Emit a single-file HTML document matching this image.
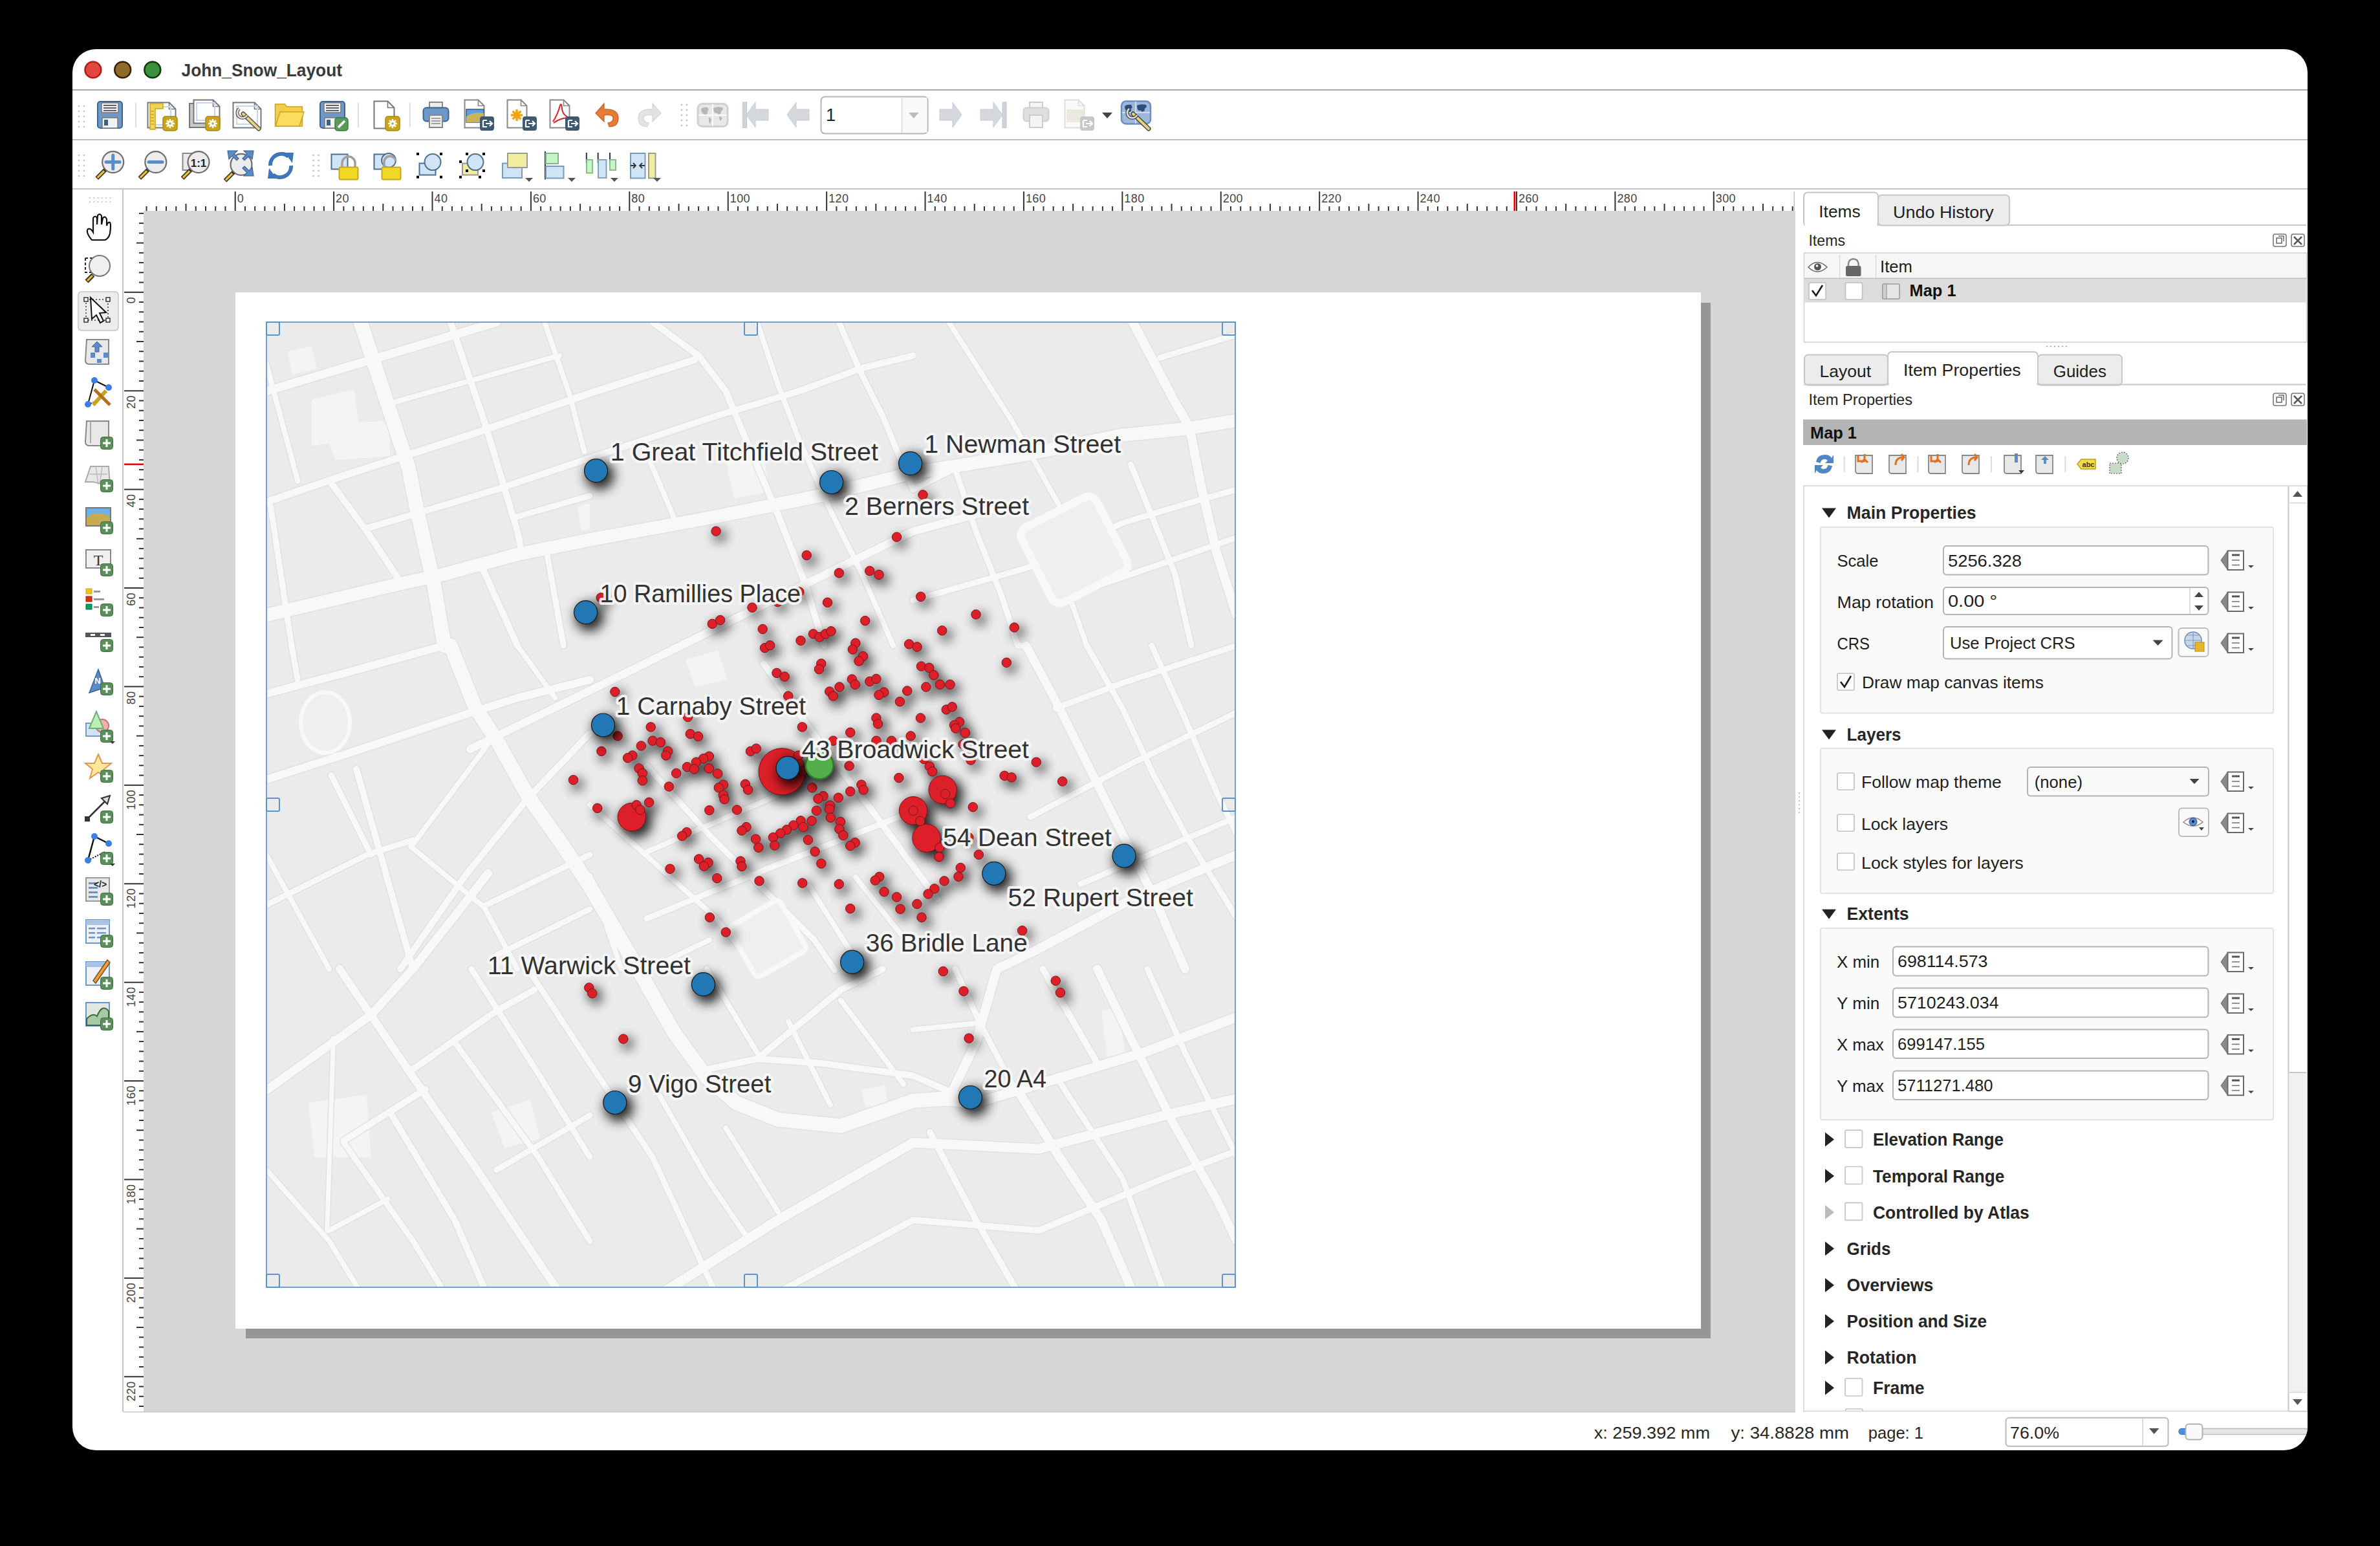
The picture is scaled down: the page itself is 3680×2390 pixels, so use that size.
<!DOCTYPE html>
<html><head><meta charset="utf-8"><style>
html,body{margin:0;padding:0;background:#000;width:3680px;height:2390px;overflow:hidden}
svg{position:absolute;left:0;top:0;font-family:"Liberation Sans", sans-serif}
</style></head><body>
<svg width="3680" height="2390" viewBox="0 0 3680 2390">
<defs><clipPath id="wclip"><rect x="112" y="76" width="3456" height="2166" rx="36"/></clipPath>
<clipPath id="mclip"><rect x="412" y="498" width="1498" height="1492"/></clipPath>
<filter id="blur4" x="-50%" y="-50%" width="200%" height="200%"><feGaussianBlur stdDeviation="9"/></filter>
</defs>
<g clip-path="url(#wclip)">
<rect x="112" y="76" width="3456" height="2166" fill="#fff"/>
<circle cx="143.90" cy="107.90" r="12.40" fill="#e2463f" stroke="#b11d17" stroke-width="2.6" />
<circle cx="189.70" cy="107.90" r="12.40" fill="#8f6a28" stroke="#3b1f06" stroke-width="2.6" />
<circle cx="235.80" cy="107.90" r="12.40" fill="#3c8f3c" stroke="#0b3b0b" stroke-width="2.6" />
<text x="280.50" y="118.17" font-size="27" fill="#3a3a3a" font-weight="bold" text-anchor="start" textLength="248.5" lengthAdjust="spacingAndGlyphs" >John_Snow_Layout</text>
<rect x="112.00" y="138.00" width="3456.00" height="2.00" rx="0" fill="#a6a6a6" stroke="none" stroke-width="1" />
<rect x="112.00" y="215.00" width="3456.00" height="2.00" rx="0" fill="#c4c4c4" stroke="none" stroke-width="1" />
<rect x="112.00" y="291.00" width="3456.00" height="2.00" rx="0" fill="#c4c4c4" stroke="none" stroke-width="1" />
<rect x="189.00" y="293.00" width="2.00" height="1889.00" rx="0" fill="#c4c4c4" stroke="none" stroke-width="1" />
<rect x="222.00" y="326.00" width="2554.00" height="1856.00" rx="0" fill="#d6d6d6" stroke="none" stroke-width="1" />
<rect x="190.00" y="2182.00" width="2586.00" height="1.50" rx="0" fill="#c8c8c8" stroke="none" stroke-width="1" />
<rect x="380.00" y="468.00" width="2265.00" height="1601.00" rx="0" fill="#969696" stroke="none" stroke-width="1" />
<rect x="364.00" y="452.00" width="2266.00" height="1602.00" rx="0" fill="#fff" stroke="none" stroke-width="1" />
<rect x="225.53" y="319.00" width="2.00" height="7.00" rx="0" fill="#333" stroke="none" stroke-width="1" />
<rect x="240.78" y="319.00" width="2.00" height="7.00" rx="0" fill="#333" stroke="none" stroke-width="1" />
<rect x="256.02" y="319.00" width="2.00" height="7.00" rx="0" fill="#333" stroke="none" stroke-width="1" />
<rect x="271.26" y="319.00" width="2.00" height="7.00" rx="0" fill="#333" stroke="none" stroke-width="1" />
<rect x="286.50" y="315.00" width="2.00" height="11.00" rx="0" fill="#333" stroke="none" stroke-width="1" />
<rect x="301.74" y="319.00" width="2.00" height="7.00" rx="0" fill="#333" stroke="none" stroke-width="1" />
<rect x="316.98" y="319.00" width="2.00" height="7.00" rx="0" fill="#333" stroke="none" stroke-width="1" />
<rect x="332.22" y="319.00" width="2.00" height="7.00" rx="0" fill="#333" stroke="none" stroke-width="1" />
<rect x="347.46" y="319.00" width="2.00" height="7.00" rx="0" fill="#333" stroke="none" stroke-width="1" />
<rect x="362.70" y="296.00" width="2.00" height="30.00" rx="0" fill="#333" stroke="none" stroke-width="1" />
<text x="366.70" y="312.50" font-size="18" fill="#444" font-weight="normal" text-anchor="start" letter-spacing="0.4">0</text>
<rect x="377.94" y="319.00" width="2.00" height="7.00" rx="0" fill="#333" stroke="none" stroke-width="1" />
<rect x="393.18" y="319.00" width="2.00" height="7.00" rx="0" fill="#333" stroke="none" stroke-width="1" />
<rect x="408.42" y="319.00" width="2.00" height="7.00" rx="0" fill="#333" stroke="none" stroke-width="1" />
<rect x="423.66" y="319.00" width="2.00" height="7.00" rx="0" fill="#333" stroke="none" stroke-width="1" />
<rect x="438.90" y="315.00" width="2.00" height="11.00" rx="0" fill="#333" stroke="none" stroke-width="1" />
<rect x="454.14" y="319.00" width="2.00" height="7.00" rx="0" fill="#333" stroke="none" stroke-width="1" />
<rect x="469.38" y="319.00" width="2.00" height="7.00" rx="0" fill="#333" stroke="none" stroke-width="1" />
<rect x="484.62" y="319.00" width="2.00" height="7.00" rx="0" fill="#333" stroke="none" stroke-width="1" />
<rect x="499.87" y="319.00" width="2.00" height="7.00" rx="0" fill="#333" stroke="none" stroke-width="1" />
<rect x="515.11" y="296.00" width="2.00" height="30.00" rx="0" fill="#333" stroke="none" stroke-width="1" />
<text x="519.11" y="312.50" font-size="18" fill="#444" font-weight="normal" text-anchor="start" letter-spacing="0.4">20</text>
<rect x="530.35" y="319.00" width="2.00" height="7.00" rx="0" fill="#333" stroke="none" stroke-width="1" />
<rect x="545.59" y="319.00" width="2.00" height="7.00" rx="0" fill="#333" stroke="none" stroke-width="1" />
<rect x="560.83" y="319.00" width="2.00" height="7.00" rx="0" fill="#333" stroke="none" stroke-width="1" />
<rect x="576.07" y="319.00" width="2.00" height="7.00" rx="0" fill="#333" stroke="none" stroke-width="1" />
<rect x="591.31" y="315.00" width="2.00" height="11.00" rx="0" fill="#333" stroke="none" stroke-width="1" />
<rect x="606.55" y="319.00" width="2.00" height="7.00" rx="0" fill="#333" stroke="none" stroke-width="1" />
<rect x="621.79" y="319.00" width="2.00" height="7.00" rx="0" fill="#333" stroke="none" stroke-width="1" />
<rect x="637.03" y="319.00" width="2.00" height="7.00" rx="0" fill="#333" stroke="none" stroke-width="1" />
<rect x="652.27" y="319.00" width="2.00" height="7.00" rx="0" fill="#333" stroke="none" stroke-width="1" />
<rect x="667.51" y="296.00" width="2.00" height="30.00" rx="0" fill="#333" stroke="none" stroke-width="1" />
<text x="671.51" y="312.50" font-size="18" fill="#444" font-weight="normal" text-anchor="start" letter-spacing="0.4">40</text>
<rect x="682.75" y="319.00" width="2.00" height="7.00" rx="0" fill="#333" stroke="none" stroke-width="1" />
<rect x="697.99" y="319.00" width="2.00" height="7.00" rx="0" fill="#333" stroke="none" stroke-width="1" />
<rect x="713.23" y="319.00" width="2.00" height="7.00" rx="0" fill="#333" stroke="none" stroke-width="1" />
<rect x="728.47" y="319.00" width="2.00" height="7.00" rx="0" fill="#333" stroke="none" stroke-width="1" />
<rect x="743.71" y="315.00" width="2.00" height="11.00" rx="0" fill="#333" stroke="none" stroke-width="1" />
<rect x="758.96" y="319.00" width="2.00" height="7.00" rx="0" fill="#333" stroke="none" stroke-width="1" />
<rect x="774.20" y="319.00" width="2.00" height="7.00" rx="0" fill="#333" stroke="none" stroke-width="1" />
<rect x="789.44" y="319.00" width="2.00" height="7.00" rx="0" fill="#333" stroke="none" stroke-width="1" />
<rect x="804.68" y="319.00" width="2.00" height="7.00" rx="0" fill="#333" stroke="none" stroke-width="1" />
<rect x="819.92" y="296.00" width="2.00" height="30.00" rx="0" fill="#333" stroke="none" stroke-width="1" />
<text x="823.92" y="312.50" font-size="18" fill="#444" font-weight="normal" text-anchor="start" letter-spacing="0.4">60</text>
<rect x="835.16" y="319.00" width="2.00" height="7.00" rx="0" fill="#333" stroke="none" stroke-width="1" />
<rect x="850.40" y="319.00" width="2.00" height="7.00" rx="0" fill="#333" stroke="none" stroke-width="1" />
<rect x="865.64" y="319.00" width="2.00" height="7.00" rx="0" fill="#333" stroke="none" stroke-width="1" />
<rect x="880.88" y="319.00" width="2.00" height="7.00" rx="0" fill="#333" stroke="none" stroke-width="1" />
<rect x="896.12" y="315.00" width="2.00" height="11.00" rx="0" fill="#333" stroke="none" stroke-width="1" />
<rect x="911.36" y="319.00" width="2.00" height="7.00" rx="0" fill="#333" stroke="none" stroke-width="1" />
<rect x="926.60" y="319.00" width="2.00" height="7.00" rx="0" fill="#333" stroke="none" stroke-width="1" />
<rect x="941.84" y="319.00" width="2.00" height="7.00" rx="0" fill="#333" stroke="none" stroke-width="1" />
<rect x="957.08" y="319.00" width="2.00" height="7.00" rx="0" fill="#333" stroke="none" stroke-width="1" />
<rect x="972.32" y="296.00" width="2.00" height="30.00" rx="0" fill="#333" stroke="none" stroke-width="1" />
<text x="976.32" y="312.50" font-size="18" fill="#444" font-weight="normal" text-anchor="start" letter-spacing="0.4">80</text>
<rect x="987.56" y="319.00" width="2.00" height="7.00" rx="0" fill="#333" stroke="none" stroke-width="1" />
<rect x="1002.81" y="319.00" width="2.00" height="7.00" rx="0" fill="#333" stroke="none" stroke-width="1" />
<rect x="1018.05" y="319.00" width="2.00" height="7.00" rx="0" fill="#333" stroke="none" stroke-width="1" />
<rect x="1033.29" y="319.00" width="2.00" height="7.00" rx="0" fill="#333" stroke="none" stroke-width="1" />
<rect x="1048.53" y="315.00" width="2.00" height="11.00" rx="0" fill="#333" stroke="none" stroke-width="1" />
<rect x="1063.77" y="319.00" width="2.00" height="7.00" rx="0" fill="#333" stroke="none" stroke-width="1" />
<rect x="1079.01" y="319.00" width="2.00" height="7.00" rx="0" fill="#333" stroke="none" stroke-width="1" />
<rect x="1094.25" y="319.00" width="2.00" height="7.00" rx="0" fill="#333" stroke="none" stroke-width="1" />
<rect x="1109.49" y="319.00" width="2.00" height="7.00" rx="0" fill="#333" stroke="none" stroke-width="1" />
<rect x="1124.73" y="296.00" width="2.00" height="30.00" rx="0" fill="#333" stroke="none" stroke-width="1" />
<text x="1128.73" y="312.50" font-size="18" fill="#444" font-weight="normal" text-anchor="start" letter-spacing="0.4">100</text>
<rect x="1139.97" y="319.00" width="2.00" height="7.00" rx="0" fill="#333" stroke="none" stroke-width="1" />
<rect x="1155.21" y="319.00" width="2.00" height="7.00" rx="0" fill="#333" stroke="none" stroke-width="1" />
<rect x="1170.45" y="319.00" width="2.00" height="7.00" rx="0" fill="#333" stroke="none" stroke-width="1" />
<rect x="1185.69" y="319.00" width="2.00" height="7.00" rx="0" fill="#333" stroke="none" stroke-width="1" />
<rect x="1200.93" y="315.00" width="2.00" height="11.00" rx="0" fill="#333" stroke="none" stroke-width="1" />
<rect x="1216.17" y="319.00" width="2.00" height="7.00" rx="0" fill="#333" stroke="none" stroke-width="1" />
<rect x="1231.41" y="319.00" width="2.00" height="7.00" rx="0" fill="#333" stroke="none" stroke-width="1" />
<rect x="1246.65" y="319.00" width="2.00" height="7.00" rx="0" fill="#333" stroke="none" stroke-width="1" />
<rect x="1261.90" y="319.00" width="2.00" height="7.00" rx="0" fill="#333" stroke="none" stroke-width="1" />
<rect x="1277.14" y="296.00" width="2.00" height="30.00" rx="0" fill="#333" stroke="none" stroke-width="1" />
<text x="1281.14" y="312.50" font-size="18" fill="#444" font-weight="normal" text-anchor="start" letter-spacing="0.4">120</text>
<rect x="1292.38" y="319.00" width="2.00" height="7.00" rx="0" fill="#333" stroke="none" stroke-width="1" />
<rect x="1307.62" y="319.00" width="2.00" height="7.00" rx="0" fill="#333" stroke="none" stroke-width="1" />
<rect x="1322.86" y="319.00" width="2.00" height="7.00" rx="0" fill="#333" stroke="none" stroke-width="1" />
<rect x="1338.10" y="319.00" width="2.00" height="7.00" rx="0" fill="#333" stroke="none" stroke-width="1" />
<rect x="1353.34" y="315.00" width="2.00" height="11.00" rx="0" fill="#333" stroke="none" stroke-width="1" />
<rect x="1368.58" y="319.00" width="2.00" height="7.00" rx="0" fill="#333" stroke="none" stroke-width="1" />
<rect x="1383.82" y="319.00" width="2.00" height="7.00" rx="0" fill="#333" stroke="none" stroke-width="1" />
<rect x="1399.06" y="319.00" width="2.00" height="7.00" rx="0" fill="#333" stroke="none" stroke-width="1" />
<rect x="1414.30" y="319.00" width="2.00" height="7.00" rx="0" fill="#333" stroke="none" stroke-width="1" />
<rect x="1429.54" y="296.00" width="2.00" height="30.00" rx="0" fill="#333" stroke="none" stroke-width="1" />
<text x="1433.54" y="312.50" font-size="18" fill="#444" font-weight="normal" text-anchor="start" letter-spacing="0.4">140</text>
<rect x="1444.78" y="319.00" width="2.00" height="7.00" rx="0" fill="#333" stroke="none" stroke-width="1" />
<rect x="1460.02" y="319.00" width="2.00" height="7.00" rx="0" fill="#333" stroke="none" stroke-width="1" />
<rect x="1475.26" y="319.00" width="2.00" height="7.00" rx="0" fill="#333" stroke="none" stroke-width="1" />
<rect x="1490.50" y="319.00" width="2.00" height="7.00" rx="0" fill="#333" stroke="none" stroke-width="1" />
<rect x="1505.75" y="315.00" width="2.00" height="11.00" rx="0" fill="#333" stroke="none" stroke-width="1" />
<rect x="1520.99" y="319.00" width="2.00" height="7.00" rx="0" fill="#333" stroke="none" stroke-width="1" />
<rect x="1536.23" y="319.00" width="2.00" height="7.00" rx="0" fill="#333" stroke="none" stroke-width="1" />
<rect x="1551.47" y="319.00" width="2.00" height="7.00" rx="0" fill="#333" stroke="none" stroke-width="1" />
<rect x="1566.71" y="319.00" width="2.00" height="7.00" rx="0" fill="#333" stroke="none" stroke-width="1" />
<rect x="1581.95" y="296.00" width="2.00" height="30.00" rx="0" fill="#333" stroke="none" stroke-width="1" />
<text x="1585.95" y="312.50" font-size="18" fill="#444" font-weight="normal" text-anchor="start" letter-spacing="0.4">160</text>
<rect x="1597.19" y="319.00" width="2.00" height="7.00" rx="0" fill="#333" stroke="none" stroke-width="1" />
<rect x="1612.43" y="319.00" width="2.00" height="7.00" rx="0" fill="#333" stroke="none" stroke-width="1" />
<rect x="1627.67" y="319.00" width="2.00" height="7.00" rx="0" fill="#333" stroke="none" stroke-width="1" />
<rect x="1642.91" y="319.00" width="2.00" height="7.00" rx="0" fill="#333" stroke="none" stroke-width="1" />
<rect x="1658.15" y="315.00" width="2.00" height="11.00" rx="0" fill="#333" stroke="none" stroke-width="1" />
<rect x="1673.39" y="319.00" width="2.00" height="7.00" rx="0" fill="#333" stroke="none" stroke-width="1" />
<rect x="1688.63" y="319.00" width="2.00" height="7.00" rx="0" fill="#333" stroke="none" stroke-width="1" />
<rect x="1703.87" y="319.00" width="2.00" height="7.00" rx="0" fill="#333" stroke="none" stroke-width="1" />
<rect x="1719.11" y="319.00" width="2.00" height="7.00" rx="0" fill="#333" stroke="none" stroke-width="1" />
<rect x="1734.35" y="296.00" width="2.00" height="30.00" rx="0" fill="#333" stroke="none" stroke-width="1" />
<text x="1738.35" y="312.50" font-size="18" fill="#444" font-weight="normal" text-anchor="start" letter-spacing="0.4">180</text>
<rect x="1749.59" y="319.00" width="2.00" height="7.00" rx="0" fill="#333" stroke="none" stroke-width="1" />
<rect x="1764.84" y="319.00" width="2.00" height="7.00" rx="0" fill="#333" stroke="none" stroke-width="1" />
<rect x="1780.08" y="319.00" width="2.00" height="7.00" rx="0" fill="#333" stroke="none" stroke-width="1" />
<rect x="1795.32" y="319.00" width="2.00" height="7.00" rx="0" fill="#333" stroke="none" stroke-width="1" />
<rect x="1810.56" y="315.00" width="2.00" height="11.00" rx="0" fill="#333" stroke="none" stroke-width="1" />
<rect x="1825.80" y="319.00" width="2.00" height="7.00" rx="0" fill="#333" stroke="none" stroke-width="1" />
<rect x="1841.04" y="319.00" width="2.00" height="7.00" rx="0" fill="#333" stroke="none" stroke-width="1" />
<rect x="1856.28" y="319.00" width="2.00" height="7.00" rx="0" fill="#333" stroke="none" stroke-width="1" />
<rect x="1871.52" y="319.00" width="2.00" height="7.00" rx="0" fill="#333" stroke="none" stroke-width="1" />
<rect x="1886.76" y="296.00" width="2.00" height="30.00" rx="0" fill="#333" stroke="none" stroke-width="1" />
<text x="1890.76" y="312.50" font-size="18" fill="#444" font-weight="normal" text-anchor="start" letter-spacing="0.4">200</text>
<rect x="1902.00" y="319.00" width="2.00" height="7.00" rx="0" fill="#333" stroke="none" stroke-width="1" />
<rect x="1917.24" y="319.00" width="2.00" height="7.00" rx="0" fill="#333" stroke="none" stroke-width="1" />
<rect x="1932.48" y="319.00" width="2.00" height="7.00" rx="0" fill="#333" stroke="none" stroke-width="1" />
<rect x="1947.72" y="319.00" width="2.00" height="7.00" rx="0" fill="#333" stroke="none" stroke-width="1" />
<rect x="1962.96" y="315.00" width="2.00" height="11.00" rx="0" fill="#333" stroke="none" stroke-width="1" />
<rect x="1978.20" y="319.00" width="2.00" height="7.00" rx="0" fill="#333" stroke="none" stroke-width="1" />
<rect x="1993.44" y="319.00" width="2.00" height="7.00" rx="0" fill="#333" stroke="none" stroke-width="1" />
<rect x="2008.68" y="319.00" width="2.00" height="7.00" rx="0" fill="#333" stroke="none" stroke-width="1" />
<rect x="2023.93" y="319.00" width="2.00" height="7.00" rx="0" fill="#333" stroke="none" stroke-width="1" />
<rect x="2039.17" y="296.00" width="2.00" height="30.00" rx="0" fill="#333" stroke="none" stroke-width="1" />
<text x="2043.17" y="312.50" font-size="18" fill="#444" font-weight="normal" text-anchor="start" letter-spacing="0.4">220</text>
<rect x="2054.41" y="319.00" width="2.00" height="7.00" rx="0" fill="#333" stroke="none" stroke-width="1" />
<rect x="2069.65" y="319.00" width="2.00" height="7.00" rx="0" fill="#333" stroke="none" stroke-width="1" />
<rect x="2084.89" y="319.00" width="2.00" height="7.00" rx="0" fill="#333" stroke="none" stroke-width="1" />
<rect x="2100.13" y="319.00" width="2.00" height="7.00" rx="0" fill="#333" stroke="none" stroke-width="1" />
<rect x="2115.37" y="315.00" width="2.00" height="11.00" rx="0" fill="#333" stroke="none" stroke-width="1" />
<rect x="2130.61" y="319.00" width="2.00" height="7.00" rx="0" fill="#333" stroke="none" stroke-width="1" />
<rect x="2145.85" y="319.00" width="2.00" height="7.00" rx="0" fill="#333" stroke="none" stroke-width="1" />
<rect x="2161.09" y="319.00" width="2.00" height="7.00" rx="0" fill="#333" stroke="none" stroke-width="1" />
<rect x="2176.33" y="319.00" width="2.00" height="7.00" rx="0" fill="#333" stroke="none" stroke-width="1" />
<rect x="2191.57" y="296.00" width="2.00" height="30.00" rx="0" fill="#333" stroke="none" stroke-width="1" />
<text x="2195.57" y="312.50" font-size="18" fill="#444" font-weight="normal" text-anchor="start" letter-spacing="0.4">240</text>
<rect x="2206.81" y="319.00" width="2.00" height="7.00" rx="0" fill="#333" stroke="none" stroke-width="1" />
<rect x="2222.05" y="319.00" width="2.00" height="7.00" rx="0" fill="#333" stroke="none" stroke-width="1" />
<rect x="2237.29" y="319.00" width="2.00" height="7.00" rx="0" fill="#333" stroke="none" stroke-width="1" />
<rect x="2252.53" y="319.00" width="2.00" height="7.00" rx="0" fill="#333" stroke="none" stroke-width="1" />
<rect x="2267.78" y="315.00" width="2.00" height="11.00" rx="0" fill="#333" stroke="none" stroke-width="1" />
<rect x="2283.02" y="319.00" width="2.00" height="7.00" rx="0" fill="#333" stroke="none" stroke-width="1" />
<rect x="2298.26" y="319.00" width="2.00" height="7.00" rx="0" fill="#333" stroke="none" stroke-width="1" />
<rect x="2313.50" y="319.00" width="2.00" height="7.00" rx="0" fill="#333" stroke="none" stroke-width="1" />
<rect x="2328.74" y="319.00" width="2.00" height="7.00" rx="0" fill="#333" stroke="none" stroke-width="1" />
<rect x="2343.98" y="296.00" width="2.00" height="30.00" rx="0" fill="#333" stroke="none" stroke-width="1" />
<text x="2347.98" y="312.50" font-size="18" fill="#444" font-weight="normal" text-anchor="start" letter-spacing="0.4">260</text>
<rect x="2359.22" y="319.00" width="2.00" height="7.00" rx="0" fill="#333" stroke="none" stroke-width="1" />
<rect x="2374.46" y="319.00" width="2.00" height="7.00" rx="0" fill="#333" stroke="none" stroke-width="1" />
<rect x="2389.70" y="319.00" width="2.00" height="7.00" rx="0" fill="#333" stroke="none" stroke-width="1" />
<rect x="2404.94" y="319.00" width="2.00" height="7.00" rx="0" fill="#333" stroke="none" stroke-width="1" />
<rect x="2420.18" y="315.00" width="2.00" height="11.00" rx="0" fill="#333" stroke="none" stroke-width="1" />
<rect x="2435.42" y="319.00" width="2.00" height="7.00" rx="0" fill="#333" stroke="none" stroke-width="1" />
<rect x="2450.66" y="319.00" width="2.00" height="7.00" rx="0" fill="#333" stroke="none" stroke-width="1" />
<rect x="2465.90" y="319.00" width="2.00" height="7.00" rx="0" fill="#333" stroke="none" stroke-width="1" />
<rect x="2481.14" y="319.00" width="2.00" height="7.00" rx="0" fill="#333" stroke="none" stroke-width="1" />
<rect x="2496.38" y="296.00" width="2.00" height="30.00" rx="0" fill="#333" stroke="none" stroke-width="1" />
<text x="2500.38" y="312.50" font-size="18" fill="#444" font-weight="normal" text-anchor="start" letter-spacing="0.4">280</text>
<rect x="2511.62" y="319.00" width="2.00" height="7.00" rx="0" fill="#333" stroke="none" stroke-width="1" />
<rect x="2526.87" y="319.00" width="2.00" height="7.00" rx="0" fill="#333" stroke="none" stroke-width="1" />
<rect x="2542.11" y="319.00" width="2.00" height="7.00" rx="0" fill="#333" stroke="none" stroke-width="1" />
<rect x="2557.35" y="319.00" width="2.00" height="7.00" rx="0" fill="#333" stroke="none" stroke-width="1" />
<rect x="2572.59" y="315.00" width="2.00" height="11.00" rx="0" fill="#333" stroke="none" stroke-width="1" />
<rect x="2587.83" y="319.00" width="2.00" height="7.00" rx="0" fill="#333" stroke="none" stroke-width="1" />
<rect x="2603.07" y="319.00" width="2.00" height="7.00" rx="0" fill="#333" stroke="none" stroke-width="1" />
<rect x="2618.31" y="319.00" width="2.00" height="7.00" rx="0" fill="#333" stroke="none" stroke-width="1" />
<rect x="2633.55" y="319.00" width="2.00" height="7.00" rx="0" fill="#333" stroke="none" stroke-width="1" />
<rect x="2648.79" y="296.00" width="2.00" height="30.00" rx="0" fill="#333" stroke="none" stroke-width="1" />
<text x="2652.79" y="312.50" font-size="18" fill="#444" font-weight="normal" text-anchor="start" letter-spacing="0.4">300</text>
<rect x="2664.03" y="319.00" width="2.00" height="7.00" rx="0" fill="#333" stroke="none" stroke-width="1" />
<rect x="2679.27" y="319.00" width="2.00" height="7.00" rx="0" fill="#333" stroke="none" stroke-width="1" />
<rect x="2694.51" y="319.00" width="2.00" height="7.00" rx="0" fill="#333" stroke="none" stroke-width="1" />
<rect x="2709.75" y="319.00" width="2.00" height="7.00" rx="0" fill="#333" stroke="none" stroke-width="1" />
<rect x="2724.99" y="315.00" width="2.00" height="11.00" rx="0" fill="#333" stroke="none" stroke-width="1" />
<rect x="2740.23" y="319.00" width="2.00" height="7.00" rx="0" fill="#333" stroke="none" stroke-width="1" />
<rect x="2755.47" y="319.00" width="2.00" height="7.00" rx="0" fill="#333" stroke="none" stroke-width="1" />
<rect x="2770.71" y="319.00" width="2.00" height="7.00" rx="0" fill="#333" stroke="none" stroke-width="1" />
<rect x="215.00" y="328.88" width="7.00" height="2.00" rx="0" fill="#333" stroke="none" stroke-width="1" />
<rect x="215.00" y="344.12" width="7.00" height="2.00" rx="0" fill="#333" stroke="none" stroke-width="1" />
<rect x="215.00" y="359.36" width="7.00" height="2.00" rx="0" fill="#333" stroke="none" stroke-width="1" />
<rect x="211.00" y="374.60" width="11.00" height="2.00" rx="0" fill="#333" stroke="none" stroke-width="1" />
<rect x="215.00" y="389.84" width="7.00" height="2.00" rx="0" fill="#333" stroke="none" stroke-width="1" />
<rect x="215.00" y="405.08" width="7.00" height="2.00" rx="0" fill="#333" stroke="none" stroke-width="1" />
<rect x="215.00" y="420.32" width="7.00" height="2.00" rx="0" fill="#333" stroke="none" stroke-width="1" />
<rect x="215.00" y="435.56" width="7.00" height="2.00" rx="0" fill="#333" stroke="none" stroke-width="1" />
<rect x="192.00" y="450.80" width="30.00" height="2.00" rx="0" fill="#333" stroke="none" stroke-width="1" />
<text transform="translate(209,458.8) rotate(-90)" font-size="18" fill="#444" text-anchor="end" letter-spacing="0.4">0</text>
<rect x="215.00" y="466.04" width="7.00" height="2.00" rx="0" fill="#333" stroke="none" stroke-width="1" />
<rect x="215.00" y="481.28" width="7.00" height="2.00" rx="0" fill="#333" stroke="none" stroke-width="1" />
<rect x="215.00" y="496.52" width="7.00" height="2.00" rx="0" fill="#333" stroke="none" stroke-width="1" />
<rect x="215.00" y="511.76" width="7.00" height="2.00" rx="0" fill="#333" stroke="none" stroke-width="1" />
<rect x="211.00" y="527.00" width="11.00" height="2.00" rx="0" fill="#333" stroke="none" stroke-width="1" />
<rect x="215.00" y="542.24" width="7.00" height="2.00" rx="0" fill="#333" stroke="none" stroke-width="1" />
<rect x="215.00" y="557.48" width="7.00" height="2.00" rx="0" fill="#333" stroke="none" stroke-width="1" />
<rect x="215.00" y="572.72" width="7.00" height="2.00" rx="0" fill="#333" stroke="none" stroke-width="1" />
<rect x="215.00" y="587.97" width="7.00" height="2.00" rx="0" fill="#333" stroke="none" stroke-width="1" />
<rect x="192.00" y="603.21" width="30.00" height="2.00" rx="0" fill="#333" stroke="none" stroke-width="1" />
<text transform="translate(209,611.2) rotate(-90)" font-size="18" fill="#444" text-anchor="end" letter-spacing="0.4">20</text>
<rect x="215.00" y="618.45" width="7.00" height="2.00" rx="0" fill="#333" stroke="none" stroke-width="1" />
<rect x="215.00" y="633.69" width="7.00" height="2.00" rx="0" fill="#333" stroke="none" stroke-width="1" />
<rect x="215.00" y="648.93" width="7.00" height="2.00" rx="0" fill="#333" stroke="none" stroke-width="1" />
<rect x="215.00" y="664.17" width="7.00" height="2.00" rx="0" fill="#333" stroke="none" stroke-width="1" />
<rect x="211.00" y="679.41" width="11.00" height="2.00" rx="0" fill="#333" stroke="none" stroke-width="1" />
<rect x="215.00" y="694.65" width="7.00" height="2.00" rx="0" fill="#333" stroke="none" stroke-width="1" />
<rect x="215.00" y="709.89" width="7.00" height="2.00" rx="0" fill="#333" stroke="none" stroke-width="1" />
<rect x="215.00" y="725.13" width="7.00" height="2.00" rx="0" fill="#333" stroke="none" stroke-width="1" />
<rect x="215.00" y="740.37" width="7.00" height="2.00" rx="0" fill="#333" stroke="none" stroke-width="1" />
<rect x="192.00" y="755.61" width="30.00" height="2.00" rx="0" fill="#333" stroke="none" stroke-width="1" />
<text transform="translate(209,763.6) rotate(-90)" font-size="18" fill="#444" text-anchor="end" letter-spacing="0.4">40</text>
<rect x="215.00" y="770.85" width="7.00" height="2.00" rx="0" fill="#333" stroke="none" stroke-width="1" />
<rect x="215.00" y="786.09" width="7.00" height="2.00" rx="0" fill="#333" stroke="none" stroke-width="1" />
<rect x="215.00" y="801.33" width="7.00" height="2.00" rx="0" fill="#333" stroke="none" stroke-width="1" />
<rect x="215.00" y="816.57" width="7.00" height="2.00" rx="0" fill="#333" stroke="none" stroke-width="1" />
<rect x="211.00" y="831.82" width="11.00" height="2.00" rx="0" fill="#333" stroke="none" stroke-width="1" />
<rect x="215.00" y="847.06" width="7.00" height="2.00" rx="0" fill="#333" stroke="none" stroke-width="1" />
<rect x="215.00" y="862.30" width="7.00" height="2.00" rx="0" fill="#333" stroke="none" stroke-width="1" />
<rect x="215.00" y="877.54" width="7.00" height="2.00" rx="0" fill="#333" stroke="none" stroke-width="1" />
<rect x="215.00" y="892.78" width="7.00" height="2.00" rx="0" fill="#333" stroke="none" stroke-width="1" />
<rect x="192.00" y="908.02" width="30.00" height="2.00" rx="0" fill="#333" stroke="none" stroke-width="1" />
<text transform="translate(209,916.0) rotate(-90)" font-size="18" fill="#444" text-anchor="end" letter-spacing="0.4">60</text>
<rect x="215.00" y="923.26" width="7.00" height="2.00" rx="0" fill="#333" stroke="none" stroke-width="1" />
<rect x="215.00" y="938.50" width="7.00" height="2.00" rx="0" fill="#333" stroke="none" stroke-width="1" />
<rect x="215.00" y="953.74" width="7.00" height="2.00" rx="0" fill="#333" stroke="none" stroke-width="1" />
<rect x="215.00" y="968.98" width="7.00" height="2.00" rx="0" fill="#333" stroke="none" stroke-width="1" />
<rect x="211.00" y="984.22" width="11.00" height="2.00" rx="0" fill="#333" stroke="none" stroke-width="1" />
<rect x="215.00" y="999.46" width="7.00" height="2.00" rx="0" fill="#333" stroke="none" stroke-width="1" />
<rect x="215.00" y="1014.70" width="7.00" height="2.00" rx="0" fill="#333" stroke="none" stroke-width="1" />
<rect x="215.00" y="1029.94" width="7.00" height="2.00" rx="0" fill="#333" stroke="none" stroke-width="1" />
<rect x="215.00" y="1045.18" width="7.00" height="2.00" rx="0" fill="#333" stroke="none" stroke-width="1" />
<rect x="192.00" y="1060.42" width="30.00" height="2.00" rx="0" fill="#333" stroke="none" stroke-width="1" />
<text transform="translate(209,1068.4) rotate(-90)" font-size="18" fill="#444" text-anchor="end" letter-spacing="0.4">80</text>
<rect x="215.00" y="1075.66" width="7.00" height="2.00" rx="0" fill="#333" stroke="none" stroke-width="1" />
<rect x="215.00" y="1090.91" width="7.00" height="2.00" rx="0" fill="#333" stroke="none" stroke-width="1" />
<rect x="215.00" y="1106.15" width="7.00" height="2.00" rx="0" fill="#333" stroke="none" stroke-width="1" />
<rect x="215.00" y="1121.39" width="7.00" height="2.00" rx="0" fill="#333" stroke="none" stroke-width="1" />
<rect x="211.00" y="1136.63" width="11.00" height="2.00" rx="0" fill="#333" stroke="none" stroke-width="1" />
<rect x="215.00" y="1151.87" width="7.00" height="2.00" rx="0" fill="#333" stroke="none" stroke-width="1" />
<rect x="215.00" y="1167.11" width="7.00" height="2.00" rx="0" fill="#333" stroke="none" stroke-width="1" />
<rect x="215.00" y="1182.35" width="7.00" height="2.00" rx="0" fill="#333" stroke="none" stroke-width="1" />
<rect x="215.00" y="1197.59" width="7.00" height="2.00" rx="0" fill="#333" stroke="none" stroke-width="1" />
<rect x="192.00" y="1212.83" width="30.00" height="2.00" rx="0" fill="#333" stroke="none" stroke-width="1" />
<text transform="translate(209,1220.8) rotate(-90)" font-size="18" fill="#444" text-anchor="end" letter-spacing="0.4">100</text>
<rect x="215.00" y="1228.07" width="7.00" height="2.00" rx="0" fill="#333" stroke="none" stroke-width="1" />
<rect x="215.00" y="1243.31" width="7.00" height="2.00" rx="0" fill="#333" stroke="none" stroke-width="1" />
<rect x="215.00" y="1258.55" width="7.00" height="2.00" rx="0" fill="#333" stroke="none" stroke-width="1" />
<rect x="215.00" y="1273.79" width="7.00" height="2.00" rx="0" fill="#333" stroke="none" stroke-width="1" />
<rect x="211.00" y="1289.03" width="11.00" height="2.00" rx="0" fill="#333" stroke="none" stroke-width="1" />
<rect x="215.00" y="1304.27" width="7.00" height="2.00" rx="0" fill="#333" stroke="none" stroke-width="1" />
<rect x="215.00" y="1319.51" width="7.00" height="2.00" rx="0" fill="#333" stroke="none" stroke-width="1" />
<rect x="215.00" y="1334.75" width="7.00" height="2.00" rx="0" fill="#333" stroke="none" stroke-width="1" />
<rect x="215.00" y="1350.00" width="7.00" height="2.00" rx="0" fill="#333" stroke="none" stroke-width="1" />
<rect x="192.00" y="1365.24" width="30.00" height="2.00" rx="0" fill="#333" stroke="none" stroke-width="1" />
<text transform="translate(209,1373.2) rotate(-90)" font-size="18" fill="#444" text-anchor="end" letter-spacing="0.4">120</text>
<rect x="215.00" y="1380.48" width="7.00" height="2.00" rx="0" fill="#333" stroke="none" stroke-width="1" />
<rect x="215.00" y="1395.72" width="7.00" height="2.00" rx="0" fill="#333" stroke="none" stroke-width="1" />
<rect x="215.00" y="1410.96" width="7.00" height="2.00" rx="0" fill="#333" stroke="none" stroke-width="1" />
<rect x="215.00" y="1426.20" width="7.00" height="2.00" rx="0" fill="#333" stroke="none" stroke-width="1" />
<rect x="211.00" y="1441.44" width="11.00" height="2.00" rx="0" fill="#333" stroke="none" stroke-width="1" />
<rect x="215.00" y="1456.68" width="7.00" height="2.00" rx="0" fill="#333" stroke="none" stroke-width="1" />
<rect x="215.00" y="1471.92" width="7.00" height="2.00" rx="0" fill="#333" stroke="none" stroke-width="1" />
<rect x="215.00" y="1487.16" width="7.00" height="2.00" rx="0" fill="#333" stroke="none" stroke-width="1" />
<rect x="215.00" y="1502.40" width="7.00" height="2.00" rx="0" fill="#333" stroke="none" stroke-width="1" />
<rect x="192.00" y="1517.64" width="30.00" height="2.00" rx="0" fill="#333" stroke="none" stroke-width="1" />
<text transform="translate(209,1525.6) rotate(-90)" font-size="18" fill="#444" text-anchor="end" letter-spacing="0.4">140</text>
<rect x="215.00" y="1532.88" width="7.00" height="2.00" rx="0" fill="#333" stroke="none" stroke-width="1" />
<rect x="215.00" y="1548.12" width="7.00" height="2.00" rx="0" fill="#333" stroke="none" stroke-width="1" />
<rect x="215.00" y="1563.36" width="7.00" height="2.00" rx="0" fill="#333" stroke="none" stroke-width="1" />
<rect x="215.00" y="1578.60" width="7.00" height="2.00" rx="0" fill="#333" stroke="none" stroke-width="1" />
<rect x="211.00" y="1593.85" width="11.00" height="2.00" rx="0" fill="#333" stroke="none" stroke-width="1" />
<rect x="215.00" y="1609.09" width="7.00" height="2.00" rx="0" fill="#333" stroke="none" stroke-width="1" />
<rect x="215.00" y="1624.33" width="7.00" height="2.00" rx="0" fill="#333" stroke="none" stroke-width="1" />
<rect x="215.00" y="1639.57" width="7.00" height="2.00" rx="0" fill="#333" stroke="none" stroke-width="1" />
<rect x="215.00" y="1654.81" width="7.00" height="2.00" rx="0" fill="#333" stroke="none" stroke-width="1" />
<rect x="192.00" y="1670.05" width="30.00" height="2.00" rx="0" fill="#333" stroke="none" stroke-width="1" />
<text transform="translate(209,1678.0) rotate(-90)" font-size="18" fill="#444" text-anchor="end" letter-spacing="0.4">160</text>
<rect x="215.00" y="1685.29" width="7.00" height="2.00" rx="0" fill="#333" stroke="none" stroke-width="1" />
<rect x="215.00" y="1700.53" width="7.00" height="2.00" rx="0" fill="#333" stroke="none" stroke-width="1" />
<rect x="215.00" y="1715.77" width="7.00" height="2.00" rx="0" fill="#333" stroke="none" stroke-width="1" />
<rect x="215.00" y="1731.01" width="7.00" height="2.00" rx="0" fill="#333" stroke="none" stroke-width="1" />
<rect x="211.00" y="1746.25" width="11.00" height="2.00" rx="0" fill="#333" stroke="none" stroke-width="1" />
<rect x="215.00" y="1761.49" width="7.00" height="2.00" rx="0" fill="#333" stroke="none" stroke-width="1" />
<rect x="215.00" y="1776.73" width="7.00" height="2.00" rx="0" fill="#333" stroke="none" stroke-width="1" />
<rect x="215.00" y="1791.97" width="7.00" height="2.00" rx="0" fill="#333" stroke="none" stroke-width="1" />
<rect x="215.00" y="1807.21" width="7.00" height="2.00" rx="0" fill="#333" stroke="none" stroke-width="1" />
<rect x="192.00" y="1822.45" width="30.00" height="2.00" rx="0" fill="#333" stroke="none" stroke-width="1" />
<text transform="translate(209,1830.5) rotate(-90)" font-size="18" fill="#444" text-anchor="end" letter-spacing="0.4">180</text>
<rect x="215.00" y="1837.69" width="7.00" height="2.00" rx="0" fill="#333" stroke="none" stroke-width="1" />
<rect x="215.00" y="1852.94" width="7.00" height="2.00" rx="0" fill="#333" stroke="none" stroke-width="1" />
<rect x="215.00" y="1868.18" width="7.00" height="2.00" rx="0" fill="#333" stroke="none" stroke-width="1" />
<rect x="215.00" y="1883.42" width="7.00" height="2.00" rx="0" fill="#333" stroke="none" stroke-width="1" />
<rect x="211.00" y="1898.66" width="11.00" height="2.00" rx="0" fill="#333" stroke="none" stroke-width="1" />
<rect x="215.00" y="1913.90" width="7.00" height="2.00" rx="0" fill="#333" stroke="none" stroke-width="1" />
<rect x="215.00" y="1929.14" width="7.00" height="2.00" rx="0" fill="#333" stroke="none" stroke-width="1" />
<rect x="215.00" y="1944.38" width="7.00" height="2.00" rx="0" fill="#333" stroke="none" stroke-width="1" />
<rect x="215.00" y="1959.62" width="7.00" height="2.00" rx="0" fill="#333" stroke="none" stroke-width="1" />
<rect x="192.00" y="1974.86" width="30.00" height="2.00" rx="0" fill="#333" stroke="none" stroke-width="1" />
<text transform="translate(209,1982.9) rotate(-90)" font-size="18" fill="#444" text-anchor="end" letter-spacing="0.4">200</text>
<rect x="215.00" y="1990.10" width="7.00" height="2.00" rx="0" fill="#333" stroke="none" stroke-width="1" />
<rect x="215.00" y="2005.34" width="7.00" height="2.00" rx="0" fill="#333" stroke="none" stroke-width="1" />
<rect x="215.00" y="2020.58" width="7.00" height="2.00" rx="0" fill="#333" stroke="none" stroke-width="1" />
<rect x="215.00" y="2035.82" width="7.00" height="2.00" rx="0" fill="#333" stroke="none" stroke-width="1" />
<rect x="211.00" y="2051.06" width="11.00" height="2.00" rx="0" fill="#333" stroke="none" stroke-width="1" />
<rect x="215.00" y="2066.30" width="7.00" height="2.00" rx="0" fill="#333" stroke="none" stroke-width="1" />
<rect x="215.00" y="2081.54" width="7.00" height="2.00" rx="0" fill="#333" stroke="none" stroke-width="1" />
<rect x="215.00" y="2096.78" width="7.00" height="2.00" rx="0" fill="#333" stroke="none" stroke-width="1" />
<rect x="215.00" y="2112.03" width="7.00" height="2.00" rx="0" fill="#333" stroke="none" stroke-width="1" />
<rect x="192.00" y="2127.27" width="30.00" height="2.00" rx="0" fill="#333" stroke="none" stroke-width="1" />
<text transform="translate(209,2135.3) rotate(-90)" font-size="18" fill="#444" text-anchor="end" letter-spacing="0.4">220</text>
<rect x="215.00" y="2142.51" width="7.00" height="2.00" rx="0" fill="#333" stroke="none" stroke-width="1" />
<rect x="215.00" y="2157.75" width="7.00" height="2.00" rx="0" fill="#333" stroke="none" stroke-width="1" />
<rect x="215.00" y="2172.99" width="7.00" height="2.00" rx="0" fill="#333" stroke="none" stroke-width="1" />
<rect x="2773.50" y="296.00" width="1.50" height="30.00" rx="0" fill="#c4c4c4" stroke="none" stroke-width="1" />
<rect x="2340.50" y="296.00" width="2.50" height="30.00" rx="0" fill="#e00" stroke="none" stroke-width="1" />
<rect x="192.00" y="716.50" width="30.00" height="2.50" rx="0" fill="#e00" stroke="none" stroke-width="1" />
<text x="2464.70" y="2224.01" font-size="26" fill="#262626" font-weight="normal" text-anchor="start" textLength="179.3" lengthAdjust="spacingAndGlyphs" >x: 259.392 mm</text>
<text x="2676.50" y="2224.01" font-size="26" fill="#262626" font-weight="normal" text-anchor="start" textLength="182.5" lengthAdjust="spacingAndGlyphs" >y: 34.8828 mm</text>
<text x="2888.80" y="2224.01" font-size="26" fill="#262626" font-weight="normal" text-anchor="start" textLength="85.2" lengthAdjust="spacingAndGlyphs" >page: 1</text>
<rect x="3101.50" y="2191.80" width="251.00" height="44.00" rx="5" fill="#fff" stroke="#b9b9b9" stroke-width="2" />
<rect x="3312.40" y="2193.00" width="1.50" height="42.00" rx="0" fill="#d0d0d0" stroke="none" stroke-width="1" />
<text x="3108.00" y="2224.01" font-size="26" fill="#262626" font-weight="normal" text-anchor="start" textLength="76.0" lengthAdjust="spacingAndGlyphs" >76.0%</text>
<path d="M3323 2208 L3338.5 2208 L3330.7 2217 Z" fill="#555" stroke="none" stroke-width="1" />
<rect x="3369.00" y="2208.50" width="200.00" height="9.00" rx="4.5" fill="#e6e6e6" stroke="#bdbdbd" stroke-width="1.5" />
<rect x="3369.00" y="2208.50" width="15.00" height="9.00" rx="4.5" fill="#4a90e2" stroke="#3a70c0" stroke-width="1" />
<rect x="3379.50" y="2201.50" width="26.00" height="24.00" rx="5" fill="#fafafa" stroke="#b0b0b0" stroke-width="2" />
<g clip-path="url(#mclip)">
<rect x="412.00" y="498.00" width="1498.00" height="1492.00" rx="0" fill="#ebebeb" stroke="none" stroke-width="1" />
<g fill="#f4f4f4">
<polygon points="481.5,617.7 547.8,601.5 554.3,653.2 602.8,650 602.8,705 518.7,711.5 509,685.6 481.5,688.8"/>
<polygon points="444.3,543.3 481.5,535 490,570 452,578.9"/>
<polygon points="1122,712 1180,700 1190,760 1135,770"/>
<polygon points="476.7,1705 567,1692 573.7,1789 486.4,1789"/>
<polygon points="1332,1685 1368,1678 1373,1706 1338,1712"/>
<polygon points="1703,1563 1728,1556 1740,1630 1712,1636"/>
<polygon points="893.9,782.6 912,778 912,818 898,820"/>
<polygon points="1060,1020 1110,1005 1125,1050 1075,1062"/>
<polygon points="760,1720 820,1700 835,1760 780,1775"/>
</g>
<path d="M412.0 951.0 L619.0 902.3 L680.4 889.3 L800.0 857.0 L912.0 834.4 L1106.0 798.8 L1267.8 766.4 L1412.0 730.9 L1573.7 705.0 L1735.4 672.6 L1832.4 663.0 L1912.0 650.0" fill="none" stroke="#e1e1e1" stroke-width="23" stroke-linejoin="round" stroke-linecap="round"/>
<path d="M557.5 498.0 L632.0 724.0 L645.0 790.0 L670.7 902.0 L687.0 998.0 L696.6 998.0 L735.4 1095.0 L767.8 1143.5 L816.3 1230.9 L864.8 1298.8 L912.0 1369.9 L986.4 1498.0 L1041.4 1595.0 L1093.1 1666.2 L1138.4 1705.0 L1203.0 1730.9 L1300.1 1740.6 L1412.0 1701.7 L1470.0 1698.0 L1509.0 1705.0" fill="none" stroke="#e1e1e1" stroke-width="25" stroke-linejoin="round" stroke-linecap="round"/>
<path d="M412.0 604.7 L573.7 556.2 L735.4 507.7 L767.8 498.0" fill="none" stroke="#e1e1e1" stroke-width="16" stroke-linejoin="round" stroke-linecap="round"/>
<path d="M412.0 776.0 L525.2 737.3 L735.4 669.4 L912.0 608.0 L1073.7 556.2" fill="none" stroke="#e1e1e1" stroke-width="14" stroke-linejoin="round" stroke-linecap="round"/>
<path d="M567.2 816.6 L638.4 795.5 L767.8 756.7 L912.0 708.2 L1106.0 643.5 L1235.4 604.7 L1332.4 569.1 L1412.0 549.7" fill="none" stroke="#e1e1e1" stroke-width="13" stroke-linejoin="round" stroke-linecap="round"/>
<path d="M800.0 798.8 L912.0 766.4" fill="none" stroke="#e1e1e1" stroke-width="12" stroke-linejoin="round" stroke-linecap="round"/>
<path d="M612.5 620.9 L864.8 549.7" fill="none" stroke="#e1e1e1" stroke-width="11" stroke-linejoin="round" stroke-linecap="round"/>
<path d="M696.6 498.0 L751.6 659.7 L800.0 821.4 L806.6 853.8" fill="none" stroke="#e1e1e1" stroke-width="13" stroke-linejoin="round" stroke-linecap="round"/>
<path d="M842.1 498.0 L881.0 611.2 L903.6 698.5" fill="none" stroke="#e1e1e1" stroke-width="11" stroke-linejoin="round" stroke-linecap="round"/>
<path d="M512.3 747.0 L567.2 821.4 L619.0 899.0" fill="none" stroke="#e1e1e1" stroke-width="13" stroke-linejoin="round" stroke-linecap="round"/>
<path d="M418.5 782.6 L450.8 998.0 L460.0 1050.0" fill="none" stroke="#e1e1e1" stroke-width="12" stroke-linejoin="round" stroke-linecap="round"/>
<path d="M745.1 876.4 L800.0 998.0" fill="none" stroke="#e1e1e1" stroke-width="13" stroke-linejoin="round" stroke-linecap="round"/>
<path d="M845.4 853.8 L871.3 998.0" fill="none" stroke="#e1e1e1" stroke-width="12" stroke-linejoin="round" stroke-linecap="round"/>
<path d="M412.0 562.7 L460.5 744.0" fill="none" stroke="#e1e1e1" stroke-width="11" stroke-linejoin="round" stroke-linecap="round"/>
<path d="M1009.0 498.0 L1080.2 549.7 L1122.2 604.7 L1145.0 659.7 L1203.0 795.5 L1245.0 902.3 L1274.2 998.0" fill="none" stroke="#e1e1e1" stroke-width="13" stroke-linejoin="round" stroke-linecap="round"/>
<path d="M1170.7 498.0 L1203.0 595.0 L1235.4 679.0 L1284.0 789.0 L1332.4 886.0 L1381.0 998.0" fill="none" stroke="#e1e1e1" stroke-width="11" stroke-linejoin="round" stroke-linecap="round"/>
<path d="M1296.9 498.0 L1332.4 578.9 L1364.8 643.5 L1412.0 756.7 L1476.7 724.4" fill="none" stroke="#e1e1e1" stroke-width="12" stroke-linejoin="round" stroke-linecap="round"/>
<path d="M996.0 692.0 L1041.4 798.8" fill="none" stroke="#e1e1e1" stroke-width="11" stroke-linejoin="round" stroke-linecap="round"/>
<path d="M1467.0 498.0 L1564.0 650.0 L1606.0 724.4 L1638.4 782.6 L1654.6 924.9 L1680.4 998.0" fill="none" stroke="#e1e1e1" stroke-width="11" stroke-linejoin="round" stroke-linecap="round"/>
<path d="M1751.6 498.0 L1816.3 620.9 L1839.0 659.7 L1858.3 756.7 L1881.0 853.8 L1912.0 950.8" fill="none" stroke="#e1e1e1" stroke-width="17" stroke-linejoin="round" stroke-linecap="round"/>
<path d="M1412.0 928.0 L1593.0 876.4 L1735.4 808.5 L1832.4 779.4 L1912.0 756.7" fill="none" stroke="#e1e1e1" stroke-width="12" stroke-linejoin="round" stroke-linecap="round"/>
<path d="M1638.4 925.0 L1735.4 892.6 L1912.0 831.0" fill="none" stroke="#e1e1e1" stroke-width="12" stroke-linejoin="round" stroke-linecap="round"/>
<path d="M1793.6 553.0 L1912.0 517.4" fill="none" stroke="#e1e1e1" stroke-width="12" stroke-linejoin="round" stroke-linecap="round"/>
<path d="M1748.4 718.0 L1784.0 805.0 L1816.3 886.0 L1842.0 998.0" fill="none" stroke="#e1e1e1" stroke-width="12" stroke-linejoin="round" stroke-linecap="round"/>
<path d="M1476.7 724.4 L1509.0 821.4 L1547.8 918.4 L1573.7 998.0 L1586.6 998.0" fill="none" stroke="#e1e1e1" stroke-width="12" stroke-linejoin="round" stroke-linecap="round"/>
<path d="M412.0 1072.4 L534.9 1040.0 L686.9 998.0" fill="none" stroke="#e1e1e1" stroke-width="15" stroke-linejoin="round" stroke-linecap="round"/>
<path d="M727.0 1158.0 L946.0 1051.0 L1162.0 944.0 L1251.6 900.0 L1412.0 821.4 L1567.2 779.4" fill="none" stroke="#e1e1e1" stroke-width="15" stroke-linejoin="round" stroke-linecap="round"/>
<path d="M412.0 1205.0 L573.7 1153.0 L728.9 1101.5 L800.0 1078.9 L912.0 1051.0" fill="none" stroke="#e1e1e1" stroke-width="15" stroke-linejoin="round" stroke-linecap="round"/>
<path d="M412.0 1399.0 L567.2 1321.4 L638.4 1298.8" fill="none" stroke="#e1e1e1" stroke-width="12" stroke-linejoin="round" stroke-linecap="round"/>
<path d="M551.0 1189.0 L638.4 1498.0" fill="none" stroke="#e1e1e1" stroke-width="13" stroke-linejoin="round" stroke-linecap="round"/>
<path d="M512.3 1198.5 L573.7 1321.4" fill="none" stroke="#e1e1e1" stroke-width="12" stroke-linejoin="round" stroke-linecap="round"/>
<path d="M638.4 1305.2 L754.8 1150.0" fill="none" stroke="#e1e1e1" stroke-width="11" stroke-linejoin="round" stroke-linecap="round"/>
<path d="M619.0 1498.0 L719.2 1353.8 L816.3 1234.0 L912.0 1133.8" fill="none" stroke="#e1e1e1" stroke-width="13" stroke-linejoin="round" stroke-linecap="round"/>
<path d="M412.0 1321.4 L509.0 1498.0" fill="none" stroke="#e1e1e1" stroke-width="11" stroke-linejoin="round" stroke-linecap="round"/>
<path d="M635.0 1308.5 L748.4 1402.3 L800.0 1498.0" fill="none" stroke="#e1e1e1" stroke-width="11" stroke-linejoin="round" stroke-linecap="round"/>
<path d="M800.0 998.0 L858.3 1079.0" fill="none" stroke="#e1e1e1" stroke-width="11" stroke-linejoin="round" stroke-linecap="round"/>
<path d="M751.6 1399.0 L912.0 1321.4" fill="none" stroke="#e1e1e1" stroke-width="12" stroke-linejoin="round" stroke-linecap="round"/>
<path d="M767.8 1476.7 L912.0 1405.5" fill="none" stroke="#e1e1e1" stroke-width="12" stroke-linejoin="round" stroke-linecap="round"/>
<path d="M1181.0 1026.0 L1259.0 1136.0 L1343.0 1246.0 L1400.0 1323.0 L1450.0 1390.0" fill="none" stroke="#e1e1e1" stroke-width="13" stroke-linejoin="round" stroke-linecap="round"/>
<path d="M1000.0 1184.0 L1097.0 1291.0 L1162.0 1356.0 L1259.0 1453.0 L1291.0 1500.0" fill="none" stroke="#e1e1e1" stroke-width="12" stroke-linejoin="round" stroke-linecap="round"/>
<path d="M1000.0 1420.0 L1194.0 1340.0 L1400.0 1259.0" fill="none" stroke="#e1e1e1" stroke-width="12" stroke-linejoin="round" stroke-linecap="round"/>
<path d="M1323.0 1356.0 L1400.0 1453.0" fill="none" stroke="#e1e1e1" stroke-width="11" stroke-linejoin="round" stroke-linecap="round"/>
<path d="M1000.0 1317.0 L1210.0 1226.0" fill="none" stroke="#e1e1e1" stroke-width="11" stroke-linejoin="round" stroke-linecap="round"/>
<path d="M1000.0 1500.0 L1097.0 1453.0" fill="none" stroke="#e1e1e1" stroke-width="11" stroke-linejoin="round" stroke-linecap="round"/>
<path d="M912.0 1244.0 L1106.0 1418.4 L1170.7 1498.0" fill="none" stroke="#e1e1e1" stroke-width="11" stroke-linejoin="round" stroke-linecap="round"/>
<path d="M912.0 1353.8 L960.5 1498.0" fill="none" stroke="#e1e1e1" stroke-width="11" stroke-linejoin="round" stroke-linecap="round"/>
<path d="M1251.6 1370.0 L1332.4 1498.0" fill="none" stroke="#e1e1e1" stroke-width="11" stroke-linejoin="round" stroke-linecap="round"/>
<path d="M1586.6 998.0 L1638.4 1095.0 L1703.0 1224.4 L1735.4 1289.0 L1784.0 1386.0 L1832.4 1498.0" fill="none" stroke="#e1e1e1" stroke-width="16" stroke-linejoin="round" stroke-linecap="round"/>
<path d="M1680.4 998.0 L1735.4 1095.0 L1784.0 1198.5 L1832.4 1289.0 L1912.0 1418.4" fill="none" stroke="#e1e1e1" stroke-width="12" stroke-linejoin="round" stroke-linecap="round"/>
<path d="M1780.7 998.0 L1832.4 1111.2 L1881.0 1224.4 L1912.0 1289.0" fill="none" stroke="#e1e1e1" stroke-width="12" stroke-linejoin="round" stroke-linecap="round"/>
<path d="M1632.0 1095.0 L1735.4 1056.0 L1912.0 998.0" fill="none" stroke="#e1e1e1" stroke-width="12" stroke-linejoin="round" stroke-linecap="round"/>
<path d="M1593.0 1263.0 L1750.0 1180.0 L1912.0 1101.5" fill="none" stroke="#e1e1e1" stroke-width="12" stroke-linejoin="round" stroke-linecap="round"/>
<path d="M1470.2 1692.0 L1509.0 1611.2 L1541.4 1498.0 L1600.0 1470.0 L1750.0 1390.0 L1912.0 1321.4" fill="none" stroke="#e1e1e1" stroke-width="17" stroke-linejoin="round" stroke-linecap="round"/>
<path d="M1670.7 1366.7 L1912.0 1263.2" fill="none" stroke="#e1e1e1" stroke-width="12" stroke-linejoin="round" stroke-linecap="round"/>
<path d="M412.0 1685.6 L573.7 1569.0 L638.4 1498.0 L700.0 1420.0 L754.8 1350.0" fill="none" stroke="#e1e1e1" stroke-width="16" stroke-linejoin="round" stroke-linecap="round"/>
<path d="M525.2 1498.0 L648.1 1679.0 L735.4 1805.2 L800.0 1902.3 L864.8 1998.0" fill="none" stroke="#e1e1e1" stroke-width="15" stroke-linejoin="round" stroke-linecap="round"/>
<path d="M728.9 1498.0 L832.4 1659.7 L912.0 1789.0" fill="none" stroke="#e1e1e1" stroke-width="12" stroke-linejoin="round" stroke-linecap="round"/>
<path d="M816.3 1498.0 L912.0 1643.5" fill="none" stroke="#e1e1e1" stroke-width="12" stroke-linejoin="round" stroke-linecap="round"/>
<path d="M703.0 1611.2 L832.4 1789.0 L912.0 1918.4" fill="none" stroke="#e1e1e1" stroke-width="12" stroke-linejoin="round" stroke-linecap="round"/>
<path d="M606.0 1724.4 L703.0 1886.0 L751.6 1998.0" fill="none" stroke="#e1e1e1" stroke-width="13" stroke-linejoin="round" stroke-linecap="round"/>
<path d="M531.7 1766.4 L638.4 1918.4 L687.0 1998.0" fill="none" stroke="#e1e1e1" stroke-width="12" stroke-linejoin="round" stroke-linecap="round"/>
<path d="M531.7 1763.2 L657.8 1684.0" fill="none" stroke="#e1e1e1" stroke-width="13" stroke-linejoin="round" stroke-linecap="round"/>
<path d="M638.4 1653.0 L767.8 1562.7 L826.0 1530.3" fill="none" stroke="#e1e1e1" stroke-width="13" stroke-linejoin="round" stroke-linecap="round"/>
<path d="M767.8 1808.5 L912.0 1724.4" fill="none" stroke="#e1e1e1" stroke-width="12" stroke-linejoin="round" stroke-linecap="round"/>
<path d="M509.0 1902.3 L599.6 1853.8" fill="none" stroke="#e1e1e1" stroke-width="11" stroke-linejoin="round" stroke-linecap="round"/>
<path d="M515.5 1604.7 L505.8 1902.3" fill="none" stroke="#e1e1e1" stroke-width="10" stroke-linejoin="round" stroke-linecap="round"/>
<path d="M412.0 1808.5 L509.0 1918.4 L557.5 1998.0" fill="none" stroke="#e1e1e1" stroke-width="11" stroke-linejoin="round" stroke-linecap="round"/>
<path d="M1093.1 1653.2 L1170.7 1637.0 L1267.8 1643.5 L1412.0 1663.0 L1509.0 1705.0" fill="none" stroke="#e1e1e1" stroke-width="13" stroke-linejoin="round" stroke-linecap="round"/>
<path d="M1025.2 1998.0 L1203.0 1886.1 L1412.0 1766.4 L1606.0 1776.1 L1800.0 1724.4 L1912.0 1698.5" fill="none" stroke="#e1e1e1" stroke-width="18" stroke-linejoin="round" stroke-linecap="round"/>
<path d="M1170.7 1637.0 L1300.0 1530.3 L1364.8 1498.0" fill="none" stroke="#e1e1e1" stroke-width="13" stroke-linejoin="round" stroke-linecap="round"/>
<path d="M912.0 1643.5 L1009.0 1789.0 L1106.0 1998.0" fill="none" stroke="#e1e1e1" stroke-width="12" stroke-linejoin="round" stroke-linecap="round"/>
<path d="M1018.7 1692.0 L1093.0 1821.4 L1154.6 1912.0" fill="none" stroke="#e1e1e1" stroke-width="11" stroke-linejoin="round" stroke-linecap="round"/>
<path d="M1093.0 1498.0 L1170.7 1627.4" fill="none" stroke="#e1e1e1" stroke-width="11" stroke-linejoin="round" stroke-linecap="round"/>
<path d="M1219.0 1578.9 L1283.9 1708.2" fill="none" stroke="#e1e1e1" stroke-width="11" stroke-linejoin="round" stroke-linecap="round"/>
<path d="M1300.0 1546.5 L1397.0 1676.0" fill="none" stroke="#e1e1e1" stroke-width="11" stroke-linejoin="round" stroke-linecap="round"/>
<path d="M1122.2 1743.8 L1203.0 1873.2" fill="none" stroke="#e1e1e1" stroke-width="11" stroke-linejoin="round" stroke-linecap="round"/>
<path d="M1203.0 1998.0 L1412.0 1886.0 L1606.0 1902.3 L1800.0 1821.4 L1912.0 1779.4" fill="none" stroke="#e1e1e1" stroke-width="13" stroke-linejoin="round" stroke-linecap="round"/>
<path d="M1412.0 1698.5 L1509.0 1705.0 L1638.4 1666.2 L1767.8 1627.4 L1912.0 1572.4" fill="none" stroke="#e1e1e1" stroke-width="18" stroke-linejoin="round" stroke-linecap="round"/>
<path d="M1612.5 1498.0 L1696.6 1643.5" fill="none" stroke="#e1e1e1" stroke-width="13" stroke-linejoin="round" stroke-linecap="round"/>
<path d="M1696.6 1498.0 L1751.6 1611.2 L1816.3 1740.6 L1881.0 1853.8 L1912.0 1918.4" fill="none" stroke="#e1e1e1" stroke-width="16" stroke-linejoin="round" stroke-linecap="round"/>
<path d="M1573.7 1685.6 L1638.4 1789.0 L1703.0 1886.0 L1751.6 1998.0" fill="none" stroke="#e1e1e1" stroke-width="17" stroke-linejoin="round" stroke-linecap="round"/>
<path d="M1638.4 1672.6 L1735.4 1821.4 L1800.0 1998.0" fill="none" stroke="#e1e1e1" stroke-width="12" stroke-linejoin="round" stroke-linecap="round"/>
<path d="M1774.2 1498.0 L1832.4 1627.4 L1913.0 1789.0" fill="none" stroke="#e1e1e1" stroke-width="12" stroke-linejoin="round" stroke-linecap="round"/>
<path d="M1437.9 1750.3 L1509.0 1886.0 L1573.7 1998.0" fill="none" stroke="#e1e1e1" stroke-width="13" stroke-linejoin="round" stroke-linecap="round"/>
<path d="M1412.0 1591.8 L1509.0 1582.0" fill="none" stroke="#e1e1e1" stroke-width="11" stroke-linejoin="round" stroke-linecap="round"/>
<path d="M1476.7 1498.0 L1518.7 1588.6 L1547.8 1643.5 L1573.7 1692.0" fill="none" stroke="#e1e1e1" stroke-width="12" stroke-linejoin="round" stroke-linecap="round"/>
<path d="M412.0 951.0 L619.0 902.3 L680.4 889.3 L800.0 857.0 L912.0 834.4 L1106.0 798.8 L1267.8 766.4 L1412.0 730.9 L1573.7 705.0 L1735.4 672.6 L1832.4 663.0 L1912.0 650.0" fill="none" stroke="#f8f8f8" stroke-width="20" stroke-linejoin="round" stroke-linecap="round"/>
<path d="M557.5 498.0 L632.0 724.0 L645.0 790.0 L670.7 902.0 L687.0 998.0 L696.6 998.0 L735.4 1095.0 L767.8 1143.5 L816.3 1230.9 L864.8 1298.8 L912.0 1369.9 L986.4 1498.0 L1041.4 1595.0 L1093.1 1666.2 L1138.4 1705.0 L1203.0 1730.9 L1300.1 1740.6 L1412.0 1701.7 L1470.0 1698.0 L1509.0 1705.0" fill="none" stroke="#f8f8f8" stroke-width="22" stroke-linejoin="round" stroke-linecap="round"/>
<path d="M412.0 604.7 L573.7 556.2 L735.4 507.7 L767.8 498.0" fill="none" stroke="#f8f8f8" stroke-width="13" stroke-linejoin="round" stroke-linecap="round"/>
<path d="M412.0 776.0 L525.2 737.3 L735.4 669.4 L912.0 608.0 L1073.7 556.2" fill="none" stroke="#f8f8f8" stroke-width="11" stroke-linejoin="round" stroke-linecap="round"/>
<path d="M567.2 816.6 L638.4 795.5 L767.8 756.7 L912.0 708.2 L1106.0 643.5 L1235.4 604.7 L1332.4 569.1 L1412.0 549.7" fill="none" stroke="#f8f8f8" stroke-width="10" stroke-linejoin="round" stroke-linecap="round"/>
<path d="M800.0 798.8 L912.0 766.4" fill="none" stroke="#f8f8f8" stroke-width="9" stroke-linejoin="round" stroke-linecap="round"/>
<path d="M612.5 620.9 L864.8 549.7" fill="none" stroke="#f8f8f8" stroke-width="8" stroke-linejoin="round" stroke-linecap="round"/>
<path d="M696.6 498.0 L751.6 659.7 L800.0 821.4 L806.6 853.8" fill="none" stroke="#f8f8f8" stroke-width="10" stroke-linejoin="round" stroke-linecap="round"/>
<path d="M842.1 498.0 L881.0 611.2 L903.6 698.5" fill="none" stroke="#f8f8f8" stroke-width="8" stroke-linejoin="round" stroke-linecap="round"/>
<path d="M512.3 747.0 L567.2 821.4 L619.0 899.0" fill="none" stroke="#f8f8f8" stroke-width="10" stroke-linejoin="round" stroke-linecap="round"/>
<path d="M418.5 782.6 L450.8 998.0 L460.0 1050.0" fill="none" stroke="#f8f8f8" stroke-width="9" stroke-linejoin="round" stroke-linecap="round"/>
<path d="M745.1 876.4 L800.0 998.0" fill="none" stroke="#f8f8f8" stroke-width="10" stroke-linejoin="round" stroke-linecap="round"/>
<path d="M845.4 853.8 L871.3 998.0" fill="none" stroke="#f8f8f8" stroke-width="9" stroke-linejoin="round" stroke-linecap="round"/>
<path d="M412.0 562.7 L460.5 744.0" fill="none" stroke="#f8f8f8" stroke-width="8" stroke-linejoin="round" stroke-linecap="round"/>
<path d="M1009.0 498.0 L1080.2 549.7 L1122.2 604.7 L1145.0 659.7 L1203.0 795.5 L1245.0 902.3 L1274.2 998.0" fill="none" stroke="#f8f8f8" stroke-width="10" stroke-linejoin="round" stroke-linecap="round"/>
<path d="M1170.7 498.0 L1203.0 595.0 L1235.4 679.0 L1284.0 789.0 L1332.4 886.0 L1381.0 998.0" fill="none" stroke="#f8f8f8" stroke-width="8" stroke-linejoin="round" stroke-linecap="round"/>
<path d="M1296.9 498.0 L1332.4 578.9 L1364.8 643.5 L1412.0 756.7 L1476.7 724.4" fill="none" stroke="#f8f8f8" stroke-width="9" stroke-linejoin="round" stroke-linecap="round"/>
<path d="M996.0 692.0 L1041.4 798.8" fill="none" stroke="#f8f8f8" stroke-width="8" stroke-linejoin="round" stroke-linecap="round"/>
<path d="M1467.0 498.0 L1564.0 650.0 L1606.0 724.4 L1638.4 782.6 L1654.6 924.9 L1680.4 998.0" fill="none" stroke="#f8f8f8" stroke-width="8" stroke-linejoin="round" stroke-linecap="round"/>
<path d="M1751.6 498.0 L1816.3 620.9 L1839.0 659.7 L1858.3 756.7 L1881.0 853.8 L1912.0 950.8" fill="none" stroke="#f8f8f8" stroke-width="14" stroke-linejoin="round" stroke-linecap="round"/>
<path d="M1412.0 928.0 L1593.0 876.4 L1735.4 808.5 L1832.4 779.4 L1912.0 756.7" fill="none" stroke="#f8f8f8" stroke-width="9" stroke-linejoin="round" stroke-linecap="round"/>
<path d="M1638.4 925.0 L1735.4 892.6 L1912.0 831.0" fill="none" stroke="#f8f8f8" stroke-width="9" stroke-linejoin="round" stroke-linecap="round"/>
<path d="M1793.6 553.0 L1912.0 517.4" fill="none" stroke="#f8f8f8" stroke-width="9" stroke-linejoin="round" stroke-linecap="round"/>
<path d="M1748.4 718.0 L1784.0 805.0 L1816.3 886.0 L1842.0 998.0" fill="none" stroke="#f8f8f8" stroke-width="9" stroke-linejoin="round" stroke-linecap="round"/>
<path d="M1476.7 724.4 L1509.0 821.4 L1547.8 918.4 L1573.7 998.0 L1586.6 998.0" fill="none" stroke="#f8f8f8" stroke-width="9" stroke-linejoin="round" stroke-linecap="round"/>
<path d="M412.0 1072.4 L534.9 1040.0 L686.9 998.0" fill="none" stroke="#f8f8f8" stroke-width="12" stroke-linejoin="round" stroke-linecap="round"/>
<path d="M727.0 1158.0 L946.0 1051.0 L1162.0 944.0 L1251.6 900.0 L1412.0 821.4 L1567.2 779.4" fill="none" stroke="#f8f8f8" stroke-width="12" stroke-linejoin="round" stroke-linecap="round"/>
<path d="M412.0 1205.0 L573.7 1153.0 L728.9 1101.5 L800.0 1078.9 L912.0 1051.0" fill="none" stroke="#f8f8f8" stroke-width="12" stroke-linejoin="round" stroke-linecap="round"/>
<path d="M412.0 1399.0 L567.2 1321.4 L638.4 1298.8" fill="none" stroke="#f8f8f8" stroke-width="9" stroke-linejoin="round" stroke-linecap="round"/>
<path d="M551.0 1189.0 L638.4 1498.0" fill="none" stroke="#f8f8f8" stroke-width="10" stroke-linejoin="round" stroke-linecap="round"/>
<path d="M512.3 1198.5 L573.7 1321.4" fill="none" stroke="#f8f8f8" stroke-width="9" stroke-linejoin="round" stroke-linecap="round"/>
<path d="M638.4 1305.2 L754.8 1150.0" fill="none" stroke="#f8f8f8" stroke-width="8" stroke-linejoin="round" stroke-linecap="round"/>
<path d="M619.0 1498.0 L719.2 1353.8 L816.3 1234.0 L912.0 1133.8" fill="none" stroke="#f8f8f8" stroke-width="10" stroke-linejoin="round" stroke-linecap="round"/>
<path d="M412.0 1321.4 L509.0 1498.0" fill="none" stroke="#f8f8f8" stroke-width="8" stroke-linejoin="round" stroke-linecap="round"/>
<path d="M635.0 1308.5 L748.4 1402.3 L800.0 1498.0" fill="none" stroke="#f8f8f8" stroke-width="8" stroke-linejoin="round" stroke-linecap="round"/>
<path d="M800.0 998.0 L858.3 1079.0" fill="none" stroke="#f8f8f8" stroke-width="8" stroke-linejoin="round" stroke-linecap="round"/>
<path d="M751.6 1399.0 L912.0 1321.4" fill="none" stroke="#f8f8f8" stroke-width="9" stroke-linejoin="round" stroke-linecap="round"/>
<path d="M767.8 1476.7 L912.0 1405.5" fill="none" stroke="#f8f8f8" stroke-width="9" stroke-linejoin="round" stroke-linecap="round"/>
<path d="M1181.0 1026.0 L1259.0 1136.0 L1343.0 1246.0 L1400.0 1323.0 L1450.0 1390.0" fill="none" stroke="#f8f8f8" stroke-width="10" stroke-linejoin="round" stroke-linecap="round"/>
<path d="M1000.0 1184.0 L1097.0 1291.0 L1162.0 1356.0 L1259.0 1453.0 L1291.0 1500.0" fill="none" stroke="#f8f8f8" stroke-width="9" stroke-linejoin="round" stroke-linecap="round"/>
<path d="M1000.0 1420.0 L1194.0 1340.0 L1400.0 1259.0" fill="none" stroke="#f8f8f8" stroke-width="9" stroke-linejoin="round" stroke-linecap="round"/>
<path d="M1323.0 1356.0 L1400.0 1453.0" fill="none" stroke="#f8f8f8" stroke-width="8" stroke-linejoin="round" stroke-linecap="round"/>
<path d="M1000.0 1317.0 L1210.0 1226.0" fill="none" stroke="#f8f8f8" stroke-width="8" stroke-linejoin="round" stroke-linecap="round"/>
<path d="M1000.0 1500.0 L1097.0 1453.0" fill="none" stroke="#f8f8f8" stroke-width="8" stroke-linejoin="round" stroke-linecap="round"/>
<path d="M912.0 1244.0 L1106.0 1418.4 L1170.7 1498.0" fill="none" stroke="#f8f8f8" stroke-width="8" stroke-linejoin="round" stroke-linecap="round"/>
<path d="M912.0 1353.8 L960.5 1498.0" fill="none" stroke="#f8f8f8" stroke-width="8" stroke-linejoin="round" stroke-linecap="round"/>
<path d="M1251.6 1370.0 L1332.4 1498.0" fill="none" stroke="#f8f8f8" stroke-width="8" stroke-linejoin="round" stroke-linecap="round"/>
<path d="M1586.6 998.0 L1638.4 1095.0 L1703.0 1224.4 L1735.4 1289.0 L1784.0 1386.0 L1832.4 1498.0" fill="none" stroke="#f8f8f8" stroke-width="13" stroke-linejoin="round" stroke-linecap="round"/>
<path d="M1680.4 998.0 L1735.4 1095.0 L1784.0 1198.5 L1832.4 1289.0 L1912.0 1418.4" fill="none" stroke="#f8f8f8" stroke-width="9" stroke-linejoin="round" stroke-linecap="round"/>
<path d="M1780.7 998.0 L1832.4 1111.2 L1881.0 1224.4 L1912.0 1289.0" fill="none" stroke="#f8f8f8" stroke-width="9" stroke-linejoin="round" stroke-linecap="round"/>
<path d="M1632.0 1095.0 L1735.4 1056.0 L1912.0 998.0" fill="none" stroke="#f8f8f8" stroke-width="9" stroke-linejoin="round" stroke-linecap="round"/>
<path d="M1593.0 1263.0 L1750.0 1180.0 L1912.0 1101.5" fill="none" stroke="#f8f8f8" stroke-width="9" stroke-linejoin="round" stroke-linecap="round"/>
<path d="M1470.2 1692.0 L1509.0 1611.2 L1541.4 1498.0 L1600.0 1470.0 L1750.0 1390.0 L1912.0 1321.4" fill="none" stroke="#f8f8f8" stroke-width="14" stroke-linejoin="round" stroke-linecap="round"/>
<path d="M1670.7 1366.7 L1912.0 1263.2" fill="none" stroke="#f8f8f8" stroke-width="9" stroke-linejoin="round" stroke-linecap="round"/>
<path d="M412.0 1685.6 L573.7 1569.0 L638.4 1498.0 L700.0 1420.0 L754.8 1350.0" fill="none" stroke="#f8f8f8" stroke-width="13" stroke-linejoin="round" stroke-linecap="round"/>
<path d="M525.2 1498.0 L648.1 1679.0 L735.4 1805.2 L800.0 1902.3 L864.8 1998.0" fill="none" stroke="#f8f8f8" stroke-width="12" stroke-linejoin="round" stroke-linecap="round"/>
<path d="M728.9 1498.0 L832.4 1659.7 L912.0 1789.0" fill="none" stroke="#f8f8f8" stroke-width="9" stroke-linejoin="round" stroke-linecap="round"/>
<path d="M816.3 1498.0 L912.0 1643.5" fill="none" stroke="#f8f8f8" stroke-width="9" stroke-linejoin="round" stroke-linecap="round"/>
<path d="M703.0 1611.2 L832.4 1789.0 L912.0 1918.4" fill="none" stroke="#f8f8f8" stroke-width="9" stroke-linejoin="round" stroke-linecap="round"/>
<path d="M606.0 1724.4 L703.0 1886.0 L751.6 1998.0" fill="none" stroke="#f8f8f8" stroke-width="10" stroke-linejoin="round" stroke-linecap="round"/>
<path d="M531.7 1766.4 L638.4 1918.4 L687.0 1998.0" fill="none" stroke="#f8f8f8" stroke-width="9" stroke-linejoin="round" stroke-linecap="round"/>
<path d="M531.7 1763.2 L657.8 1684.0" fill="none" stroke="#f8f8f8" stroke-width="10" stroke-linejoin="round" stroke-linecap="round"/>
<path d="M638.4 1653.0 L767.8 1562.7 L826.0 1530.3" fill="none" stroke="#f8f8f8" stroke-width="10" stroke-linejoin="round" stroke-linecap="round"/>
<path d="M767.8 1808.5 L912.0 1724.4" fill="none" stroke="#f8f8f8" stroke-width="9" stroke-linejoin="round" stroke-linecap="round"/>
<path d="M509.0 1902.3 L599.6 1853.8" fill="none" stroke="#f8f8f8" stroke-width="8" stroke-linejoin="round" stroke-linecap="round"/>
<path d="M515.5 1604.7 L505.8 1902.3" fill="none" stroke="#f8f8f8" stroke-width="7" stroke-linejoin="round" stroke-linecap="round"/>
<path d="M412.0 1808.5 L509.0 1918.4 L557.5 1998.0" fill="none" stroke="#f8f8f8" stroke-width="8" stroke-linejoin="round" stroke-linecap="round"/>
<path d="M1093.1 1653.2 L1170.7 1637.0 L1267.8 1643.5 L1412.0 1663.0 L1509.0 1705.0" fill="none" stroke="#f8f8f8" stroke-width="10" stroke-linejoin="round" stroke-linecap="round"/>
<path d="M1025.2 1998.0 L1203.0 1886.1 L1412.0 1766.4 L1606.0 1776.1 L1800.0 1724.4 L1912.0 1698.5" fill="none" stroke="#f8f8f8" stroke-width="15" stroke-linejoin="round" stroke-linecap="round"/>
<path d="M1170.7 1637.0 L1300.0 1530.3 L1364.8 1498.0" fill="none" stroke="#f8f8f8" stroke-width="10" stroke-linejoin="round" stroke-linecap="round"/>
<path d="M912.0 1643.5 L1009.0 1789.0 L1106.0 1998.0" fill="none" stroke="#f8f8f8" stroke-width="9" stroke-linejoin="round" stroke-linecap="round"/>
<path d="M1018.7 1692.0 L1093.0 1821.4 L1154.6 1912.0" fill="none" stroke="#f8f8f8" stroke-width="8" stroke-linejoin="round" stroke-linecap="round"/>
<path d="M1093.0 1498.0 L1170.7 1627.4" fill="none" stroke="#f8f8f8" stroke-width="8" stroke-linejoin="round" stroke-linecap="round"/>
<path d="M1219.0 1578.9 L1283.9 1708.2" fill="none" stroke="#f8f8f8" stroke-width="8" stroke-linejoin="round" stroke-linecap="round"/>
<path d="M1300.0 1546.5 L1397.0 1676.0" fill="none" stroke="#f8f8f8" stroke-width="8" stroke-linejoin="round" stroke-linecap="round"/>
<path d="M1122.2 1743.8 L1203.0 1873.2" fill="none" stroke="#f8f8f8" stroke-width="8" stroke-linejoin="round" stroke-linecap="round"/>
<path d="M1203.0 1998.0 L1412.0 1886.0 L1606.0 1902.3 L1800.0 1821.4 L1912.0 1779.4" fill="none" stroke="#f8f8f8" stroke-width="10" stroke-linejoin="round" stroke-linecap="round"/>
<path d="M1412.0 1698.5 L1509.0 1705.0 L1638.4 1666.2 L1767.8 1627.4 L1912.0 1572.4" fill="none" stroke="#f8f8f8" stroke-width="15" stroke-linejoin="round" stroke-linecap="round"/>
<path d="M1612.5 1498.0 L1696.6 1643.5" fill="none" stroke="#f8f8f8" stroke-width="10" stroke-linejoin="round" stroke-linecap="round"/>
<path d="M1696.6 1498.0 L1751.6 1611.2 L1816.3 1740.6 L1881.0 1853.8 L1912.0 1918.4" fill="none" stroke="#f8f8f8" stroke-width="13" stroke-linejoin="round" stroke-linecap="round"/>
<path d="M1573.7 1685.6 L1638.4 1789.0 L1703.0 1886.0 L1751.6 1998.0" fill="none" stroke="#f8f8f8" stroke-width="14" stroke-linejoin="round" stroke-linecap="round"/>
<path d="M1638.4 1672.6 L1735.4 1821.4 L1800.0 1998.0" fill="none" stroke="#f8f8f8" stroke-width="9" stroke-linejoin="round" stroke-linecap="round"/>
<path d="M1774.2 1498.0 L1832.4 1627.4 L1913.0 1789.0" fill="none" stroke="#f8f8f8" stroke-width="9" stroke-linejoin="round" stroke-linecap="round"/>
<path d="M1437.9 1750.3 L1509.0 1886.0 L1573.7 1998.0" fill="none" stroke="#f8f8f8" stroke-width="10" stroke-linejoin="round" stroke-linecap="round"/>
<path d="M1412.0 1591.8 L1509.0 1582.0" fill="none" stroke="#f8f8f8" stroke-width="8" stroke-linejoin="round" stroke-linecap="round"/>
<path d="M1476.7 1498.0 L1518.7 1588.6 L1547.8 1643.5 L1573.7 1692.0" fill="none" stroke="#f8f8f8" stroke-width="9" stroke-linejoin="round" stroke-linecap="round"/>
<rect x="1596" y="785" width="130" height="130" rx="14" fill="#edf0ed" stroke="#f8f8f8" stroke-width="12" transform="rotate(-27 1661 850)"/>
<rect x="1142" y="1406" width="90" height="90" rx="8" fill="#edf0ed" stroke="#f8f8f8" stroke-width="8" transform="rotate(-30 1187 1451)"/>
<ellipse cx="503" cy="1117" rx="38" ry="47" fill="#edf0ed" stroke="#f8f8f8" stroke-width="6"/>
<g filter="url(#blur4)" fill="#000" opacity="0.85">
<circle cx="1113.1" cy="828.2" r="8.5"/>
<circle cx="1253.2" cy="865.4" r="8.5"/>
<circle cx="1303.3" cy="892.8" r="8.5"/>
<circle cx="1350.8" cy="889.6" r="8.5"/>
<circle cx="935.2" cy="931.0" r="8.5"/>
<circle cx="1241.8" cy="922.0" r="8.5"/>
<circle cx="1208.5" cy="937.5" r="8.5"/>
<circle cx="1285.5" cy="938.4" r="8.5"/>
<circle cx="1169.0" cy="946.2" r="8.5"/>
<circle cx="1107.3" cy="971.4" r="8.5"/>
<circle cx="1119.6" cy="965.6" r="8.5"/>
<circle cx="1185.2" cy="979.5" r="8.5"/>
<circle cx="1343.7" cy="966.6" r="8.5"/>
<circle cx="1263.5" cy="987.0" r="8.5"/>
<circle cx="1273.2" cy="991.8" r="8.5"/>
<circle cx="1282.3" cy="987.0" r="8.5"/>
<circle cx="1291.0" cy="982.8" r="8.5"/>
<circle cx="1244.0" cy="997.3" r="8.5"/>
<circle cx="1328.8" cy="1001.2" r="8.5"/>
<circle cx="1324.3" cy="1011.0" r="8.5"/>
<circle cx="1188.5" cy="1008.6" r="8.5"/>
<circle cx="1196.6" cy="1004.7" r="8.5"/>
<circle cx="1340.5" cy="1021.6" r="8.5"/>
<circle cx="1334.0" cy="1029.0" r="8.5"/>
<circle cx="1275.8" cy="1032.9" r="8.5"/>
<circle cx="1272.5" cy="1041.6" r="8.5"/>
<circle cx="1207.0" cy="1047.4" r="8.5"/>
<circle cx="1219.2" cy="1053.0" r="8.5"/>
<circle cx="1323.3" cy="1057.0" r="8.5"/>
<circle cx="1328.2" cy="1065.2" r="8.5"/>
<circle cx="1350.8" cy="1060.4" r="8.5"/>
<circle cx="1304.0" cy="1069.0" r="8.5"/>
<circle cx="1288.7" cy="1076.0" r="8.5"/>
<circle cx="1294.2" cy="1083.0" r="8.5"/>
<circle cx="956.9" cy="1076.5" r="8.5"/>
<circle cx="1224.7" cy="1083.0" r="8.5"/>
<circle cx="1069.5" cy="1115.4" r="8.5"/>
<circle cx="1433.0" cy="771.9" r="8.5"/>
<circle cx="1392.5" cy="837.2" r="8.5"/>
<circle cx="1365.0" cy="895.4" r="8.5"/>
<circle cx="1429.7" cy="929.4" r="8.5"/>
<circle cx="1515.0" cy="956.9" r="8.5"/>
<circle cx="1462.7" cy="981.8" r="8.5"/>
<circle cx="1574.3" cy="977.0" r="8.5"/>
<circle cx="1411.6" cy="1002.8" r="8.5"/>
<circle cx="1424.0" cy="1007.0" r="8.5"/>
<circle cx="1562.3" cy="1031.3" r="8.5"/>
<circle cx="1430.4" cy="1037.0" r="8.5"/>
<circle cx="1442.7" cy="1039.3" r="8.5"/>
<circle cx="1449.8" cy="1050.7" r="8.5"/>
<circle cx="1360.9" cy="1056.5" r="8.5"/>
<circle cx="1459.5" cy="1065.2" r="8.5"/>
<circle cx="1475.0" cy="1065.2" r="8.5"/>
<circle cx="1437.8" cy="1069.0" r="8.5"/>
<circle cx="1408.7" cy="1075.0" r="8.5"/>
<circle cx="1372.8" cy="1077.2" r="8.5"/>
<circle cx="1365.0" cy="1081.4" r="8.5"/>
<circle cx="1397.4" cy="1091.7" r="8.5"/>
<circle cx="1469.2" cy="1104.0" r="8.5"/>
<circle cx="1478.2" cy="1099.8" r="8.5"/>
<circle cx="1429.4" cy="1117.0" r="8.5"/>
<circle cx="1360.9" cy="1117.0" r="8.5"/>
<circle cx="1363.5" cy="1126.0" r="8.5"/>
<circle cx="1489.6" cy="1123.0" r="8.5"/>
<circle cx="1481.5" cy="1128.0" r="8.5"/>
<circle cx="1012.2" cy="1130.9" r="8.5"/>
<circle cx="961.1" cy="1144.8" r="8.5"/>
<circle cx="1073.3" cy="1141.6" r="8.5"/>
<circle cx="1085.6" cy="1145.4" r="8.5"/>
<circle cx="1246.4" cy="1130.9" r="8.5"/>
<circle cx="1320.7" cy="1139.3" r="8.5"/>
<circle cx="1294.2" cy="1152.2" r="8.5"/>
<circle cx="1015.1" cy="1152.2" r="8.5"/>
<circle cx="1027.4" cy="1154.5" r="8.5"/>
<circle cx="997.3" cy="1160.0" r="8.5"/>
<circle cx="935.9" cy="1168.4" r="8.5"/>
<circle cx="1166.5" cy="1168.4" r="8.5"/>
<circle cx="1175.2" cy="1164.2" r="8.5"/>
<circle cx="1038.7" cy="1168.4" r="8.5"/>
<circle cx="1035.8" cy="1174.9" r="8.5"/>
<circle cx="983.8" cy="1174.9" r="8.5"/>
<circle cx="976.6" cy="1178.7" r="8.5"/>
<circle cx="1102.4" cy="1176.2" r="8.5"/>
<circle cx="1093.7" cy="1179.7" r="8.5"/>
<circle cx="1082.4" cy="1185.2" r="8.5"/>
<circle cx="1319.1" cy="1191.0" r="8.5"/>
<circle cx="994.1" cy="1194.9" r="8.5"/>
<circle cx="999.3" cy="1202.4" r="8.5"/>
<circle cx="1068.5" cy="1192.7" r="8.5"/>
<circle cx="1079.2" cy="1195.9" r="8.5"/>
<circle cx="1102.4" cy="1195.0" r="8.5"/>
<circle cx="1051.7" cy="1202.4" r="8.5"/>
<circle cx="1115.7" cy="1203.0" r="8.5"/>
<circle cx="892.5" cy="1212.7" r="8.5"/>
<circle cx="999.3" cy="1213.7" r="8.5"/>
<circle cx="1040.3" cy="1223.0" r="8.5"/>
<circle cx="1124.4" cy="1220.1" r="8.5"/>
<circle cx="1117.3" cy="1224.7" r="8.5"/>
<circle cx="1158.4" cy="1219.2" r="8.5"/>
<circle cx="1162.6" cy="1228.0" r="8.5"/>
<circle cx="1261.9" cy="1224.7" r="8.5"/>
<circle cx="1337.9" cy="1220.1" r="8.5"/>
<circle cx="1341.1" cy="1228.0" r="8.5"/>
<circle cx="1320.7" cy="1230.5" r="8.5"/>
<circle cx="1279.0" cy="1237.6" r="8.5"/>
<circle cx="1271.0" cy="1241.8" r="8.5"/>
<circle cx="1302.3" cy="1240.2" r="8.5"/>
<circle cx="1124.4" cy="1236.3" r="8.5"/>
<circle cx="1126.0" cy="1242.5" r="8.5"/>
<circle cx="1009.6" cy="1247.3" r="8.5"/>
<circle cx="929.7" cy="1256.4" r="8.5"/>
<circle cx="1102.8" cy="1259.6" r="8.5"/>
<circle cx="1145.5" cy="1259.0" r="8.5"/>
<circle cx="1289.4" cy="1252.2" r="8.5"/>
<circle cx="1288.7" cy="1258.0" r="8.5"/>
<circle cx="1268.3" cy="1260.2" r="8.5"/>
<circle cx="1290.3" cy="1271.0" r="8.5"/>
<circle cx="1305.5" cy="1277.4" r="8.5"/>
<circle cx="1261.0" cy="1275.8" r="8.5"/>
<circle cx="1244.1" cy="1275.8" r="8.5"/>
<circle cx="1248.0" cy="1285.5" r="8.5"/>
<circle cx="1232.8" cy="1282.9" r="8.5"/>
<circle cx="1222.4" cy="1289.7" r="8.5"/>
<circle cx="1212.7" cy="1295.2" r="8.5"/>
<circle cx="1201.4" cy="1301.6" r="8.5"/>
<circle cx="1203.7" cy="1314.0" r="8.5"/>
<circle cx="1160.0" cy="1285.5" r="8.5"/>
<circle cx="1152.9" cy="1291.0" r="8.5"/>
<circle cx="1174.6" cy="1304.2" r="8.5"/>
<circle cx="1178.8" cy="1317.2" r="8.5"/>
<circle cx="1303.9" cy="1288.7" r="8.5"/>
<circle cx="1309.8" cy="1298.4" r="8.5"/>
<circle cx="1328.2" cy="1309.7" r="8.5"/>
<circle cx="1320.7" cy="1314.6" r="8.5"/>
<circle cx="1255.4" cy="1305.5" r="8.5"/>
<circle cx="1266.1" cy="1323.6" r="8.5"/>
<circle cx="1275.8" cy="1342.0" r="8.5"/>
<circle cx="1067.8" cy="1293.6" r="8.5"/>
<circle cx="1060.7" cy="1299.4" r="8.5"/>
<circle cx="1086.6" cy="1335.0" r="8.5"/>
<circle cx="1101.1" cy="1340.5" r="8.5"/>
<circle cx="1094.4" cy="1346.0" r="8.5"/>
<circle cx="1042.0" cy="1350.2" r="8.5"/>
<circle cx="1151.0" cy="1338.2" r="8.5"/>
<circle cx="1152.9" cy="1346.3" r="8.5"/>
<circle cx="1114.7" cy="1364.7" r="8.5"/>
<circle cx="1180.0" cy="1368.9" r="8.5"/>
<circle cx="1246.7" cy="1372.1" r="8.5"/>
<circle cx="1303.3" cy="1373.8" r="8.5"/>
<circle cx="1320.7" cy="1411.6" r="8.5"/>
<circle cx="1103.4" cy="1425.2" r="8.5"/>
<circle cx="1128.3" cy="1448.1" r="8.5"/>
<circle cx="916.8" cy="1533.9" r="8.5"/>
<circle cx="921.7" cy="1542.6" r="8.5"/>
<circle cx="969.8" cy="1613.1" r="8.5"/>
<circle cx="1414.2" cy="1144.8" r="8.5"/>
<circle cx="1384.5" cy="1152.2" r="8.5"/>
<circle cx="1360.9" cy="1152.2" r="8.5"/>
<circle cx="1483.7" cy="1133.0" r="8.5"/>
<circle cx="1498.3" cy="1139.9" r="8.5"/>
<circle cx="1495.0" cy="1157.7" r="8.5"/>
<circle cx="1507.0" cy="1182.0" r="8.5"/>
<circle cx="1434.6" cy="1180.4" r="8.5"/>
<circle cx="1443.3" cy="1191.7" r="8.5"/>
<circle cx="1447.5" cy="1199.8" r="8.5"/>
<circle cx="1395.8" cy="1209.5" r="8.5"/>
<circle cx="1608.3" cy="1185.2" r="8.5"/>
<circle cx="1559.1" cy="1206.2" r="8.5"/>
<circle cx="1570.1" cy="1208.8" r="8.5"/>
<circle cx="1648.7" cy="1215.0" r="8.5"/>
<circle cx="1475.7" cy="1248.9" r="8.5"/>
<circle cx="1510.3" cy="1254.7" r="8.5"/>
<circle cx="1428.8" cy="1276.4" r="8.5"/>
<circle cx="1458.8" cy="1317.2" r="8.5"/>
<circle cx="1457.9" cy="1331.7" r="8.5"/>
<circle cx="1503.8" cy="1301.6" r="8.5"/>
<circle cx="1519.3" cy="1328.2" r="8.5"/>
<circle cx="1491.2" cy="1348.5" r="8.5"/>
<circle cx="1488.0" cy="1362.1" r="8.5"/>
<circle cx="1466.0" cy="1368.9" r="8.5"/>
<circle cx="1450.8" cy="1380.9" r="8.5"/>
<circle cx="1441.1" cy="1389.0" r="8.5"/>
<circle cx="1423.9" cy="1404.5" r="8.5"/>
<circle cx="1431.0" cy="1425.2" r="8.5"/>
<circle cx="1365.7" cy="1362.4" r="8.5"/>
<circle cx="1359.2" cy="1368.0" r="8.5"/>
<circle cx="1373.1" cy="1385.7" r="8.5"/>
<circle cx="1392.5" cy="1393.8" r="8.5"/>
<circle cx="1398.0" cy="1412.3" r="8.5"/>
<circle cx="1586.6" cy="1445.6" r="8.5"/>
<circle cx="1464.3" cy="1508.6" r="8.5"/>
<circle cx="1496.0" cy="1539.3" r="8.5"/>
<circle cx="1638.3" cy="1523.2" r="8.5"/>
<circle cx="1645.5" cy="1541.6" r="8.5"/>
<circle cx="1504.1" cy="1612.1" r="8.5"/>
<circle cx="1215.0" cy="1199.8" r="40"/>
<circle cx="982.8" cy="1270.0" r="25.7"/>
<circle cx="1463.7" cy="1227.9" r="25.7"/>
<circle cx="1418.1" cy="1260.2" r="25.7"/>
<circle cx="1438.5" cy="1302.6" r="25.7"/>
</g>
<g fill="#dc1f28" stroke="#7a1418" stroke-width="1">
<circle cx="976.8" cy="1263.0" r="21.7"/>
<circle cx="1457.7" cy="1220.9" r="21.7"/>
<circle cx="1412.1" cy="1253.2" r="21.7"/>
<circle cx="1432.5" cy="1295.6" r="21.7"/>
<circle cx="1107.1" cy="821.2" r="7.2"/>
<circle cx="1247.2" cy="858.4" r="7.2"/>
<circle cx="1297.3" cy="885.8" r="7.2"/>
<circle cx="1344.8" cy="882.6" r="7.2"/>
<circle cx="929.2" cy="924.0" r="7.2"/>
<circle cx="1235.8" cy="915.0" r="7.2"/>
<circle cx="1202.5" cy="930.5" r="7.2"/>
<circle cx="1279.5" cy="931.4" r="7.2"/>
<circle cx="1163.0" cy="939.2" r="7.2"/>
<circle cx="1101.3" cy="964.4" r="7.2"/>
<circle cx="1113.6" cy="958.6" r="7.2"/>
<circle cx="1179.2" cy="972.5" r="7.2"/>
<circle cx="1337.7" cy="959.6" r="7.2"/>
<circle cx="1257.5" cy="980.0" r="7.2"/>
<circle cx="1267.2" cy="984.8" r="7.2"/>
<circle cx="1276.3" cy="980.0" r="7.2"/>
<circle cx="1285.0" cy="975.8" r="7.2"/>
<circle cx="1238.0" cy="990.3" r="7.2"/>
<circle cx="1322.8" cy="994.2" r="7.2"/>
<circle cx="1318.3" cy="1004.0" r="7.2"/>
<circle cx="1182.5" cy="1001.6" r="7.2"/>
<circle cx="1190.6" cy="997.7" r="7.2"/>
<circle cx="1334.5" cy="1014.6" r="7.2"/>
<circle cx="1328.0" cy="1022.0" r="7.2"/>
<circle cx="1269.8" cy="1025.9" r="7.2"/>
<circle cx="1266.5" cy="1034.6" r="7.2"/>
<circle cx="1201.0" cy="1040.4" r="7.2"/>
<circle cx="1213.2" cy="1046.0" r="7.2"/>
<circle cx="1317.3" cy="1050.0" r="7.2"/>
<circle cx="1322.2" cy="1058.2" r="7.2"/>
<circle cx="1344.8" cy="1053.4" r="7.2"/>
<circle cx="1298.0" cy="1062.0" r="7.2"/>
<circle cx="1282.7" cy="1069.0" r="7.2"/>
<circle cx="1288.2" cy="1076.0" r="7.2"/>
<circle cx="950.9" cy="1069.5" r="7.2"/>
<circle cx="1218.7" cy="1076.0" r="7.2"/>
<circle cx="1063.5" cy="1108.4" r="7.2"/>
<circle cx="1427.0" cy="764.9" r="7.2"/>
<circle cx="1386.5" cy="830.2" r="7.2"/>
<circle cx="1359.0" cy="888.4" r="7.2"/>
<circle cx="1423.7" cy="922.4" r="7.2"/>
<circle cx="1509.0" cy="949.9" r="7.2"/>
<circle cx="1456.7" cy="974.8" r="7.2"/>
<circle cx="1568.3" cy="970.0" r="7.2"/>
<circle cx="1405.6" cy="995.8" r="7.2"/>
<circle cx="1418.0" cy="1000.0" r="7.2"/>
<circle cx="1556.3" cy="1024.3" r="7.2"/>
<circle cx="1424.4" cy="1030.0" r="7.2"/>
<circle cx="1436.7" cy="1032.3" r="7.2"/>
<circle cx="1443.8" cy="1043.7" r="7.2"/>
<circle cx="1354.9" cy="1049.5" r="7.2"/>
<circle cx="1453.5" cy="1058.2" r="7.2"/>
<circle cx="1469.0" cy="1058.2" r="7.2"/>
<circle cx="1431.8" cy="1062.0" r="7.2"/>
<circle cx="1402.7" cy="1068.0" r="7.2"/>
<circle cx="1366.8" cy="1070.2" r="7.2"/>
<circle cx="1359.0" cy="1074.4" r="7.2"/>
<circle cx="1391.4" cy="1084.7" r="7.2"/>
<circle cx="1463.2" cy="1097.0" r="7.2"/>
<circle cx="1472.2" cy="1092.8" r="7.2"/>
<circle cx="1423.4" cy="1110.0" r="7.2"/>
<circle cx="1354.9" cy="1110.0" r="7.2"/>
<circle cx="1357.5" cy="1119.0" r="7.2"/>
<circle cx="1483.6" cy="1116.0" r="7.2"/>
<circle cx="1475.5" cy="1121.0" r="7.2"/>
<circle cx="1006.2" cy="1123.9" r="7.2"/>
<circle cx="955.1" cy="1137.8" r="7.2"/>
<circle cx="1067.3" cy="1134.6" r="7.2"/>
<circle cx="1079.6" cy="1138.4" r="7.2"/>
<circle cx="1240.4" cy="1123.9" r="7.2"/>
<circle cx="1314.7" cy="1132.3" r="7.2"/>
<circle cx="1288.2" cy="1145.2" r="7.2"/>
<circle cx="1009.1" cy="1145.2" r="7.2"/>
<circle cx="1021.4" cy="1147.5" r="7.2"/>
<circle cx="991.3" cy="1153.0" r="7.2"/>
<circle cx="929.9" cy="1161.4" r="7.2"/>
<circle cx="1160.5" cy="1161.4" r="7.2"/>
<circle cx="1169.2" cy="1157.2" r="7.2"/>
<circle cx="1032.7" cy="1161.4" r="7.2"/>
<circle cx="1029.8" cy="1167.9" r="7.2"/>
<circle cx="977.8" cy="1167.9" r="7.2"/>
<circle cx="970.6" cy="1171.7" r="7.2"/>
<circle cx="1096.4" cy="1169.2" r="7.2"/>
<circle cx="1087.7" cy="1172.7" r="7.2"/>
<circle cx="1076.4" cy="1178.2" r="7.2"/>
<circle cx="1313.1" cy="1184.0" r="7.2"/>
<circle cx="988.1" cy="1187.9" r="7.2"/>
<circle cx="993.3" cy="1195.4" r="7.2"/>
<circle cx="1062.5" cy="1185.7" r="7.2"/>
<circle cx="1073.2" cy="1188.9" r="7.2"/>
<circle cx="1096.4" cy="1188.0" r="7.2"/>
<circle cx="1045.7" cy="1195.4" r="7.2"/>
<circle cx="1109.7" cy="1196.0" r="7.2"/>
<circle cx="886.5" cy="1205.7" r="7.2"/>
<circle cx="993.3" cy="1206.7" r="7.2"/>
<circle cx="1034.3" cy="1216.0" r="7.2"/>
<circle cx="1118.4" cy="1213.1" r="7.2"/>
<circle cx="1111.3" cy="1217.7" r="7.2"/>
<circle cx="1152.4" cy="1212.2" r="7.2"/>
<circle cx="1156.6" cy="1221.0" r="7.2"/>
<circle cx="1255.9" cy="1217.7" r="7.2"/>
<circle cx="1331.9" cy="1213.1" r="7.2"/>
<circle cx="1335.1" cy="1221.0" r="7.2"/>
<circle cx="1314.7" cy="1223.5" r="7.2"/>
<circle cx="1273.0" cy="1230.6" r="7.2"/>
<circle cx="1265.0" cy="1234.8" r="7.2"/>
<circle cx="1296.3" cy="1233.2" r="7.2"/>
<circle cx="1118.4" cy="1229.3" r="7.2"/>
<circle cx="1120.0" cy="1235.5" r="7.2"/>
<circle cx="1003.6" cy="1240.3" r="7.2"/>
<circle cx="923.7" cy="1249.4" r="7.2"/>
<circle cx="1096.8" cy="1252.6" r="7.2"/>
<circle cx="1139.5" cy="1252.0" r="7.2"/>
<circle cx="1283.4" cy="1245.2" r="7.2"/>
<circle cx="1282.7" cy="1251.0" r="7.2"/>
<circle cx="1262.3" cy="1253.2" r="7.2"/>
<circle cx="1284.3" cy="1264.0" r="7.2"/>
<circle cx="1299.5" cy="1270.4" r="7.2"/>
<circle cx="1255.0" cy="1268.8" r="7.2"/>
<circle cx="1238.1" cy="1268.8" r="7.2"/>
<circle cx="1242.0" cy="1278.5" r="7.2"/>
<circle cx="1226.8" cy="1275.9" r="7.2"/>
<circle cx="1216.4" cy="1282.7" r="7.2"/>
<circle cx="1206.7" cy="1288.2" r="7.2"/>
<circle cx="1195.4" cy="1294.6" r="7.2"/>
<circle cx="1197.7" cy="1307.0" r="7.2"/>
<circle cx="1154.0" cy="1278.5" r="7.2"/>
<circle cx="1146.9" cy="1284.0" r="7.2"/>
<circle cx="1168.6" cy="1297.2" r="7.2"/>
<circle cx="1172.8" cy="1310.2" r="7.2"/>
<circle cx="1297.9" cy="1281.7" r="7.2"/>
<circle cx="1303.8" cy="1291.4" r="7.2"/>
<circle cx="1322.2" cy="1302.7" r="7.2"/>
<circle cx="1314.7" cy="1307.6" r="7.2"/>
<circle cx="1249.4" cy="1298.5" r="7.2"/>
<circle cx="1260.1" cy="1316.6" r="7.2"/>
<circle cx="1269.8" cy="1335.0" r="7.2"/>
<circle cx="1061.8" cy="1286.6" r="7.2"/>
<circle cx="1054.7" cy="1292.4" r="7.2"/>
<circle cx="1080.6" cy="1328.0" r="7.2"/>
<circle cx="1095.1" cy="1333.5" r="7.2"/>
<circle cx="1088.4" cy="1339.0" r="7.2"/>
<circle cx="1036.0" cy="1343.2" r="7.2"/>
<circle cx="1145.0" cy="1331.2" r="7.2"/>
<circle cx="1146.9" cy="1339.3" r="7.2"/>
<circle cx="1108.7" cy="1357.7" r="7.2"/>
<circle cx="1174.0" cy="1361.9" r="7.2"/>
<circle cx="1240.7" cy="1365.1" r="7.2"/>
<circle cx="1297.3" cy="1366.8" r="7.2"/>
<circle cx="1314.7" cy="1404.6" r="7.2"/>
<circle cx="1097.4" cy="1418.2" r="7.2"/>
<circle cx="1122.3" cy="1441.1" r="7.2"/>
<circle cx="910.8" cy="1526.9" r="7.2"/>
<circle cx="915.7" cy="1535.6" r="7.2"/>
<circle cx="963.8" cy="1606.1" r="7.2"/>
<circle cx="1408.2" cy="1137.8" r="7.2"/>
<circle cx="1378.5" cy="1145.2" r="7.2"/>
<circle cx="1354.9" cy="1145.2" r="7.2"/>
<circle cx="1477.7" cy="1126.0" r="7.2"/>
<circle cx="1492.3" cy="1132.9" r="7.2"/>
<circle cx="1489.0" cy="1150.7" r="7.2"/>
<circle cx="1501.0" cy="1175.0" r="7.2"/>
<circle cx="1428.6" cy="1173.4" r="7.2"/>
<circle cx="1437.3" cy="1184.7" r="7.2"/>
<circle cx="1441.5" cy="1192.8" r="7.2"/>
<circle cx="1389.8" cy="1202.5" r="7.2"/>
<circle cx="1602.3" cy="1178.2" r="7.2"/>
<circle cx="1553.1" cy="1199.2" r="7.2"/>
<circle cx="1564.1" cy="1201.8" r="7.2"/>
<circle cx="1642.7" cy="1208.0" r="7.2"/>
<circle cx="1469.7" cy="1241.9" r="7.2"/>
<circle cx="1504.3" cy="1247.7" r="7.2"/>
<circle cx="1422.8" cy="1269.4" r="7.2"/>
<circle cx="1452.8" cy="1310.2" r="7.2"/>
<circle cx="1451.9" cy="1324.7" r="7.2"/>
<circle cx="1497.8" cy="1294.6" r="7.2"/>
<circle cx="1513.3" cy="1321.2" r="7.2"/>
<circle cx="1485.2" cy="1341.5" r="7.2"/>
<circle cx="1482.0" cy="1355.1" r="7.2"/>
<circle cx="1460.0" cy="1361.9" r="7.2"/>
<circle cx="1444.8" cy="1373.9" r="7.2"/>
<circle cx="1435.1" cy="1382.0" r="7.2"/>
<circle cx="1417.9" cy="1397.5" r="7.2"/>
<circle cx="1425.0" cy="1418.2" r="7.2"/>
<circle cx="1359.7" cy="1355.4" r="7.2"/>
<circle cx="1353.2" cy="1361.0" r="7.2"/>
<circle cx="1367.1" cy="1378.7" r="7.2"/>
<circle cx="1386.5" cy="1386.8" r="7.2"/>
<circle cx="1392.0" cy="1405.3" r="7.2"/>
<circle cx="1580.6" cy="1438.6" r="7.2"/>
<circle cx="1458.3" cy="1501.6" r="7.2"/>
<circle cx="1490.0" cy="1532.3" r="7.2"/>
<circle cx="1632.3" cy="1516.2" r="7.2"/>
<circle cx="1639.5" cy="1534.6" r="7.2"/>
<circle cx="1498.1" cy="1605.1" r="7.2"/>
<circle cx="1209" cy="1192.8" r="36"/>
<circle cx="1461.6" cy="1227.4" r="7.2"/>
<circle cx="1412.1" cy="1253.2" r="7.2"/>
<circle cx="984.2" cy="1244.5" r="7.2"/>
<circle cx="989.7" cy="1252.0" r="7.2"/>
<circle cx="1234.5" cy="1168.0" r="7.2"/>
<circle cx="1241.0" cy="1192.0" r="7.2"/>
</g>
<g filter="url(#blur4)" fill="#000" opacity="0.85">
<circle cx="927.5" cy="734.7" r="22"/>
<circle cx="1291.6" cy="752.5" r="22"/>
<circle cx="1413.6" cy="723.4" r="22"/>
<circle cx="911.6" cy="953.6" r="22"/>
<circle cx="938.5" cy="1128.0" r="22"/>
<circle cx="1224.0" cy="1194.3" r="22"/>
<circle cx="1744.1" cy="1330.1" r="22"/>
<circle cx="1542.9" cy="1357.3" r="22"/>
<circle cx="1323.6" cy="1494.2" r="22"/>
<circle cx="1093.4" cy="1528.7" r="22"/>
<circle cx="956.8" cy="1711.5" r="22"/>
<circle cx="1506.4" cy="1703.5" r="22"/>
<circle cx="1273.2" cy="1190" r="26"/>
</g>
<circle cx="1267.2" cy="1183" r="21.5" fill="#52ad4a" stroke="#2f7a2a" stroke-width="2.5"/>
<g fill="#2178b5" stroke="#1a1a1a" stroke-width="1.2">
<circle cx="921.5" cy="727.7" r="18"/>
<circle cx="1285.6" cy="745.5" r="18"/>
<circle cx="1407.6" cy="716.4" r="18"/>
<circle cx="905.6" cy="946.6" r="18"/>
<circle cx="932.5" cy="1121.0" r="18"/>
<circle cx="1218.0" cy="1187.3" r="18"/>
<circle cx="1738.1" cy="1323.1" r="18"/>
<circle cx="1536.9" cy="1350.3" r="18"/>
<circle cx="1317.6" cy="1487.2" r="18"/>
<circle cx="1087.4" cy="1521.7" r="18"/>
<circle cx="950.8" cy="1704.5" r="18"/>
<circle cx="1500.4" cy="1696.5" r="18"/>
</g>
<g font-size="38.5" fill="#323232" stroke="#f8f8f8" stroke-opacity="0.92" stroke-width="8" stroke-linejoin="round" paint-order="stroke">
<text x="943.8" y="712.2" textLength="414.2" lengthAdjust="spacingAndGlyphs">1 Great Titchfield Street</text>
<text x="1429.2" y="700.2" textLength="304.0" lengthAdjust="spacingAndGlyphs">1 Newman Street</text>
<text x="1306.0" y="795.5" textLength="285.0" lengthAdjust="spacingAndGlyphs">2 Berners Street</text>
<text x="927.6" y="930.5" textLength="310.4" lengthAdjust="spacingAndGlyphs">10 Ramillies Place</text>
<text x="952.8" y="1105.0" textLength="293.2" lengthAdjust="spacingAndGlyphs">1 Carnaby Street</text>
<text x="1239.7" y="1171.7" textLength="351.3" lengthAdjust="spacingAndGlyphs">43 Broadwick Street</text>
<text x="1458.3" y="1307.6" textLength="260.4" lengthAdjust="spacingAndGlyphs">54 Dean Street</text>
<text x="1558.6" y="1401.4" textLength="286.2" lengthAdjust="spacingAndGlyphs">52 Rupert Street</text>
<text x="1338.7" y="1471.2" textLength="250.0" lengthAdjust="spacingAndGlyphs">36 Bridle Lane</text>
<text x="753.8" y="1506.3" textLength="314.2" lengthAdjust="spacingAndGlyphs">11 Warwick Street</text>
<text x="971.0" y="1689.0" textLength="221.4" lengthAdjust="spacingAndGlyphs">9 Vigo Street</text>
<text x="1521.4" y="1681.3" textLength="96.6" lengthAdjust="spacingAndGlyphs">20 A4</text>
</g>
</g>
<rect x="412.00" y="498.00" width="1498.00" height="1492.00" rx="0" fill="none" stroke="#6ea3d3" stroke-width="2" />
<rect x="412.00" y="498.00" width="20.00" height="20.00" rx="2" fill="none" stroke="#5a94c8" stroke-width="2" />
<rect x="412.00" y="1234.00" width="20.00" height="20.00" rx="2" fill="none" stroke="#5a94c8" stroke-width="2" />
<rect x="412.00" y="1970.00" width="20.00" height="20.00" rx="2" fill="none" stroke="#5a94c8" stroke-width="2" />
<rect x="1151.00" y="498.00" width="20.00" height="20.00" rx="2" fill="none" stroke="#5a94c8" stroke-width="2" />
<rect x="1151.00" y="1970.00" width="20.00" height="20.00" rx="2" fill="none" stroke="#5a94c8" stroke-width="2" />
<rect x="1890.00" y="498.00" width="20.00" height="20.00" rx="2" fill="none" stroke="#5a94c8" stroke-width="2" />
<rect x="1890.00" y="1234.00" width="20.00" height="20.00" rx="2" fill="none" stroke="#5a94c8" stroke-width="2" />
<rect x="1890.00" y="1970.00" width="20.00" height="20.00" rx="2" fill="none" stroke="#5a94c8" stroke-width="2" />
<rect x="2776.00" y="293.00" width="792.00" height="1889.00" rx="0" fill="#fff" stroke="none" stroke-width="1" />
<line x1="2789.00" y1="348.00" x2="3566.00" y2="348.00" stroke="#c8c8c8" stroke-width="2" />
<rect x="2904.00" y="301.50" width="203.00" height="47.00" rx="6" fill="#ececec" stroke="#c6c6c6" stroke-width="2" />
<rect x="2789.00" y="297.50" width="115.00" height="52.00" rx="6" fill="#fff" stroke="#c6c6c6" stroke-width="2" />
<rect x="2790.50" y="340.00" width="112.00" height="12.00" rx="0" fill="#fff" stroke="none" stroke-width="1" />
<text x="2812.30" y="335.81" font-size="26" fill="#1e1e1e" font-weight="normal" text-anchor="start" textLength="64.3" lengthAdjust="spacingAndGlyphs" >Items</text>
<text x="2927.00" y="336.81" font-size="26" fill="#1e1e1e" font-weight="normal" text-anchor="start" textLength="155.7" lengthAdjust="spacingAndGlyphs" >Undo History</text>
<text x="2796.40" y="380.23" font-size="23" fill="#262626" font-weight="normal" text-anchor="start" textLength="56.6" lengthAdjust="spacingAndGlyphs" >Items</text>
<rect x="3515.00" y="362.00" width="20.00" height="19.00" rx="3" fill="#fff" stroke="#777" stroke-width="1.6" />
<rect x="3543.00" y="362.00" width="20.00" height="19.00" rx="3" fill="#fff" stroke="#777" stroke-width="1.6" />
<path d="M3520 368 h8 v8 h-8 z M3523 365 h8 v8" fill="none" stroke="#666" stroke-width="1.5" />
<path d="M3547 366 L3559 378 M3559 366 L3547 378" fill="none" stroke="#555" stroke-width="2.5" />
<rect x="2789.50" y="391.00" width="777.00" height="138.00" rx="0" fill="#fff" stroke="#cfcfcf" stroke-width="1.5" />
<rect x="2790.50" y="392.00" width="775.00" height="38.00" rx="0" fill="#f7f7f7" stroke="none" stroke-width="1" />
<line x1="2790.00" y1="430.50" x2="3566.00" y2="430.50" stroke="#bdbdbd" stroke-width="2" />
<line x1="2844.50" y1="394.00" x2="2844.50" y2="430.00" stroke="#d8d8d8" stroke-width="1.5" />
<line x1="2900.50" y1="394.00" x2="2900.50" y2="430.00" stroke="#d8d8d8" stroke-width="1.5" />
<rect x="2790.50" y="431.50" width="775.00" height="36.00" rx="0" fill="#dcdcdc" stroke="none" stroke-width="1" />
<path d="M2796 413 Q2810 398 2825 413 Q2810 427 2796 413 Z" fill="#fff" stroke="#666" stroke-width="1.5" />
<circle cx="2810.50" cy="412.50" r="5.50" fill="#555" stroke="none" stroke-width="1" />
<circle cx="2809.50" cy="411.00" r="1.80" fill="#fff" stroke="none" stroke-width="1" />
<path d="M2858 413 v-5 a7.8 7.8 0 0 1 15.6 0 v5" fill="none" stroke="#888" stroke-width="2.5" />
<rect x="2854.00" y="411.00" width="23.50" height="16.00" rx="2.5" fill="#666" stroke="none" stroke-width="0" />
<text x="2907.00" y="421.31" font-size="26" fill="#1e1e1e" font-weight="normal" text-anchor="start" textLength="50.0" lengthAdjust="spacingAndGlyphs" >Item</text>
<rect x="2797.00" y="437.00" width="26.00" height="26.00" rx="2" fill="#fff" stroke="#bdbdbd" stroke-width="1.5" />
<path d="M2802 449 L2808 457 L2818 441" fill="none" stroke="#1a1a1a" stroke-width="2.6" />
<rect x="2853.50" y="437.00" width="26.00" height="26.00" rx="2" fill="#fff" stroke="#bdbdbd" stroke-width="1.5" />
<rect x="2911.00" y="439.00" width="26.00" height="23.00" rx="2" fill="#e6e6e6" stroke="#999" stroke-width="1.5" />
<rect x="2911.00" y="439.00" width="6.00" height="23.00" rx="2" fill="#cfcfcf" stroke="#999" stroke-width="1.2" />
<text x="2952.60" y="457.81" font-size="26" fill="#111" font-weight="bold" text-anchor="start" textLength="71.9" lengthAdjust="spacingAndGlyphs" >Map 1</text>
<circle cx="3165.00" cy="535.50" r="1.10" fill="#999" stroke="none" stroke-width="1" />
<circle cx="3171.00" cy="535.50" r="1.10" fill="#999" stroke="none" stroke-width="1" />
<circle cx="3177.00" cy="535.50" r="1.10" fill="#999" stroke="none" stroke-width="1" />
<circle cx="3183.00" cy="535.50" r="1.10" fill="#999" stroke="none" stroke-width="1" />
<circle cx="3189.00" cy="535.50" r="1.10" fill="#999" stroke="none" stroke-width="1" />
<circle cx="3195.00" cy="535.50" r="1.10" fill="#999" stroke="none" stroke-width="1" />
<rect x="2790.00" y="548.50" width="129.00" height="47.00" rx="6" fill="#ececec" stroke="#c6c6c6" stroke-width="2" />
<rect x="3151.00" y="548.50" width="130.00" height="47.00" rx="6" fill="#ececec" stroke="#c6c6c6" stroke-width="2" />
<line x1="2789.00" y1="594.50" x2="3566.00" y2="594.50" stroke="#c8c8c8" stroke-width="2" />
<rect x="2919.00" y="544.00" width="232.00" height="52.00" rx="6" fill="#fff" stroke="#c6c6c6" stroke-width="2" />
<rect x="2920.50" y="585.00" width="229.00" height="12.00" rx="0" fill="#fff" stroke="none" stroke-width="1" />
<text x="2813.50" y="582.81" font-size="26" fill="#1e1e1e" font-weight="normal" text-anchor="start" textLength="79.5" lengthAdjust="spacingAndGlyphs" >Layout</text>
<text x="2943.00" y="580.81" font-size="26" fill="#1e1e1e" font-weight="normal" text-anchor="start" textLength="181.7" lengthAdjust="spacingAndGlyphs" >Item Properties</text>
<text x="3174.70" y="582.81" font-size="26" fill="#1e1e1e" font-weight="normal" text-anchor="start" textLength="82.3" lengthAdjust="spacingAndGlyphs" >Guides</text>
<text x="2796.40" y="625.73" font-size="23" fill="#262626" font-weight="normal" text-anchor="start" textLength="160.6" lengthAdjust="spacingAndGlyphs" >Item Properties</text>
<rect x="3515.00" y="608.00" width="20.00" height="19.00" rx="3" fill="#fff" stroke="#777" stroke-width="1.6" />
<rect x="3543.00" y="608.00" width="20.00" height="19.00" rx="3" fill="#fff" stroke="#777" stroke-width="1.6" />
<path d="M3520 614 h8 v8 h-8 z M3523 611 h8 v8" fill="none" stroke="#666" stroke-width="1.5" />
<path d="M3547 612 L3559 624 M3559 612 L3547 624" fill="none" stroke="#555" stroke-width="2.5" />
<rect x="2788.00" y="648.50" width="779.00" height="39.50" rx="0" fill="#b4b4b4" stroke="none" stroke-width="1" />
<text x="2799.00" y="677.81" font-size="26" fill="#111" font-weight="bold" text-anchor="start" textLength="72.0" lengthAdjust="spacingAndGlyphs" >Map 1</text>
<rect x="2789.00" y="751.00" width="778.00" height="1431.00" rx="0" fill="#fff" stroke="#d2d2d2" stroke-width="1.5" />
<rect x="3538.50" y="752.00" width="28.00" height="1429.00" rx="0" fill="#fff" stroke="none" stroke-width="1" />
<line x1="3538.50" y1="752.00" x2="3538.50" y2="2181.00" stroke="#c8c8c8" stroke-width="2" />
<rect x="3539.50" y="1658.00" width="27.00" height="494.00" rx="0" fill="#f1f1f1" stroke="none" stroke-width="1" />
<line x1="3539.50" y1="1658.00" x2="3566.00" y2="1658.00" stroke="#c6c6c6" stroke-width="2" />
<line x1="3539.50" y1="777.50" x2="3566.00" y2="777.50" stroke="#d6d6d6" stroke-width="1.5" />
<line x1="3539.50" y1="2152.50" x2="3566.00" y2="2152.50" stroke="#d6d6d6" stroke-width="1.5" />
<path d="M3545 768 L3560 768 L3552.5 759 Z" fill="#555" stroke="none" stroke-width="1" />
<path d="M3545 2163 L3560 2163 L3552.5 2172 Z" fill="#555" stroke="none" stroke-width="1" />
<path d="M2817 785.6 L2839 785.6 L2828 800.6 Z" fill="#222" stroke="none" stroke-width="1" />
<text x="2855.60" y="802.27" font-size="27" fill="#262626" font-weight="bold" text-anchor="start" textLength="200.0" lengthAdjust="spacingAndGlyphs" >Main Properties</text>
<rect x="2815.00" y="815.00" width="700.00" height="287.50" rx="3" fill="#fafafa" stroke="#e2e2e2" stroke-width="2" />
<text x="2840.50" y="875.81" font-size="26" fill="#1e1e1e" font-weight="normal" text-anchor="start" textLength="63.9" lengthAdjust="spacingAndGlyphs" >Scale</text>
<rect x="3005.00" y="844.00" width="409.50" height="44.50" rx="5" fill="#fff" stroke="#b3b3b3" stroke-width="2" />
<text x="3012.00" y="875.56" font-size="26" fill="#1e1e1e" font-weight="normal" text-anchor="start" textLength="114.0" lengthAdjust="spacingAndGlyphs" >5256.328</text>
<path d="M3434 866 L3444.5 851.5 L3444.5 881 Z" fill="#8a8a8a" stroke="#666" stroke-width="1" />
<rect x="3444.50" y="851.50" width="24.50" height="29.50" rx="0" fill="#fff" stroke="#6a6a6a" stroke-width="2" />
<line x1="3451.00" y1="858.00" x2="3463.00" y2="858.00" stroke="#555" stroke-width="3" />
<line x1="3451.00" y1="866.00" x2="3463.00" y2="866.00" stroke="#777" stroke-width="1.6" />
<line x1="3451.00" y1="873.50" x2="3463.00" y2="873.50" stroke="#777" stroke-width="1.6" />
<path d="M3476 874 L3485 874 L3480.5 878 Z" fill="#444" stroke="none" stroke-width="1" />
<text x="2840.50" y="939.71" font-size="26" fill="#1e1e1e" font-weight="normal" text-anchor="start" textLength="149.5" lengthAdjust="spacingAndGlyphs" >Map rotation</text>
<rect x="3005.00" y="908.00" width="409.50" height="42.00" rx="5" fill="#fff" stroke="#b3b3b3" stroke-width="2" />
<text x="3012.00" y="938.31" font-size="26" fill="#1e1e1e" font-weight="normal" text-anchor="start" textLength="76.0" lengthAdjust="spacingAndGlyphs" >0.00 °</text>
<line x1="3386.00" y1="909.00" x2="3386.00" y2="949.00" stroke="#d0d0d0" stroke-width="1.5" />
<path d="M3393 923 L3407 923 L3400 915 Z" fill="#444" stroke="none" stroke-width="1" />
<path d="M3393 936 L3407 936 L3400 944 Z" fill="#444" stroke="none" stroke-width="1" />
<path d="M3434 930 L3444.5 915.5 L3444.5 945 Z" fill="#8a8a8a" stroke="#666" stroke-width="1" />
<rect x="3444.50" y="915.50" width="24.50" height="29.50" rx="0" fill="#fff" stroke="#6a6a6a" stroke-width="2" />
<line x1="3451.00" y1="922.00" x2="3463.00" y2="922.00" stroke="#555" stroke-width="3" />
<line x1="3451.00" y1="930.00" x2="3463.00" y2="930.00" stroke="#777" stroke-width="1.6" />
<line x1="3451.00" y1="937.50" x2="3463.00" y2="937.50" stroke="#777" stroke-width="1.6" />
<path d="M3476 938 L3485 938 L3480.5 942 Z" fill="#444" stroke="none" stroke-width="1" />
<text x="2840.50" y="1003.61" font-size="26" fill="#1e1e1e" font-weight="normal" text-anchor="start" textLength="50.5" lengthAdjust="spacingAndGlyphs" >CRS</text>
<rect x="3005.00" y="969.00" width="353.50" height="49.50" rx="5" fill="#fff" stroke="#b3b3b3" stroke-width="2" />
<text x="3015.00" y="1003.31" font-size="26" fill="#1e1e1e" font-weight="normal" text-anchor="start" textLength="193.6" lengthAdjust="spacingAndGlyphs" >Use Project CRS</text>
<path d="M3328.6 989.5 L3344.7 989.5 L3336.6 998 Z" fill="#444" stroke="none" stroke-width="1" />
<rect x="3368.50" y="971.00" width="46.00" height="44.00" rx="5" fill="#fafafa" stroke="#bcbcbc" stroke-width="2" />
<circle cx="3391.00" cy="990.00" r="13.00" fill="#c8d8ea" stroke="#6b8fb5" stroke-width="1.5" />
<path d="M3378 990 h26 M3391 977 v26 M3381 982 h20 M3381 998 h20" fill="none" stroke="#7b9bbf" stroke-width="1.2" />
<rect x="3394.00" y="993.00" width="14.00" height="14.00" rx="0" fill="#e5b82a" stroke="#b88a10" stroke-width="1" />
<path d="M3434 994 L3444.5 979.5 L3444.5 1009 Z" fill="#8a8a8a" stroke="#666" stroke-width="1" />
<rect x="3444.50" y="979.50" width="24.50" height="29.50" rx="0" fill="#fff" stroke="#6a6a6a" stroke-width="2" />
<line x1="3451.00" y1="986.00" x2="3463.00" y2="986.00" stroke="#555" stroke-width="3" />
<line x1="3451.00" y1="994.00" x2="3463.00" y2="994.00" stroke="#777" stroke-width="1.6" />
<line x1="3451.00" y1="1001.50" x2="3463.00" y2="1001.50" stroke="#777" stroke-width="1.6" />
<path d="M3476 1002 L3485 1002 L3480.5 1006 Z" fill="#444" stroke="none" stroke-width="1" />
<rect x="2841.00" y="1041.00" width="26.00" height="26.00" rx="2" fill="#fff" stroke="#c0c0c0" stroke-width="1.6" />
<path d="M2846 1054 L2852 1062 L2862 1045" fill="none" stroke="#1a1a1a" stroke-width="2.6" />
<text x="2879.00" y="1064.11" font-size="26" fill="#1e1e1e" font-weight="normal" text-anchor="start" textLength="280.8" lengthAdjust="spacingAndGlyphs" >Draw map canvas items</text>
<path d="M2817 1128.3 L2839 1128.3 L2828 1143.3 Z" fill="#222" stroke="none" stroke-width="1" />
<text x="2855.60" y="1144.97" font-size="27" fill="#262626" font-weight="bold" text-anchor="start" textLength="84.0" lengthAdjust="spacingAndGlyphs" >Layers</text>
<rect x="2815.00" y="1157.00" width="700.00" height="224.00" rx="3" fill="#fafafa" stroke="#e2e2e2" stroke-width="2" />
<rect x="2841.00" y="1195.00" width="26.00" height="26.00" rx="2" fill="#fff" stroke="#c0c0c0" stroke-width="1.6" />
<text x="2878.00" y="1218.31" font-size="26" fill="#1e1e1e" font-weight="normal" text-anchor="start" textLength="216.8" lengthAdjust="spacingAndGlyphs" >Follow map theme</text>
<rect x="3135.00" y="1186.00" width="280.00" height="44.50" rx="5" fill="#fafafa" stroke="#b3b3b3" stroke-width="2" />
<text x="3145.70" y="1217.81" font-size="26" fill="#1e1e1e" font-weight="normal" text-anchor="start" textLength="74.3" lengthAdjust="spacingAndGlyphs" >(none)</text>
<path d="M3385.5 1204 L3400.7 1204 L3393 1212 Z" fill="#444" stroke="none" stroke-width="1" />
<path d="M3434 1208 L3444.5 1193.5 L3444.5 1223 Z" fill="#8a8a8a" stroke="#666" stroke-width="1" />
<rect x="3444.50" y="1193.50" width="24.50" height="29.50" rx="0" fill="#fff" stroke="#6a6a6a" stroke-width="2" />
<line x1="3451.00" y1="1200.00" x2="3463.00" y2="1200.00" stroke="#555" stroke-width="3" />
<line x1="3451.00" y1="1208.00" x2="3463.00" y2="1208.00" stroke="#777" stroke-width="1.6" />
<line x1="3451.00" y1="1215.50" x2="3463.00" y2="1215.50" stroke="#777" stroke-width="1.6" />
<path d="M3476 1216 L3485 1216 L3480.5 1220 Z" fill="#444" stroke="none" stroke-width="1" />
<rect x="2841.00" y="1259.00" width="26.00" height="26.00" rx="2" fill="#fff" stroke="#c0c0c0" stroke-width="1.6" />
<text x="2878.00" y="1282.51" font-size="26" fill="#1e1e1e" font-weight="normal" text-anchor="start" textLength="134.0" lengthAdjust="spacingAndGlyphs" >Lock layers</text>
<rect x="3369.00" y="1249.50" width="46.00" height="43.50" rx="5" fill="#fafafa" stroke="#bcbcbc" stroke-width="2" />
<path d="M3376 1271 Q3391 1257 3406 1271 Q3391 1283 3376 1271 Z" fill="#fff" stroke="#888" stroke-width="1.5" />
<circle cx="3391.00" cy="1270.50" r="6.00" fill="#5a8ad0" stroke="#2a4a80" stroke-width="1" />
<circle cx="3391.00" cy="1270.00" r="2.00" fill="#112" stroke="none" stroke-width="1" />
<path d="M3400 1279 L3408 1279 L3404 1284 Z" fill="#444" stroke="none" stroke-width="1" />
<path d="M3434 1272 L3444.5 1257.5 L3444.5 1287 Z" fill="#8a8a8a" stroke="#666" stroke-width="1" />
<rect x="3444.50" y="1257.50" width="24.50" height="29.50" rx="0" fill="#fff" stroke="#6a6a6a" stroke-width="2" />
<line x1="3451.00" y1="1264.00" x2="3463.00" y2="1264.00" stroke="#555" stroke-width="3" />
<line x1="3451.00" y1="1272.00" x2="3463.00" y2="1272.00" stroke="#777" stroke-width="1.6" />
<line x1="3451.00" y1="1279.50" x2="3463.00" y2="1279.50" stroke="#777" stroke-width="1.6" />
<path d="M3476 1280 L3485 1280 L3480.5 1284 Z" fill="#444" stroke="none" stroke-width="1" />
<rect x="2841.00" y="1319.00" width="26.00" height="26.00" rx="2" fill="#fff" stroke="#c0c0c0" stroke-width="1.6" />
<text x="2878.00" y="1342.71" font-size="26" fill="#1e1e1e" font-weight="normal" text-anchor="start" textLength="250.6" lengthAdjust="spacingAndGlyphs" >Lock styles for layers</text>
<path d="M2817 1405.7 L2839 1405.7 L2828 1420.7 Z" fill="#222" stroke="none" stroke-width="1" />
<text x="2855.60" y="1422.37" font-size="27" fill="#262626" font-weight="bold" text-anchor="start" textLength="96.0" lengthAdjust="spacingAndGlyphs" >Extents</text>
<rect x="2815.00" y="1435.00" width="700.00" height="296.00" rx="3" fill="#fafafa" stroke="#e2e2e2" stroke-width="2" />
<text x="2840.00" y="1496.31" font-size="26" fill="#1e1e1e" font-weight="normal" text-anchor="start" textLength="66.3" lengthAdjust="spacingAndGlyphs" >X min</text>
<rect x="2927.00" y="1463.50" width="487.50" height="45.00" rx="5" fill="#fff" stroke="#b3b3b3" stroke-width="2" />
<text x="2934.00" y="1495.31" font-size="26" fill="#1e1e1e" font-weight="normal" text-anchor="start" textLength="139.5" lengthAdjust="spacingAndGlyphs" >698114.573</text>
<path d="M3434 1487 L3444.5 1472.5 L3444.5 1502 Z" fill="#8a8a8a" stroke="#666" stroke-width="1" />
<rect x="3444.50" y="1472.50" width="24.50" height="29.50" rx="0" fill="#fff" stroke="#6a6a6a" stroke-width="2" />
<line x1="3451.00" y1="1479.00" x2="3463.00" y2="1479.00" stroke="#555" stroke-width="3" />
<line x1="3451.00" y1="1487.00" x2="3463.00" y2="1487.00" stroke="#777" stroke-width="1.6" />
<line x1="3451.00" y1="1494.50" x2="3463.00" y2="1494.50" stroke="#777" stroke-width="1.6" />
<path d="M3476 1495 L3485 1495 L3480.5 1499 Z" fill="#444" stroke="none" stroke-width="1" />
<text x="2840.00" y="1560.31" font-size="26" fill="#1e1e1e" font-weight="normal" text-anchor="start" textLength="66.3" lengthAdjust="spacingAndGlyphs" >Y min</text>
<rect x="2927.00" y="1527.50" width="487.50" height="45.00" rx="5" fill="#fff" stroke="#b3b3b3" stroke-width="2" />
<text x="2934.00" y="1559.31" font-size="26" fill="#1e1e1e" font-weight="normal" text-anchor="start" textLength="156.6" lengthAdjust="spacingAndGlyphs" >5710243.034</text>
<path d="M3434 1551 L3444.5 1536.5 L3444.5 1566 Z" fill="#8a8a8a" stroke="#666" stroke-width="1" />
<rect x="3444.50" y="1536.50" width="24.50" height="29.50" rx="0" fill="#fff" stroke="#6a6a6a" stroke-width="2" />
<line x1="3451.00" y1="1543.00" x2="3463.00" y2="1543.00" stroke="#555" stroke-width="3" />
<line x1="3451.00" y1="1551.00" x2="3463.00" y2="1551.00" stroke="#777" stroke-width="1.6" />
<line x1="3451.00" y1="1558.50" x2="3463.00" y2="1558.50" stroke="#777" stroke-width="1.6" />
<path d="M3476 1559 L3485 1559 L3480.5 1563 Z" fill="#444" stroke="none" stroke-width="1" />
<text x="2840.00" y="1623.71" font-size="26" fill="#1e1e1e" font-weight="normal" text-anchor="start" textLength="73.0" lengthAdjust="spacingAndGlyphs" >X max</text>
<rect x="2927.00" y="1591.50" width="487.50" height="44.50" rx="5" fill="#fff" stroke="#b3b3b3" stroke-width="2" />
<text x="2934.00" y="1623.06" font-size="26" fill="#1e1e1e" font-weight="normal" text-anchor="start" textLength="135.0" lengthAdjust="spacingAndGlyphs" >699147.155</text>
<path d="M3434 1614.4 L3444.5 1599.9 L3444.5 1629.4 Z" fill="#8a8a8a" stroke="#666" stroke-width="1" />
<rect x="3444.50" y="1599.90" width="24.50" height="29.50" rx="0" fill="#fff" stroke="#6a6a6a" stroke-width="2" />
<line x1="3451.00" y1="1606.40" x2="3463.00" y2="1606.40" stroke="#555" stroke-width="3" />
<line x1="3451.00" y1="1614.40" x2="3463.00" y2="1614.40" stroke="#777" stroke-width="1.6" />
<line x1="3451.00" y1="1621.90" x2="3463.00" y2="1621.90" stroke="#777" stroke-width="1.6" />
<path d="M3476 1622.4 L3485 1622.4 L3480.5 1626.4 Z" fill="#444" stroke="none" stroke-width="1" />
<text x="2840.00" y="1687.51" font-size="26" fill="#1e1e1e" font-weight="normal" text-anchor="start" textLength="73.0" lengthAdjust="spacingAndGlyphs" >Y max</text>
<rect x="2927.00" y="1655.50" width="487.50" height="44.50" rx="5" fill="#fff" stroke="#b3b3b3" stroke-width="2" />
<text x="2934.00" y="1687.06" font-size="26" fill="#1e1e1e" font-weight="normal" text-anchor="start" textLength="147.5" lengthAdjust="spacingAndGlyphs" >5711271.480</text>
<path d="M3434 1678.2 L3444.5 1663.7 L3444.5 1693.2 Z" fill="#8a8a8a" stroke="#666" stroke-width="1" />
<rect x="3444.50" y="1663.70" width="24.50" height="29.50" rx="0" fill="#fff" stroke="#6a6a6a" stroke-width="2" />
<line x1="3451.00" y1="1670.20" x2="3463.00" y2="1670.20" stroke="#555" stroke-width="3" />
<line x1="3451.00" y1="1678.20" x2="3463.00" y2="1678.20" stroke="#777" stroke-width="1.6" />
<line x1="3451.00" y1="1685.70" x2="3463.00" y2="1685.70" stroke="#777" stroke-width="1.6" />
<path d="M3476 1686.2 L3485 1686.2 L3480.5 1690.2 Z" fill="#444" stroke="none" stroke-width="1" />
<path d="M2822 1750.6 L2836 1761.6 L2822 1772.6 Z" fill="#222" stroke="none" stroke-width="1" />
<rect x="2853.00" y="1747.10" width="26.50" height="27.00" rx="2" fill="#fff" stroke="#c3c3c3" stroke-width="1.6" />
<text x="2896.00" y="1771.27" font-size="27" fill="#262626" font-weight="bold" text-anchor="start" textLength="202.0" lengthAdjust="spacingAndGlyphs" >Elevation Range</text>
<path d="M2822 1807 L2836 1818 L2822 1829 Z" fill="#222" stroke="none" stroke-width="1" />
<rect x="2853.00" y="1803.50" width="26.50" height="27.00" rx="2" fill="#fff" stroke="#c3c3c3" stroke-width="1.6" />
<text x="2896.00" y="1827.67" font-size="27" fill="#262626" font-weight="bold" text-anchor="start" textLength="203.4" lengthAdjust="spacingAndGlyphs" >Temporal Range</text>
<path d="M2822 1862.9 L2836 1873.9 L2822 1884.9 Z" fill="#bbb" stroke="none" stroke-width="1" />
<rect x="2853.00" y="1859.40" width="26.50" height="27.00" rx="2" fill="#fff" stroke="#c3c3c3" stroke-width="1.6" />
<text x="2896.00" y="1883.57" font-size="27" fill="#262626" font-weight="bold" text-anchor="start" textLength="241.8" lengthAdjust="spacingAndGlyphs" >Controlled by Atlas</text>
<path d="M2822 1919.3 L2836 1930.3 L2822 1941.3 Z" fill="#222" stroke="none" stroke-width="1" />
<text x="2855.60" y="1939.97" font-size="27" fill="#262626" font-weight="bold" text-anchor="start" textLength="67.8" lengthAdjust="spacingAndGlyphs" >Grids</text>
<path d="M2822 1975.8 L2836 1986.8 L2822 1997.8 Z" fill="#222" stroke="none" stroke-width="1" />
<text x="2855.60" y="1996.47" font-size="27" fill="#262626" font-weight="bold" text-anchor="start" textLength="133.7" lengthAdjust="spacingAndGlyphs" >Overviews</text>
<path d="M2822 2031.6 L2836 2042.6 L2822 2053.6 Z" fill="#222" stroke="none" stroke-width="1" />
<text x="2855.60" y="2052.27" font-size="27" fill="#262626" font-weight="bold" text-anchor="start" textLength="216.4" lengthAdjust="spacingAndGlyphs" >Position and Size</text>
<path d="M2822 2087.4 L2836 2098.4 L2822 2109.4 Z" fill="#222" stroke="none" stroke-width="1" />
<text x="2855.60" y="2108.07" font-size="27" fill="#262626" font-weight="bold" text-anchor="start" textLength="108.0" lengthAdjust="spacingAndGlyphs" >Rotation</text>
<path d="M2822 2134.5 L2836 2145.5 L2822 2156.5 Z" fill="#222" stroke="none" stroke-width="1" />
<rect x="2853.00" y="2131.00" width="26.50" height="27.00" rx="2" fill="#fff" stroke="#c3c3c3" stroke-width="1.6" />
<text x="2896.00" y="2155.17" font-size="27" fill="#262626" font-weight="bold" text-anchor="start" textLength="79.6" lengthAdjust="spacingAndGlyphs" >Frame</text>
<path d="M2853.8 2182 v-2.5 q0 -1.5 1.5 -1.5 h23 q1.5 0 1.5 1.5 v2.5" fill="none" stroke="#c3c3c3" stroke-width="1.6" />
<rect x="2789.00" y="2181.00" width="750.00" height="3.00" rx="0" fill="#fff" stroke="none" stroke-width="1" />
<line x1="2789.00" y1="2181.50" x2="3566.00" y2="2181.50" stroke="#d2d2d2" stroke-width="1.5" />
<circle cx="122.00" cy="164.00" r="1.30" fill="#bdbdbd" stroke="none" stroke-width="1" />
<circle cx="130.00" cy="164.00" r="1.30" fill="#bdbdbd" stroke="none" stroke-width="1" />
<circle cx="122.00" cy="172.00" r="1.30" fill="#bdbdbd" stroke="none" stroke-width="1" />
<circle cx="130.00" cy="172.00" r="1.30" fill="#bdbdbd" stroke="none" stroke-width="1" />
<circle cx="122.00" cy="180.00" r="1.30" fill="#bdbdbd" stroke="none" stroke-width="1" />
<circle cx="130.00" cy="180.00" r="1.30" fill="#bdbdbd" stroke="none" stroke-width="1" />
<circle cx="122.00" cy="188.00" r="1.30" fill="#bdbdbd" stroke="none" stroke-width="1" />
<circle cx="130.00" cy="188.00" r="1.30" fill="#bdbdbd" stroke="none" stroke-width="1" />
<circle cx="122.00" cy="196.00" r="1.30" fill="#bdbdbd" stroke="none" stroke-width="1" />
<circle cx="130.00" cy="196.00" r="1.30" fill="#bdbdbd" stroke="none" stroke-width="1" />
<rect x="151.00" y="157.00" width="38.00" height="41.00" rx="4" fill="#6d98c8" stroke="#3e6390" stroke-width="2" />
<rect x="157.00" y="159.00" width="26.00" height="15.00" rx="1.5" fill="#f2f2f2" stroke="#777" stroke-width="1.5" />
<rect x="160.00" y="162.00" width="20.00" height="1.80" rx="0" fill="#555" stroke="none" stroke-width="1" />
<rect x="160.00" y="166.00" width="20.00" height="1.80" rx="0" fill="#555" stroke="none" stroke-width="1" />
<rect x="160.00" y="170.00" width="20.00" height="1.80" rx="0" fill="#555" stroke="none" stroke-width="1" />
<rect x="158.00" y="182.00" width="24.00" height="16.00" rx="1" fill="#f2f2f2" stroke="#777" stroke-width="1.5" />
<rect x="161.00" y="185.00" width="6.00" height="9.00" rx="0" fill="#3e5f85" stroke="none" stroke-width="1" />
<rect x="209.00" y="159.00" width="2.00" height="38.00" rx="0" fill="#dcdcdc" stroke="none" stroke-width="1" />
<path d="M228.5 158.5 L261.5 158.5 L271.5 168.5 L271.5 197.5 L228.5 197.5 Z" fill="#fff" stroke="#777" stroke-width="2" />
<path d="M261.5 158.5 L261.5 168.5 L271.5 168.5" fill="none" stroke="#777" stroke-width="1.6" />
<rect x="234.00" y="165.00" width="30.00" height="28.00" rx="0" fill="none" stroke="#c5d5f5" stroke-width="2" />
<path d="M232 160 h20 v8 h-12 v32 h-8 Z" fill="#f2d35a" stroke="#c9a51e" stroke-width="1.5" />
<line x1="233.00" y1="172.00" x2="238.00" y2="172.00" stroke="#c9a51e" stroke-width="1.5" />
<line x1="233.00" y1="177.00" x2="238.00" y2="177.00" stroke="#c9a51e" stroke-width="1.5" />
<line x1="233.00" y1="182.00" x2="238.00" y2="182.00" stroke="#c9a51e" stroke-width="1.5" />
<line x1="233.00" y1="187.00" x2="238.00" y2="187.00" stroke="#c9a51e" stroke-width="1.5" />
<line x1="233.00" y1="192.00" x2="238.00" y2="192.00" stroke="#c9a51e" stroke-width="1.5" />
<rect x="252.00" y="180.00" width="22.00" height="22.00" rx="4" fill="#c9a51e" stroke="#a88910" stroke-width="1.5" />
<line x1="256.00" y1="191.00" x2="270.00" y2="191.00" stroke="#fff" stroke-width="2.5" />
<line x1="258.05" y1="186.05" x2="267.95" y2="195.95" stroke="#fff" stroke-width="2.5" />
<line x1="263.00" y1="184.00" x2="263.00" y2="198.00" stroke="#fff" stroke-width="2.5" />
<line x1="267.95" y1="186.05" x2="258.05" y2="195.95" stroke="#fff" stroke-width="2.5" />
<circle cx="263.00" cy="191.00" r="4.50" fill="#fff" stroke="none" stroke-width="1" />
<circle cx="263.00" cy="191.00" r="1.80" fill="#c9a51e" stroke="none" stroke-width="1" />
<rect x="293.00" y="160.00" width="36.00" height="37.00" rx="0" fill="#c8c8c8" stroke="#777" stroke-width="2" />
<path d="M299.5 154.5 L329.5 154.5 L339.5 164.5 L339.5 190.5 L299.5 190.5 Z" fill="#fff" stroke="#777" stroke-width="2" />
<path d="M329.5 154.5 L329.5 164.5 L339.5 164.5" fill="none" stroke="#777" stroke-width="1.6" />
<rect x="304.00" y="159.00" width="28.00" height="27.00" rx="0" fill="none" stroke="#c5d5f5" stroke-width="2" />
<rect x="318.00" y="180.00" width="22.00" height="22.00" rx="4" fill="#c9a51e" stroke="#a88910" stroke-width="1.5" />
<line x1="322.00" y1="191.00" x2="336.00" y2="191.00" stroke="#fff" stroke-width="2.5" />
<line x1="324.05" y1="186.05" x2="333.95" y2="195.95" stroke="#fff" stroke-width="2.5" />
<line x1="329.00" y1="184.00" x2="329.00" y2="198.00" stroke="#fff" stroke-width="2.5" />
<line x1="333.95" y1="186.05" x2="324.05" y2="195.95" stroke="#fff" stroke-width="2.5" />
<circle cx="329.00" cy="191.00" r="4.50" fill="#fff" stroke="none" stroke-width="1" />
<circle cx="329.00" cy="191.00" r="1.80" fill="#c9a51e" stroke="none" stroke-width="1" />
<path d="M360.5 158.5 L393.5 158.5 L403.5 168.5 L403.5 197.5 L360.5 197.5 Z" fill="#fff" stroke="#777" stroke-width="2" />
<path d="M393.5 158.5 L393.5 168.5 L403.5 168.5" fill="none" stroke="#777" stroke-width="1.6" />
<rect x="366.00" y="164.00" width="32.00" height="28.00" rx="0" fill="none" stroke="#c5d5f5" stroke-width="2" />
<path d="M376 176 L400 199" fill="none" stroke="#555" stroke-width="7" stroke-linecap="round"/>
<path d="M376 176 L400 199" fill="none" stroke="#e8d17a" stroke-width="4" stroke-linecap="round"/>
<path d="M370 168 a8 8 0 1 0 12 10" fill="none" stroke="#555" stroke-width="5" />
<path d="M370 168 a8 8 0 1 0 12 10" fill="none" stroke="#ddd" stroke-width="2.5" />
<path d="M425.5 161 h15 l3 4 h24 v30 h-42 Z" fill="#f4cd4a" stroke="#c9a51e" stroke-width="1.5" />
<path d="M426 195 L433 173 h37 L463 195 Z" fill="#fbdc5f" stroke="#c9a51e" stroke-width="1.5" />
<rect x="495.00" y="157.00" width="38.00" height="41.00" rx="4" fill="#6d98c8" stroke="#3e6390" stroke-width="2" />
<rect x="501.00" y="159.00" width="26.00" height="15.00" rx="1.5" fill="#f2f2f2" stroke="#777" stroke-width="1.5" />
<rect x="504.00" y="162.00" width="20.00" height="1.80" rx="0" fill="#555" stroke="none" stroke-width="1" />
<rect x="504.00" y="166.00" width="20.00" height="1.80" rx="0" fill="#555" stroke="none" stroke-width="1" />
<rect x="504.00" y="170.00" width="20.00" height="1.80" rx="0" fill="#555" stroke="none" stroke-width="1" />
<rect x="502.00" y="182.00" width="24.00" height="16.00" rx="1" fill="#f2f2f2" stroke="#777" stroke-width="1.5" />
<rect x="505.00" y="185.00" width="6.00" height="9.00" rx="0" fill="#3e5f85" stroke="none" stroke-width="1" />
<rect x="518.00" y="182.00" width="20.00" height="20.00" rx="4" fill="#5a9a5a" stroke="#3f7a3f" stroke-width="1.5" />
<path d="M523 197 L533 187" fill="none" stroke="#fff" stroke-width="3.5" />
<rect x="553.00" y="159.00" width="2.00" height="38.00" rx="0" fill="#dcdcdc" stroke="none" stroke-width="1" />
<path d="M578.5 156.5 L599.5 156.5 L609.5 166.5 L609.5 198.5 L578.5 198.5 Z" fill="#fff" stroke="#777" stroke-width="2" />
<path d="M599.5 156.5 L599.5 166.5 L609.5 166.5" fill="none" stroke="#777" stroke-width="1.6" />
<rect x="596.00" y="180.00" width="22.00" height="22.00" rx="4" fill="#c9a51e" stroke="#a88910" stroke-width="1.5" />
<line x1="600.00" y1="191.00" x2="614.00" y2="191.00" stroke="#fff" stroke-width="2.5" />
<line x1="602.05" y1="186.05" x2="611.95" y2="195.95" stroke="#fff" stroke-width="2.5" />
<line x1="607.00" y1="184.00" x2="607.00" y2="198.00" stroke="#fff" stroke-width="2.5" />
<line x1="611.95" y1="186.05" x2="602.05" y2="195.95" stroke="#fff" stroke-width="2.5" />
<circle cx="607.00" cy="191.00" r="4.50" fill="#fff" stroke="none" stroke-width="1" />
<circle cx="607.00" cy="191.00" r="1.80" fill="#c9a51e" stroke="none" stroke-width="1" />
<rect x="632.70" y="159.00" width="2.00" height="38.00" rx="0" fill="#dcdcdc" stroke="none" stroke-width="1" />
<rect x="664.00" y="158.00" width="20.00" height="13.00" rx="0" fill="#eee" stroke="#888" stroke-width="2" />
<rect x="654.50" y="166.50" width="39.00" height="21.00" rx="5" fill="#6d98c8" stroke="#3e6390" stroke-width="2" />
<rect x="664.00" y="178.00" width="20.00" height="19.00" rx="0" fill="#eee" stroke="#888" stroke-width="2" />
<line x1="667.00" y1="183.00" x2="681.00" y2="183.00" stroke="#888" stroke-width="1.5" />
<line x1="667.00" y1="187.00" x2="681.00" y2="187.00" stroke="#888" stroke-width="1.5" />
<line x1="667.00" y1="191.00" x2="681.00" y2="191.00" stroke="#888" stroke-width="1.5" />
<path d="M718.5 154.5 L739.5 154.5 L748.5 163.5 L748.5 197.5 L718.5 197.5 Z" fill="#fff" stroke="#888" stroke-width="2" />
<path d="M739.5 154.5 L739.5 163.5 L748.5 163.5" fill="none" stroke="#888" stroke-width="1.6" />
<rect x="721.00" y="169.00" width="27.00" height="20.00" rx="0" fill="#5aa0e6" stroke="#3e5a72" stroke-width="1.5" />
<path d="M721 189 L721 180 Q733 172 748 175 L748 189 Z" fill="#c8b45a" stroke="none" stroke-width="1" />
<rect x="742.00" y="180.00" width="22.00" height="22.00" rx="4" fill="#3e5a72" stroke="none" stroke-width="0" />
<path d="M747 186 h6 M747 186 v10 h6" fill="none" stroke="#fff" stroke-width="2.2" />
<path d="M751 191 h9 M757 187 l4 4 l-4 4" fill="none" stroke="#fff" stroke-width="2.2" />
<path d="M784.5 154.5 L805.5 154.5 L814.5 163.5 L814.5 197.5 L784.5 197.5 Z" fill="#fff" stroke="#888" stroke-width="2" />
<path d="M805.5 154.5 L805.5 163.5 L814.5 163.5" fill="none" stroke="#888" stroke-width="1.6" />
<line x1="790.00" y1="178.00" x2="808.00" y2="178.00" stroke="#f4a30c" stroke-width="3.5" />
<line x1="792.64" y1="171.64" x2="805.36" y2="184.36" stroke="#f4a30c" stroke-width="3.5" />
<line x1="799.00" y1="169.00" x2="799.00" y2="187.00" stroke="#f4a30c" stroke-width="3.5" />
<line x1="805.36" y1="171.64" x2="792.64" y2="184.36" stroke="#f4a30c" stroke-width="3.5" />
<rect x="808.00" y="180.00" width="22.00" height="22.00" rx="4" fill="#3e5a72" stroke="none" stroke-width="0" />
<path d="M813 186 h6 M813 186 v10 h6" fill="none" stroke="#fff" stroke-width="2.2" />
<path d="M817 191 h9 M823 187 l4 4 l-4 4" fill="none" stroke="#fff" stroke-width="2.2" />
<path d="M850.5 154.5 L871.5 154.5 L880.5 163.5 L880.5 197.5 L850.5 197.5 Z" fill="#fff" stroke="#888" stroke-width="2" />
<path d="M871.5 154.5 L871.5 163.5 L880.5 163.5" fill="none" stroke="#888" stroke-width="1.6" />
<path d="M855 188 Q862 178 866 163 Q868 158 869 168 Q870 180 884 183 Q870 180 856 190" fill="none" stroke="#e02020" stroke-width="2" />
<rect x="874.00" y="180.00" width="22.00" height="22.00" rx="4" fill="#3e5a72" stroke="none" stroke-width="0" />
<path d="M879 186 h6 M879 186 v10 h6" fill="none" stroke="#fff" stroke-width="2.2" />
<path d="M883 191 h9 M889 187 l4 4 l-4 4" fill="none" stroke="#fff" stroke-width="2.2" />
<path d="M921 175 L934 160 L934 169 Q957 168 956 184 Q955 196 942 196 L940 190 Q948 189 948 183 Q948 176 934 178 L934 188 Z" fill="#e57c38" stroke="#c85e20" stroke-width="1.2" />
<path d="M1022 175 L1009 160 L1009 169 Q986 168 987 184 Q988 196 1001 196 L1003 190 Q995 189 995 183 Q995 176 1009 178 L1009 188 Z" fill="#e2e4e2" stroke="#d2d4d2" stroke-width="1.2" />
<circle cx="1054.00" cy="162.00" r="1.30" fill="#bdbdbd" stroke="none" stroke-width="1" />
<circle cx="1062.00" cy="162.00" r="1.30" fill="#bdbdbd" stroke="none" stroke-width="1" />
<circle cx="1054.00" cy="170.00" r="1.30" fill="#bdbdbd" stroke="none" stroke-width="1" />
<circle cx="1062.00" cy="170.00" r="1.30" fill="#bdbdbd" stroke="none" stroke-width="1" />
<circle cx="1054.00" cy="178.00" r="1.30" fill="#bdbdbd" stroke="none" stroke-width="1" />
<circle cx="1062.00" cy="178.00" r="1.30" fill="#bdbdbd" stroke="none" stroke-width="1" />
<circle cx="1054.00" cy="186.00" r="1.30" fill="#bdbdbd" stroke="none" stroke-width="1" />
<circle cx="1062.00" cy="186.00" r="1.30" fill="#bdbdbd" stroke="none" stroke-width="1" />
<circle cx="1054.00" cy="194.00" r="1.30" fill="#bdbdbd" stroke="none" stroke-width="1" />
<circle cx="1062.00" cy="194.00" r="1.30" fill="#bdbdbd" stroke="none" stroke-width="1" />
<rect x="1079.00" y="160.50" width="46.00" height="35.00" rx="7" fill="#e8e8e8" stroke="#d0d0d0" stroke-width="3" />
<path d="M1084 168 q4 -3 10 -2 l2 4 q-3 2 -2 5 l-3 5 q-2 -4 -5 -5 q-2 -3 -2 -7 Z M1096 181 q3 1 4 4 l-2 7 q-3 -4 -2 -11 Z" fill="#b8b8b8" stroke="none" stroke-width="1" />
<path d="M1103 167 q6 -3 14 -1 q2 3 -1 5 q-2 1 -1 4 l-4 2 q-2 -3 -5 -2 q-3 -2 -3 -8 Z M1112 180 q3 0 5 3 l-3 4 q-2 -2 -2 -7 Z" fill="#b8b8b8" stroke="none" stroke-width="1" />
<line x1="1080.00" y1="178.00" x2="1124.00" y2="178.00" stroke="#fafafa" stroke-width="2" />
<line x1="1102.00" y1="161.00" x2="1102.00" y2="195.00" stroke="#fafafa" stroke-width="2" />
<rect x="1148.50" y="158.00" width="6.00" height="39.50" rx="0" fill="#d0d4d8" stroke="#c4c8cc" stroke-width="1" />
<path d="M1154 177.5 L1168 158 L1168 169 L1188 169 L1188 186 L1168 186 L1168 197 Z" fill="#d5d9dd" stroke="#c8ccd0" stroke-width="1" />
<path d="M1217 177.5 L1231 158 L1231 169 L1251 169 L1251 186 L1231 186 L1231 197 Z" fill="#d5d9dd" stroke="#c8ccd0" stroke-width="1" />
<rect x="1269.50" y="149.50" width="165.00" height="57.00" rx="6" fill="#fff" stroke="#b5b5b5" stroke-width="2" />
<rect x="1395.00" y="151.00" width="38.50" height="54.00" rx="0" fill="#fafafa" stroke="none" stroke-width="1" />
<line x1="1394.50" y1="151.00" x2="1394.50" y2="206.00" stroke="#d5d5d5" stroke-width="1.5" />
<text x="1277.00" y="187.37" font-size="27" fill="#222" font-weight="normal" text-anchor="start" >1</text>
<path d="M1405 174 L1420.6 174 L1412.8 183 Z" fill="#bbb" stroke="none" stroke-width="1" />
<path d="M1487 177.5 L1473 158 L1473 169 L1453 169 L1453 186 L1473 186 L1473 197 Z" fill="#d5d9dd" stroke="#c8ccd0" stroke-width="1" />
<path d="M1550 177.5 L1536 158 L1536 169 L1516 169 L1516 186 L1536 186 L1536 197 Z" fill="#d5d9dd" stroke="#c8ccd0" stroke-width="1" />
<rect x="1550.00" y="158.00" width="6.00" height="39.50" rx="0" fill="#d0d4d8" stroke="#c4c8cc" stroke-width="1" />
<rect x="1592.00" y="158.00" width="20.00" height="13.00" rx="0" fill="#f4f4f4" stroke="#ccc" stroke-width="2" />
<rect x="1582.50" y="166.50" width="39.00" height="21.00" rx="5" fill="#dedede" stroke="#cfcfcf" stroke-width="2" />
<rect x="1592.00" y="178.00" width="20.00" height="19.00" rx="0" fill="#f4f4f4" stroke="#ccc" stroke-width="2" />
<path d="M1646.5 154.5 L1667.5 154.5 L1676.5 163.5 L1676.5 197.5 L1646.5 197.5 Z" fill="#fafafa" stroke="#ddd" stroke-width="2" />
<path d="M1667.5 154.5 L1667.5 163.5 L1676.5 163.5" fill="none" stroke="#ddd" stroke-width="1.6" />
<rect x="1649.00" y="169.00" width="27.00" height="20.00" rx="0" fill="#eceae0" stroke="none" stroke-width="1" />
<rect x="1670.00" y="180.00" width="22.00" height="22.00" rx="4" fill="#c8c8c8" stroke="none" stroke-width="0" />
<path d="M1675 186 h6 M1675 186 v10 h6" fill="none" stroke="#fff" stroke-width="2.2" />
<path d="M1679 191 h9 M1685 187 l4 4 l-4 4" fill="none" stroke="#fff" stroke-width="2.2" />
<path d="M1704 174 L1720 174 L1712 183 Z" fill="#444" stroke="none" stroke-width="1" />
<rect x="1734.00" y="156.50" width="45.00" height="35.00" rx="7" fill="#9db8dc" stroke="#6a8fc0" stroke-width="2.5" />
<path d="M1739 164 q4 -3 10 -2 l2 4 q-3 2 -2 5 l-3 5 q-2 -4 -5 -5 q-2 -3 -2 -7 Z M1758 163 q6 -3 14 -1 q2 3 -1 5 q-2 1 -1 4 l-4 2 q-2 -3 -5 -2 q-3 -2 -3 -8 Z" fill="#2f4f7a" stroke="none" stroke-width="1" />
<line x1="1735.00" y1="174.00" x2="1778.00" y2="174.00" stroke="#dfe8f4" stroke-width="1.5" />
<line x1="1756.00" y1="157.00" x2="1756.00" y2="191.00" stroke="#dfe8f4" stroke-width="1.5" />
<path d="M1752 176 L1776 199" fill="none" stroke="#444" stroke-width="7" stroke-linecap="round"/>
<path d="M1752 176 L1776 199" fill="none" stroke="#e8d17a" stroke-width="4" stroke-linecap="round"/>
<path d="M1746 168 a8 8 0 1 0 12 10" fill="none" stroke="#444" stroke-width="5" />
<path d="M1746 168 a8 8 0 1 0 12 10" fill="none" stroke="#ddd" stroke-width="2.5" />
<circle cx="122.00" cy="240.00" r="1.30" fill="#bdbdbd" stroke="none" stroke-width="1" />
<circle cx="130.00" cy="240.00" r="1.30" fill="#bdbdbd" stroke="none" stroke-width="1" />
<circle cx="122.00" cy="248.00" r="1.30" fill="#bdbdbd" stroke="none" stroke-width="1" />
<circle cx="130.00" cy="248.00" r="1.30" fill="#bdbdbd" stroke="none" stroke-width="1" />
<circle cx="122.00" cy="256.00" r="1.30" fill="#bdbdbd" stroke="none" stroke-width="1" />
<circle cx="130.00" cy="256.00" r="1.30" fill="#bdbdbd" stroke="none" stroke-width="1" />
<circle cx="122.00" cy="264.00" r="1.30" fill="#bdbdbd" stroke="none" stroke-width="1" />
<circle cx="130.00" cy="264.00" r="1.30" fill="#bdbdbd" stroke="none" stroke-width="1" />
<circle cx="122.00" cy="272.00" r="1.30" fill="#bdbdbd" stroke="none" stroke-width="1" />
<circle cx="130.00" cy="272.00" r="1.30" fill="#bdbdbd" stroke="none" stroke-width="1" />
<path d="M149.7 275.6 L163.7 261.6" fill="none" stroke="#3a3a3a" stroke-width="6.5" stroke-linecap="butt"/>
<path d="M150.7 274.6 L161.7 263.6" fill="none" stroke="#f2c12e" stroke-width="3" />
<circle cx="162.70" cy="262.60" r="2.50" fill="#222" stroke="none" stroke-width="1" />
<circle cx="174.70" cy="250.60" r="16.50" fill="#ececec" stroke="#6e6e6e" stroke-width="2.2" />
<path d="M174.7 240 v21 M164 250.6 h21" fill="none" stroke="#5b8cc8" stroke-width="5" stroke-linecap="round"/>
<path d="M215.8 275.6 L229.8 261.6" fill="none" stroke="#3a3a3a" stroke-width="6.5" stroke-linecap="butt"/>
<path d="M216.8 274.6 L227.8 263.6" fill="none" stroke="#f2c12e" stroke-width="3" />
<circle cx="228.80" cy="262.60" r="2.50" fill="#222" stroke="none" stroke-width="1" />
<circle cx="240.80" cy="250.60" r="16.50" fill="#ececec" stroke="#6e6e6e" stroke-width="2.2" />
<path d="M230 250.6 h21" fill="none" stroke="#5b8cc8" stroke-width="5" stroke-linecap="round"/>
<rect x="282.50" y="237.00" width="25.00" height="26.00" rx="0" fill="#eaeaea" stroke="#888" stroke-width="2" />
<path d="M282 275.6 L296 261.6" fill="none" stroke="#3a3a3a" stroke-width="6.5" stroke-linecap="butt"/>
<path d="M283 274.6 L294 263.6" fill="none" stroke="#f2c12e" stroke-width="3" />
<circle cx="295.00" cy="262.60" r="2.50" fill="#222" stroke="none" stroke-width="1" />
<circle cx="307.00" cy="250.60" r="16.50" fill="#ececec" stroke="#6e6e6e" stroke-width="2.2" />
<text x="307.00" y="258.00" font-size="17" fill="#222" font-weight="bold" text-anchor="middle" >1:1</text>
<path d="M348 279.4 L362 265.4" fill="none" stroke="#3a3a3a" stroke-width="6.5" stroke-linecap="butt"/>
<path d="M349 278.4 L360 267.4" fill="none" stroke="#f2c12e" stroke-width="3" />
<circle cx="361.00" cy="266.40" r="2.50" fill="#222" stroke="none" stroke-width="1" />
<circle cx="373.00" cy="254.40" r="16.50" fill="#ececec" stroke="#6e6e6e" stroke-width="2.2" />
<path d="M352 233 h15 l-5 5 l7 7 l-3 3 l-7 -7 l-5 5 Z" fill="#5b8cc8" stroke="#3e6390" stroke-width="1.2" />
<path d="M392 233 h-15 l5 5 l-7 7 l3 3 l7 -7 l5 5 Z" fill="#5b8cc8" stroke="#3e6390" stroke-width="1.2" />
<path d="M392 272 h-15 l5 -5 l-7 -7 l3 -3 l7 7 l5 -5 Z" fill="#5b8cc8" stroke="#3e6390" stroke-width="1.2" />
<path d="M418 256 A17 17 0 0 1 446 242" fill="none" stroke="#3f76b8" stroke-width="6" />
<path d="M440 236 L454 236 L452 252 Z" fill="#3f76b8" stroke="none" stroke-width="1" />
<path d="M450 256 A17 17 0 0 1 422 270" fill="none" stroke="#3f76b8" stroke-width="6" />
<path d="M428 276 L414 276 L416 260 Z" fill="#3f76b8" stroke="none" stroke-width="1" />
<circle cx="484.50" cy="240.00" r="1.30" fill="#bdbdbd" stroke="none" stroke-width="1" />
<circle cx="492.50" cy="240.00" r="1.30" fill="#bdbdbd" stroke="none" stroke-width="1" />
<circle cx="484.50" cy="248.00" r="1.30" fill="#bdbdbd" stroke="none" stroke-width="1" />
<circle cx="492.50" cy="248.00" r="1.30" fill="#bdbdbd" stroke="none" stroke-width="1" />
<circle cx="484.50" cy="256.00" r="1.30" fill="#bdbdbd" stroke="none" stroke-width="1" />
<circle cx="492.50" cy="256.00" r="1.30" fill="#bdbdbd" stroke="none" stroke-width="1" />
<circle cx="484.50" cy="264.00" r="1.30" fill="#bdbdbd" stroke="none" stroke-width="1" />
<circle cx="492.50" cy="264.00" r="1.30" fill="#bdbdbd" stroke="none" stroke-width="1" />
<circle cx="484.50" cy="272.00" r="1.30" fill="#bdbdbd" stroke="none" stroke-width="1" />
<circle cx="492.50" cy="272.00" r="1.30" fill="#bdbdbd" stroke="none" stroke-width="1" />
<rect x="512.50" y="238.50" width="25.00" height="23.00" rx="0" fill="#cfe5f7" stroke="#4f6f8f" stroke-width="2" />
<path d="M529 260 v-8 a10 10 0 0 1 20 0 v8" fill="none" stroke="#a0a0a0" stroke-width="3.5" />
<rect x="524.50" y="258.50" width="29.00" height="19.00" rx="2" fill="#f0d924" stroke="#c9a51e" stroke-width="2" />
<rect x="578.50" y="238.50" width="25.00" height="23.00" rx="0" fill="#cfe5f7" stroke="#4f6f8f" stroke-width="2" />
<circle cx="601.00" cy="248.00" r="11.00" fill="#cfe5f7" stroke="#4f6f8f" stroke-width="2" />
<path d="M594 258 v-6 a9 9 0 0 1 18 -3" fill="none" stroke="#a0a0a0" stroke-width="3.5" />
<rect x="590.50" y="258.50" width="29.00" height="19.00" rx="2" fill="#f0d924" stroke="#c9a51e" stroke-width="2" />
<rect x="648.50" y="252.50" width="25.00" height="18.00" rx="0" fill="#cfe5f7" stroke="#4f6f8f" stroke-width="2" />
<circle cx="669.00" cy="250.60" r="12.50" fill="#cfe5f7" stroke="#4f6f8f" stroke-width="2" />
<rect x="644.00" y="236.00" width="4.00" height="4.00" rx="0" fill="#000" stroke="none" stroke-width="1" />
<rect x="680.00" y="236.00" width="4.00" height="4.00" rx="0" fill="#000" stroke="none" stroke-width="1" />
<rect x="644.00" y="271.70" width="4.00" height="4.00" rx="0" fill="#000" stroke="none" stroke-width="1" />
<rect x="680.00" y="271.70" width="4.00" height="4.00" rx="0" fill="#000" stroke="none" stroke-width="1" />
<rect x="715.00" y="252.50" width="24.00" height="18.00" rx="0" fill="#f0eca0" stroke="#999" stroke-width="2" />
<circle cx="735.00" cy="250.60" r="12.50" fill="#cfe5f7" stroke="#4f6f8f" stroke-width="2" />
<rect x="720.00" y="236.00" width="4.00" height="4.00" rx="0" fill="#000" stroke="none" stroke-width="1" />
<rect x="746.00" y="236.00" width="4.00" height="4.00" rx="0" fill="#000" stroke="none" stroke-width="1" />
<rect x="710.00" y="248.00" width="4.00" height="4.00" rx="0" fill="#000" stroke="none" stroke-width="1" />
<rect x="710.00" y="271.70" width="4.00" height="4.00" rx="0" fill="#000" stroke="none" stroke-width="1" />
<rect x="740.00" y="271.70" width="4.00" height="4.00" rx="0" fill="#000" stroke="none" stroke-width="1" />
<rect x="720.00" y="262.00" width="4.00" height="4.00" rx="0" fill="#000" stroke="none" stroke-width="1" />
<rect x="746.00" y="262.00" width="4.00" height="4.00" rx="0" fill="#000" stroke="none" stroke-width="1" />
<rect x="777.00" y="252.50" width="30.00" height="22.50" rx="0" fill="#cfe5f7" stroke="#7a9ab8" stroke-width="2" />
<rect x="785.00" y="237.00" width="30.00" height="22.00" rx="0" fill="#f2eea0" stroke="#999" stroke-width="2" />
<path d="M812 275 L824 275 L818 281 Z" fill="#555" stroke="none" stroke-width="1" />
<rect x="842.00" y="234.00" width="2.00" height="43.50" rx="0" fill="#333" stroke="none" stroke-width="1" />
<rect x="844.00" y="237.00" width="19.00" height="16.00" rx="0" fill="#c8f5c8" stroke="#80b880" stroke-width="2" />
<rect x="844.00" y="257.00" width="27.50" height="18.50" rx="0" fill="#cfe5f7" stroke="#7a9ab8" stroke-width="2" />
<path d="M878 275 L890 275 L884 281 Z" fill="#555" stroke="none" stroke-width="1" />
<rect x="905.80" y="236.00" width="2.00" height="16.00" rx="0" fill="#333" stroke="none" stroke-width="1" />
<rect x="923.70" y="236.00" width="2.00" height="16.00" rx="0" fill="#333" stroke="none" stroke-width="1" />
<rect x="942.00" y="236.00" width="2.00" height="16.00" rx="0" fill="#333" stroke="none" stroke-width="1" />
<rect x="907.00" y="247.00" width="9.00" height="20.50" rx="0" fill="#c8f5c8" stroke="#80b880" stroke-width="1.8" />
<rect x="925.00" y="247.00" width="12.50" height="28.00" rx="0" fill="#cfe5f7" stroke="#7a9ab8" stroke-width="1.8" />
<rect x="943.00" y="247.00" width="9.00" height="16.00" rx="0" fill="#c8f5c8" stroke="#80b880" stroke-width="1.8" />
<path d="M944 275 L956 275 L950 281 Z" fill="#555" stroke="none" stroke-width="1" />
<rect x="975.00" y="237.00" width="22.50" height="38.50" rx="0" fill="#cfe5f7" stroke="#7a9ab8" stroke-width="2" />
<path d="M975 256 h8 M979 252 l4 4 l-4 4 M997 256 h-8 M993 252 l-4 4 l4 4" fill="none" stroke="#333" stroke-width="1.8" />
<rect x="1003.00" y="237.00" width="10.50" height="38.50" rx="0" fill="#f2eea0" stroke="#999" stroke-width="2" />
<path d="M1010 275 L1022 275 L1016 281 Z" fill="#555" stroke="none" stroke-width="1" />
<circle cx="139.00" cy="306.00" r="1.10" fill="#c0c0c0" stroke="none" stroke-width="1" />
<circle cx="139.00" cy="312.00" r="1.10" fill="#c0c0c0" stroke="none" stroke-width="1" />
<circle cx="145.30" cy="306.00" r="1.10" fill="#c0c0c0" stroke="none" stroke-width="1" />
<circle cx="145.30" cy="312.00" r="1.10" fill="#c0c0c0" stroke="none" stroke-width="1" />
<circle cx="151.60" cy="306.00" r="1.10" fill="#c0c0c0" stroke="none" stroke-width="1" />
<circle cx="151.60" cy="312.00" r="1.10" fill="#c0c0c0" stroke="none" stroke-width="1" />
<circle cx="157.90" cy="306.00" r="1.10" fill="#c0c0c0" stroke="none" stroke-width="1" />
<circle cx="157.90" cy="312.00" r="1.10" fill="#c0c0c0" stroke="none" stroke-width="1" />
<circle cx="164.20" cy="306.00" r="1.10" fill="#c0c0c0" stroke="none" stroke-width="1" />
<circle cx="164.20" cy="312.00" r="1.10" fill="#c0c0c0" stroke="none" stroke-width="1" />
<circle cx="170.50" cy="306.00" r="1.10" fill="#c0c0c0" stroke="none" stroke-width="1" />
<circle cx="170.50" cy="312.00" r="1.10" fill="#c0c0c0" stroke="none" stroke-width="1" />
<rect x="121.00" y="451.00" width="62.00" height="60.00" rx="5" fill="#ececec" stroke="#c4c4c4" stroke-width="1.5" />
<path d="M142 371 Q132 359 136 354 Q140 352 144 359 L144 337 Q147 332 150 337 L150 347 L151 333 Q155 329 157 334 L157 347 L159 337 Q163 333 165 339 L165 349 Q167 342 170 344 Q172 347 170 361 Q168 369 162 371 Z" fill="#fff" stroke="#111" stroke-width="2.2" />
<path d="M132 399 h14 M132 399 v22 h10" fill="none" stroke="#222" stroke-width="2" stroke-dasharray="4 3"/>
<path d="M134 435 L144 425" fill="none" stroke="#333" stroke-width="7" />
<path d="M135 434 L143 426" fill="none" stroke="#f2c12e" stroke-width="3" />
<circle cx="154.00" cy="411.00" r="16.00" fill="#efefef" stroke="#777" stroke-width="2" />
<rect x="133.00" y="463.00" width="34.00" height="32.00" rx="0" fill="none" stroke="#333" stroke-width="1.5" stroke-dasharray="2 3"/>
<rect x="130.00" y="460.00" width="6.00" height="6.00" rx="0" fill="#fff" stroke="#333" stroke-width="1.5" />
<rect x="164.00" y="460.00" width="6.00" height="6.00" rx="0" fill="#fff" stroke="#333" stroke-width="1.5" />
<rect x="130.00" y="492.00" width="6.00" height="6.00" rx="0" fill="#fff" stroke="#333" stroke-width="1.5" />
<rect x="164.00" y="492.00" width="6.00" height="6.00" rx="0" fill="#fff" stroke="#333" stroke-width="1.5" />
<path d="M140 460 L164 483 L154 484 L160 496 L155 499 L149 487 L142 493 Z" fill="#fff" stroke="#111" stroke-width="2" />
<path d="M134 525 h34 v38 h-30 q-6 0 -6 -6 Z" fill="#e8e8e8" stroke="#888" stroke-width="2" />
<path d="M150 528 l-8 8 h5 v8 h6 v-8 h5 Z" fill="#5b8cc8" stroke="#3e6390" stroke-width="1" />
<rect x="140.00" y="545.00" width="7.00" height="8.00" rx="0" fill="#5b8cc8" stroke="none" stroke-width="1" />
<rect x="160.00" y="545.00" width="7.00" height="8.00" rx="0" fill="#5b8cc8" stroke="none" stroke-width="1" />
<rect x="150.00" y="555.00" width="7.00" height="6.00" rx="0" fill="#5b8cc8" stroke="none" stroke-width="1" />
<path d="M136 625 L146 588 L168 599" fill="none" stroke="#111" stroke-width="2" />
<path d="M136 625 L150 620" fill="none" stroke="#111" stroke-width="2" stroke-dasharray="2 2"/>
<path d="M144 626 L164 604" fill="none" stroke="#c9a51e" stroke-width="6" />
<path d="M146 602 L170 626" fill="none" stroke="#b07020" stroke-width="5" />
<circle cx="136.00" cy="625.00" r="5.00" fill="#3c7de6" stroke="none" stroke-width="1" />
<circle cx="146.00" cy="588.00" r="5.00" fill="#3c7de6" stroke="none" stroke-width="1" />
<circle cx="168.00" cy="599.00" r="5.00" fill="#3c7de6" stroke="none" stroke-width="1" />
<path d="M134 651 h34 v38 h-30 q-6 0 -6 -6 Z" fill="#e8e8e8" stroke="#888" stroke-width="2" />
<line x1="140.00" y1="651.00" x2="140.00" y2="685.00" stroke="#aaa" stroke-width="2" />
<rect x="155.50" y="675.50" width="19.00" height="19.00" rx="4" fill="#5a8f5a" stroke="#3f6f3f" stroke-width="1" />
<path d="M165 679 v12 M159 685 h12" fill="none" stroke="#fff" stroke-width="3" />
<path d="M132 745 L140 721 L168 721 L170 751 L144 745 Z" fill="#e8e8e8" stroke="#aaa" stroke-width="2" />
<path d="M138 733 l28 0 M148 721 l4 28 M158 721 l-4 28" fill="none" stroke="#bbb" stroke-width="1.5" />
<rect x="155.50" y="741.50" width="19.00" height="19.00" rx="4" fill="#5a8f5a" stroke="#3f6f3f" stroke-width="1" />
<path d="M165 745 v12 M159 751 h12" fill="none" stroke="#fff" stroke-width="3" />
<rect x="133.00" y="785.00" width="38.00" height="28.00" rx="0" fill="#6fb0e8" stroke="#777" stroke-width="2" />
<path d="M134 812 L134 800 Q148 788 170 798 L170 812 Z" fill="#c6ac4e" stroke="none" stroke-width="1" />
<rect x="155.50" y="806.50" width="19.00" height="19.00" rx="4" fill="#5a8f5a" stroke="#3f6f3f" stroke-width="1" />
<path d="M165 810 v12 M159 816 h12" fill="none" stroke="#fff" stroke-width="3" />
<rect x="133.00" y="850.00" width="38.00" height="28.00" rx="0" fill="#f0f0f0" stroke="#888" stroke-width="2" />
<text x="152.00" y="874.00" font-size="24" fill="#333" font-weight="normal" text-anchor="middle" font-family="Liberation Serif">T</text>
<rect x="155.50" y="871.50" width="19.00" height="19.00" rx="4" fill="#5a8f5a" stroke="#3f6f3f" stroke-width="1" />
<path d="M165 875 v12 M159 881 h12" fill="none" stroke="#fff" stroke-width="3" />
<rect x="133.00" y="910.00" width="9.00" height="8.00" rx="0" fill="#f4c20d" stroke="#c9a51e" stroke-width="1" />
<rect x="133.00" y="922.00" width="9.00" height="8.00" rx="0" fill="#e03010" stroke="#a02000" stroke-width="1" />
<rect x="133.00" y="934.00" width="9.00" height="8.00" rx="0" fill="#00a060" stroke="#007040" stroke-width="1" />
<rect x="145.00" y="913.00" width="10.00" height="3.00" rx="0" fill="#999" stroke="none" stroke-width="1" />
<rect x="145.00" y="925.00" width="16.00" height="3.00" rx="0" fill="#999" stroke="none" stroke-width="1" />
<rect x="145.00" y="937.00" width="8.00" height="3.00" rx="0" fill="#999" stroke="none" stroke-width="1" />
<rect x="155.50" y="933.50" width="19.00" height="19.00" rx="4" fill="#5a8f5a" stroke="#3f6f3f" stroke-width="1" />
<path d="M165 937 v12 M159 943 h12" fill="none" stroke="#fff" stroke-width="3" />
<rect x="132.00" y="978.00" width="40.00" height="7.00" rx="0" fill="#555" stroke="none" stroke-width="1" />
<rect x="140.00" y="980.00" width="7.00" height="3.00" rx="0" fill="#fff" stroke="none" stroke-width="1" />
<rect x="155.00" y="980.00" width="7.00" height="3.00" rx="0" fill="#fff" stroke="none" stroke-width="1" />
<rect x="155.50" y="988.50" width="19.00" height="19.00" rx="4" fill="#5a8f5a" stroke="#3f6f3f" stroke-width="1" />
<path d="M165 992 v12 M159 998 h12" fill="none" stroke="#fff" stroke-width="3" />
<path d="M138 1071 L152 1035 L162 1063 Z" fill="#5b8cc8" stroke="#3e6390" stroke-width="1.5" />
<text x="151.00" y="1057.00" font-size="13" fill="#fff" font-weight="bold" text-anchor="middle" >N</text>
<rect x="155.50" y="1055.50" width="19.00" height="19.00" rx="4" fill="#5a8f5a" stroke="#3f6f3f" stroke-width="1" />
<path d="M165 1059 v12 M159 1065 h12" fill="none" stroke="#fff" stroke-width="3" />
<rect x="133.00" y="1118.00" width="30.00" height="20.00" rx="0" fill="#cfe5f7" stroke="#7a9ab8" stroke-width="2" />
<circle cx="158.00" cy="1122.00" r="10.00" fill="#f4b0b0" stroke="#d07070" stroke-width="2" />
<path d="M138 1126 L149 1100 L160 1126 Z" fill="#b8f0b8" stroke="#70b070" stroke-width="2" />
<rect x="155.50" y="1128.50" width="19.00" height="19.00" rx="4" fill="#5a8f5a" stroke="#3f6f3f" stroke-width="1" />
<path d="M165 1132 v12 M159 1138 h12" fill="none" stroke="#fff" stroke-width="3" />
<path d="M170 1146 L178 1146 L174 1150 Z" fill="#333" stroke="none" stroke-width="1" />
<path d="M152 1166 L158 1180 L172 1180 L161 1189 L165 1203 L152 1194 L139 1203 L143 1189 L132 1180 L146 1180 Z" fill="#fde79a" stroke="#d89a50" stroke-width="2" />
<rect x="155.50" y="1190.50" width="19.00" height="19.00" rx="4" fill="#5a8f5a" stroke="#3f6f3f" stroke-width="1" />
<path d="M165 1194 v12 M159 1200 h12" fill="none" stroke="#fff" stroke-width="3" />
<path d="M135 1266 L167 1234" fill="none" stroke="#333" stroke-width="2.5" />
<rect x="131.00" y="1262.00" width="8.00" height="8.00" rx="0" fill="#333" stroke="none" stroke-width="1" />
<path d="M170 1230 L157 1234 L166 1243 Z" fill="#ddd" stroke="#333" stroke-width="2" />
<rect x="155.50" y="1253.50" width="19.00" height="19.00" rx="4" fill="#5a8f5a" stroke="#3f6f3f" stroke-width="1" />
<path d="M165 1257 v12 M159 1263 h12" fill="none" stroke="#fff" stroke-width="3" />
<path d="M136 1330 L146 1293 L168 1304" fill="none" stroke="#111" stroke-width="2.5" />
<path d="M136 1330 L162 1317" fill="none" stroke="#111" stroke-width="2" stroke-dasharray="2 2"/>
<circle cx="136.00" cy="1330.00" r="5.00" fill="#3c7de6" stroke="none" stroke-width="1" />
<circle cx="146.00" cy="1293.00" r="5.00" fill="#3c7de6" stroke="none" stroke-width="1" />
<circle cx="168.00" cy="1304.00" r="5.00" fill="#3c7de6" stroke="none" stroke-width="1" />
<rect x="155.50" y="1317.50" width="19.00" height="19.00" rx="4" fill="#5a8f5a" stroke="#3f6f3f" stroke-width="1" />
<path d="M165 1321 v12 M159 1327 h12" fill="none" stroke="#fff" stroke-width="3" />
<path d="M170 1335 L178 1335 L174 1339 Z" fill="#333" stroke="none" stroke-width="1" />
<rect x="133.00" y="1357.00" width="36.00" height="36.00" rx="0" fill="#e8e8e8" stroke="#999" stroke-width="2" />
<rect x="137.00" y="1364.00" width="14.00" height="3.00" rx="0" fill="#6a96c8" stroke="none" stroke-width="1" />
<rect x="137.00" y="1371.00" width="14.00" height="3.00" rx="0" fill="#6a96c8" stroke="none" stroke-width="1" />
<rect x="137.00" y="1378.00" width="14.00" height="3.00" rx="0" fill="#6a96c8" stroke="none" stroke-width="1" />
<rect x="137.00" y="1385.00" width="14.00" height="3.00" rx="0" fill="#6a96c8" stroke="none" stroke-width="1" />
<text x="155.00" y="1372.00" font-size="14" fill="#222" font-weight="bold" text-anchor="middle" >&lt;/&gt;</text>
<rect x="155.50" y="1380.50" width="19.00" height="19.00" rx="4" fill="#5a8f5a" stroke="#3f6f3f" stroke-width="1" />
<path d="M165 1384 v12 M159 1390 h12" fill="none" stroke="#fff" stroke-width="3" />
<rect x="133.00" y="1422.00" width="36.00" height="36.00" rx="0" fill="#eef2f8" stroke="#6a96c8" stroke-width="2" />
<rect x="133.00" y="1422.00" width="36.00" height="8.00" rx="0" fill="#a8c4e4" stroke="none" stroke-width="1" />
<rect x="137.00" y="1434.00" width="10.00" height="2.50" rx="0" fill="#6a96c8" stroke="none" stroke-width="1" />
<rect x="150.00" y="1434.00" width="14.00" height="2.50" rx="0" fill="#6a96c8" stroke="none" stroke-width="1" />
<rect x="137.00" y="1441.00" width="10.00" height="2.50" rx="0" fill="#6a96c8" stroke="none" stroke-width="1" />
<rect x="150.00" y="1441.00" width="14.00" height="2.50" rx="0" fill="#6a96c8" stroke="none" stroke-width="1" />
<rect x="137.00" y="1448.00" width="10.00" height="2.50" rx="0" fill="#6a96c8" stroke="none" stroke-width="1" />
<rect x="150.00" y="1448.00" width="14.00" height="2.50" rx="0" fill="#6a96c8" stroke="none" stroke-width="1" />
<rect x="155.50" y="1445.50" width="19.00" height="19.00" rx="4" fill="#5a8f5a" stroke="#3f6f3f" stroke-width="1" />
<path d="M165 1449 v12 M159 1455 h12" fill="none" stroke="#fff" stroke-width="3" />
<rect x="133.00" y="1487.00" width="36.00" height="36.00" rx="0" fill="#eef2f8" stroke="#6a96c8" stroke-width="2" />
<rect x="133.00" y="1487.00" width="36.00" height="8.00" rx="0" fill="#a8c4e4" stroke="none" stroke-width="1" />
<path d="M144 1516 L166 1484 L170 1488 L148 1520 Z" fill="#e8a040" stroke="#7a5020" stroke-width="1.5" />
<rect x="155.50" y="1510.50" width="19.00" height="19.00" rx="4" fill="#5a8f5a" stroke="#3f6f3f" stroke-width="1" />
<path d="M165 1514 v12 M159 1520 h12" fill="none" stroke="#fff" stroke-width="3" />
<rect x="133.00" y="1550.00" width="36.00" height="36.00" rx="0" fill="#e0e8e0" stroke="#6a96c8" stroke-width="2" />
<path d="M134 1585 L134 1575 Q144 1565 150 1571 Q158 1551 168 1563 L168 1585 Z" fill="#a8c8a8" stroke="#3a6a3a" stroke-width="2" />
<rect x="155.50" y="1573.50" width="19.00" height="19.00" rx="4" fill="#5a8f5a" stroke="#3f6f3f" stroke-width="1" />
<path d="M165 1577 v12 M159 1583 h12" fill="none" stroke="#fff" stroke-width="3" />
<circle cx="2782.00" cy="1226.00" r="1.10" fill="#b8b8b8" stroke="none" stroke-width="1" />
<circle cx="2782.00" cy="1232.00" r="1.10" fill="#b8b8b8" stroke="none" stroke-width="1" />
<circle cx="2782.00" cy="1238.00" r="1.10" fill="#b8b8b8" stroke="none" stroke-width="1" />
<circle cx="2782.00" cy="1244.00" r="1.10" fill="#b8b8b8" stroke="none" stroke-width="1" />
<circle cx="2782.00" cy="1250.00" r="1.10" fill="#b8b8b8" stroke="none" stroke-width="1" />
<circle cx="2782.00" cy="1256.00" r="1.10" fill="#b8b8b8" stroke="none" stroke-width="1" />
<path d="M2808 714 Q2810 703 2822 703 Q2829 703 2832 708 L2835 703 L2835 716 L2822 716 L2826 712 Q2822 709 2820 710 Q2815 711 2815 716 Z" fill="#4f86c6" stroke="none" stroke-width="1" />
<path d="M2833 720 Q2831 732 2819 732 Q2812 732 2809 727 L2806 732 L2806 719 L2819 719 L2815 723 Q2819 726 2821 725 Q2826 724 2826 719 Z" fill="#4f86c6" stroke="none" stroke-width="1" />
<rect x="2850.60" y="705.00" width="2.00" height="25.00" rx="0" fill="#dcdcdc" stroke="none" stroke-width="1" />
<path d="M2869 704 h26 v28 h-22 q-4 0 -4 -4 Z" fill="#e8e8e8" stroke="#888" stroke-width="1.8" />
<path d="M2873 703 v10 h10 M2878 715 l5 -5 l5 5 M2883 714 v-12" fill="none" stroke="#e07020" stroke-width="3" />
<path d="M2921 704 h26 v28 h-22 q-4 0 -4 -4 Z" fill="#e8e8e8" stroke="#888" stroke-width="1.8" />
<path d="M2931 719 q0 -12 12 -12 M2940 702 l4 5 l-4 5" fill="none" stroke="#e07020" stroke-width="3" />
<path d="M2982 704 h26 v28 h-22 q-4 0 -4 -4 Z" fill="#e8e8e8" stroke="#888" stroke-width="1.8" />
<path d="M2986 703 v10 h10 M2991 715 l5 -5 l5 5 M2996 714 v-12" fill="none" stroke="#e07020" stroke-width="3" />
<path d="M3034 704 h26 v28 h-22 q-4 0 -4 -4 Z" fill="#e8e8e8" stroke="#888" stroke-width="1.8" />
<path d="M3044 719 q0 -12 12 -12 M3053 702 l4 5 l-4 5" fill="none" stroke="#e07020" stroke-width="3" />
<rect x="2964.50" y="705.00" width="2.00" height="25.00" rx="0" fill="#dcdcdc" stroke="none" stroke-width="1" />
<rect x="3078.00" y="705.00" width="2.00" height="25.00" rx="0" fill="#dcdcdc" stroke="none" stroke-width="1" />
<path d="M3099 704 h26 v28 h-22 q-4 0 -4 -4 Z" fill="#e8e8e8" stroke="#888" stroke-width="1.8" />
<rect x="3115.00" y="701.00" width="5.00" height="14.00" rx="0" fill="#5b8cc8" stroke="none" stroke-width="1" />
<path d="M3121 727 L3130 727 L3125.5 732 Z" fill="#333" stroke="none" stroke-width="1" />
<path d="M3148 704 h26 v28 h-22 q-4 0 -4 -4 Z" fill="#e8e8e8" stroke="#888" stroke-width="1.8" />
<path d="M3162 705 l-6 6 h4 v6 h4 v-6 h4 Z" fill="#5b8cc8" stroke="none" stroke-width="1" />
<rect x="3192.40" y="705.00" width="2.00" height="25.00" rx="0" fill="#dcdcdc" stroke="none" stroke-width="1" />
<path d="M3212 717.5 L3218 710 h22 v15 h-22 Z" fill="#f4dc3a" stroke="#b8a020" stroke-width="1.5" />
<text x="3229.00" y="722.00" font-size="11" fill="#333" font-weight="bold" text-anchor="middle" >abc</text>
<rect x="3262.00" y="716.00" width="18.00" height="16.00" rx="0" fill="#c8dcc8" stroke="#555" stroke-width="1.2" stroke-dasharray="2 2"/>
<circle cx="3282.00" cy="708.00" r="9.00" fill="#c8dcc8" stroke="#555" stroke-width="1.2" stroke-dasharray="2 2"/>
</g>
</svg></body></html>
